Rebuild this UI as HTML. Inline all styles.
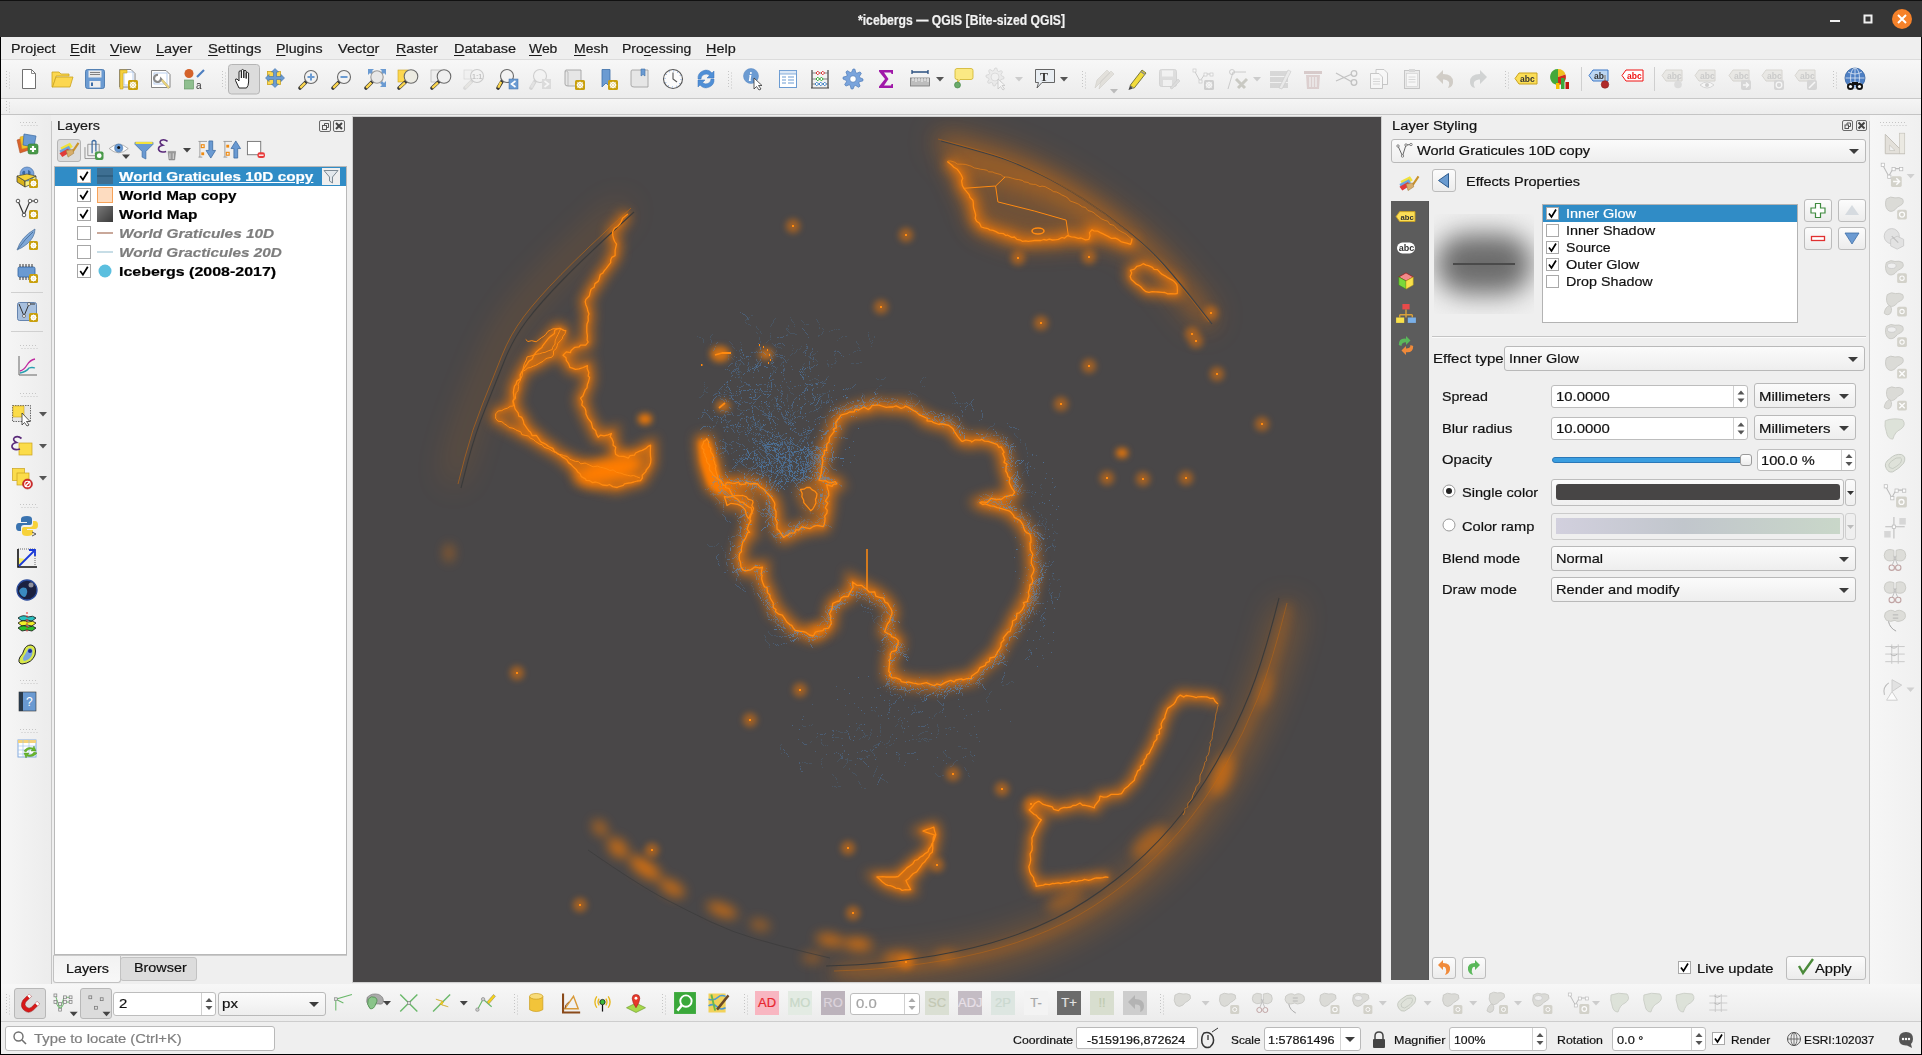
<!DOCTYPE html><html><head><meta charset="utf-8"><style>
html,body{margin:0;padding:0;width:1922px;height:1055px;overflow:hidden;background:#000}
.t{position:absolute;font-family:"Liberation Sans",sans-serif;line-height:16px;white-space:nowrap;transform-origin:0 0;-webkit-text-stroke:0.2px currentColor}
.r{position:absolute}
u{text-decoration:underline;text-underline-offset:2px}
svg{position:absolute;left:0;top:0}
</style></head><body>
<div class="r" style="left:0px;top:0px;width:1922px;height:1055px;background:#000;"></div>
<div class="r" style="left:1px;top:0px;width:1920px;height:1054px;background:#efefef;"></div>
<div class="r" style="left:0px;top:0px;width:1922px;height:37px;background:#363636;"></div>
<div class="r" style="left:0px;top:0px;width:1922px;height:1px;background:#111;"></div>
<div class="t" style="left:857.5px;top:12.0px;font-size:14.50px;color:#f2f2f2;transform:scaleX(0.8396);font-weight:bold;">*icebergs — QGIS [Bite-sized QGIS]</div>
<div class="r" style="left:1px;top:37px;width:1920px;height:23px;background:#efefef;"></div>
<div class="r" style="left:1px;top:59px;width:1920px;height:1px;background:#dcdcdc;"></div>
<div class="t" style="left:11.0px;top:41.3px;font-size:13.50px;color:#1a1a1a;transform:scaleX(1.0586);">Pro<u>j</u>ect</div>
<div class="t" style="left:70.0px;top:41.3px;font-size:13.50px;color:#1a1a1a;transform:scaleX(1.0822);"><u>E</u>dit</div>
<div class="t" style="left:110.0px;top:41.3px;font-size:13.50px;color:#1a1a1a;transform:scaleX(1.0631);"><u>V</u>iew</div>
<div class="t" style="left:156.0px;top:41.3px;font-size:13.50px;color:#1a1a1a;transform:scaleX(1.0735);"><u>L</u>ayer</div>
<div class="t" style="left:208.0px;top:41.3px;font-size:13.50px;color:#1a1a1a;transform:scaleX(1.0931);"><u>S</u>ettings</div>
<div class="t" style="left:276.0px;top:41.3px;font-size:13.50px;color:#1a1a1a;transform:scaleX(1.0517);"><u>P</u>lugins</div>
<div class="t" style="left:338.0px;top:41.3px;font-size:13.50px;color:#1a1a1a;transform:scaleX(1.0824);">Vect<u>o</u>r</div>
<div class="t" style="left:395.6px;top:41.3px;font-size:13.50px;color:#1a1a1a;transform:scaleX(1.0545);"><u>R</u>aster</div>
<div class="t" style="left:453.5px;top:41.3px;font-size:13.50px;color:#1a1a1a;transform:scaleX(1.0734);"><u>D</u>atabase</div>
<div class="t" style="left:529.0px;top:41.3px;font-size:13.50px;color:#1a1a1a;transform:scaleX(1.0302);"><u>W</u>eb</div>
<div class="t" style="left:573.7px;top:41.3px;font-size:13.50px;color:#1a1a1a;transform:scaleX(1.0369);"><u>M</u>esh</div>
<div class="t" style="left:622.4px;top:41.3px;font-size:13.50px;color:#1a1a1a;transform:scaleX(1.0395);">Pro<u>c</u>essing</div>
<div class="t" style="left:706.3px;top:41.3px;font-size:13.50px;color:#1a1a1a;transform:scaleX(1.0676);"><u>H</u>elp</div>
<div class="r" style="left:1px;top:60px;width:1920px;height:38px;background:linear-gradient(#f7f7f7,#ececec);"></div>
<div class="r" style="left:1px;top:98px;width:1920px;height:1px;background:#c8c8c8;"></div>
<div class="r" style="left:1px;top:99px;width:1920px;height:15px;background:linear-gradient(#f5f5f5,#ededed);"></div>
<div class="r" style="left:1px;top:114px;width:1920px;height:1px;background:#c4c4c4;"></div>
<div class="r" style="left:1px;top:115px;width:50px;height:869px;background:linear-gradient(90deg,#f6f6f6,#ececec);"></div>
<div class="r" style="left:51px;top:121px;width:1px;height:863px;background:#c6c6c6;"></div>
<div class="r" style="left:52px;top:115px;width:297px;height:869px;background:#efefef;"></div>
<div class="t" style="left:57.3px;top:118.3px;font-size:13.50px;color:#1a1a1a;transform:scaleX(1.0618);">Layers</div>
<div class="r" style="left:54px;top:166px;width:293px;height:789px;background:#fff;border:1px solid #b9b9b9;box-sizing:border-box;"></div>
<div class="r" style="left:53px;top:955px;width:294px;height:1px;background:#c9c9c9;"></div>
<div class="r" style="left:120px;top:957px;width:77px;height:24px;background:#dcdcdc;border:1px solid #c2c2c2;box-sizing:border-box;border-radius:3px;border-top-left-radius:3px;"></div>
<div class="r" style="left:53px;top:956px;width:68px;height:27px;background:linear-gradient(#f2f2f2,#f8f8f8);border:1px solid #c2c2c2;box-sizing:border-box;border-radius:3px;border-top:none;border-top-left-radius:0;border-top-right-radius:0;"></div>
<div class="t" style="left:65.5px;top:961.3px;font-size:13.50px;color:#111;transform:scaleX(1.0618);">Layers</div>
<div class="t" style="left:133.5px;top:960.3px;font-size:13.50px;color:#111;transform:scaleX(1.0640);">Browser</div>
<div class="r" style="left:349px;top:115px;width:4px;height:869px;background:#efefef;"></div>
<div class="r" style="left:352px;top:116px;width:1030px;height:867px;background:#d0d0d0;"></div>
<div class="r" style="left:353px;top:117px;width:1028px;height:865px;background:#494748;"></div>
<div class="r" style="left:1382px;top:115px;width:488px;height:869px;background:#efefef;"></div>
<div class="r" style="left:1869px;top:121px;width:1px;height:863px;background:#c8c8c8;"></div>
<div class="r" style="left:1870px;top:115px;width:51px;height:869px;background:linear-gradient(90deg,#f6f6f6,#f0f0f0);"></div>
<div class="r" style="left:1px;top:984px;width:1920px;height:37px;background:linear-gradient(#f7f7f7,#ececec);"></div>
<div class="r" style="left:1px;top:1021px;width:1920px;height:1px;background:#cdcdcd;"></div>
<div class="r" style="left:1px;top:1022px;width:1920px;height:32px;background:#efefef;"></div>
<div class="r" style="left:319px;top:120px;width:12px;height:12px;background:none;border:1px solid #6a6a6a;box-sizing:border-box;border-radius:2px;"></div>
<div class="r" style="left:333px;top:120px;width:12px;height:12px;background:none;border:1px solid #6a6a6a;box-sizing:border-box;border-radius:2px;"></div>
<svg width="12" height="12" style="position:absolute;left:319px;top:120px"><rect x="3.5" y="5.5" width="4" height="4" fill="none" stroke="#555"/><path d="M5.5 5.5 V3.5 H9.5 V7.5 H7.5" fill="none" stroke="#555"/></svg><svg width="12" height="12" style="position:absolute;left:333px;top:120px"><path d="M3 3 L9 9 M9 3 L3 9" stroke="#444" stroke-width="2"/></svg><div class="r" style="left:57px;top:139px;width:24px;height:23px;background:#dcdcdc;border:1px solid #b5b5b5;box-sizing:border-box;border-radius:3px;"></div>
<div class="r" style="left:55px;top:167px;width:291px;height:19px;background:#308cc6;"></div>
<svg width="14" height="14" style="position:absolute;left:77px;top:169px"><rect x="0.5" y="0.5" width="13" height="13" fill="#fff" stroke="#d9c9c0"/><path d="M3.23 7.00 L5.92 10.77 L10.77 2.69" fill="none" stroke="#000" stroke-width="1.7"/></svg>
<div class="t" style="left:119.4px;top:169.3px;font-size:13.50px;color:#fff;transform:scaleX(1.1330);font-weight:bold;text-decoration:underline;text-underline-offset:1px;">World Graticules 10D copy</div>
<svg width="14" height="14" style="position:absolute;left:77px;top:188px"><rect x="0.5" y="0.5" width="13" height="13" fill="#fff" stroke="#a6a6a6"/><path d="M3.23 7.00 L5.92 10.77 L10.77 2.69" fill="none" stroke="#000" stroke-width="1.7"/></svg>
<div class="t" style="left:119.4px;top:188.3px;font-size:13.50px;color:#000;transform:scaleX(1.1295);font-weight:bold;">World Map copy</div>
<svg width="14" height="14" style="position:absolute;left:77px;top:207px"><rect x="0.5" y="0.5" width="13" height="13" fill="#fff" stroke="#a6a6a6"/><path d="M3.23 7.00 L5.92 10.77 L10.77 2.69" fill="none" stroke="#000" stroke-width="1.7"/></svg>
<div class="t" style="left:119.4px;top:207.3px;font-size:13.50px;color:#000;transform:scaleX(1.1422);font-weight:bold;">World Map</div>
<svg width="14" height="14" style="position:absolute;left:77px;top:226px"><rect x="0.5" y="0.5" width="13" height="13" fill="#fff" stroke="#a6a6a6"/></svg>
<div class="t" style="left:119.4px;top:226.3px;font-size:13.50px;color:#7d7d7d;transform:scaleX(1.1385);font-weight:bold;font-style:italic;">World Graticules 10D</div>
<svg width="14" height="14" style="position:absolute;left:77px;top:245px"><rect x="0.5" y="0.5" width="13" height="13" fill="#fff" stroke="#a6a6a6"/></svg>
<div class="t" style="left:119.4px;top:245.3px;font-size:13.50px;color:#7d7d7d;transform:scaleX(1.1327);font-weight:bold;font-style:italic;">World Gracticules 20D</div>
<svg width="14" height="14" style="position:absolute;left:77px;top:264px"><rect x="0.5" y="0.5" width="13" height="13" fill="#fff" stroke="#a6a6a6"/><path d="M3.23 7.00 L5.92 10.77 L10.77 2.69" fill="none" stroke="#000" stroke-width="1.7"/></svg>
<div class="t" style="left:119.4px;top:264.3px;font-size:13.50px;color:#000;transform:scaleX(1.1828);font-weight:bold;">Icebergs (2008-2017)</div>
<div class="r" style="left:97px;top:168px;width:16px;height:16px;background:#3e6f92;"></div>
<div class="r" style="left:97px;top:175px;width:16px;height:2px;background:#2f5f80;"></div>
<div class="r" style="left:97px;top:187px;width:16px;height:16px;background:#fddcc0;border:1px solid #f6a35a;box-sizing:border-box;"></div>
<div class="r" style="left:97px;top:206px;width:16px;height:16px;background:linear-gradient(135deg,#7a7a7a,#3a3a3a);"></div>
<div class="r" style="left:97px;top:232px;width:16px;height:2px;background:#c9a89a;"></div>
<div class="r" style="left:97px;top:251px;width:16px;height:2px;background:#c7dde6;"></div>
<svg width="16" height="16" style="position:absolute;left:97px;top:263px"><circle cx="8" cy="8" r="6.5" fill="#5bbfdf"/></svg><div class="r" style="left:322px;top:168px;width:18px;height:17px;background:#efefef;"></div>
<svg width="18" height="17" style="position:absolute;left:322px;top:168px"><path d="M2 2.5 H16 L10.5 9 V15 L7.5 13 V9Z" fill="#e3e8ec" stroke="#7d8a94" stroke-width="1"/></svg><div class="t" style="left:1392.0px;top:118.3px;font-size:13.50px;color:#111;transform:scaleX(1.0910);">Layer Styling</div>
<div class="r" style="left:1842px;top:120px;width:11px;height:11px;background:none;border:1px solid #6a6a6a;box-sizing:border-box;border-radius:2px;"></div>
<div class="r" style="left:1856px;top:120px;width:11px;height:11px;background:none;border:1px solid #6a6a6a;box-sizing:border-box;border-radius:2px;"></div>
<svg width="11" height="11" style="position:absolute;left:1842px;top:120px"><rect x="3" y="5" width="3.5" height="3.5" fill="none" stroke="#555"/><path d="M5 5 V3 H8.5 V6.5 H6.5" fill="none" stroke="#555"/></svg><svg width="11" height="11" style="position:absolute;left:1856px;top:120px"><path d="M2.5 2.5 L8.5 8.5 M8.5 2.5 L2.5 8.5" stroke="#444" stroke-width="2"/></svg><div class="r" style="left:1391px;top:139px;width:475px;height:24px;background:linear-gradient(#fbfbfb,#eeeeee);border:1px solid #b9b9b9;box-sizing:border-box;border-radius:3px;"></div>
<svg width="12" height="8" style="position:absolute;left:1848px;top:148.0px"><path d="M1 1 L11 1 L6 6Z" fill="#3c3c3c"/></svg><div class="t" style="left:1416.8px;top:143.3px;font-size:13.50px;color:#111;transform:scaleX(1.0799);">World Graticules 10D copy</div>
<svg width="18" height="16" style="position:absolute;left:1396px;top:142px"><path d="M2 4 L6.5 14 L10 3 L15 2.5" fill="none" stroke="#555" stroke-width="0.9"/><circle cx="2" cy="4" r="1.2" fill="#fff" stroke="#555" stroke-width="0.7"/><circle cx="6.5" cy="14" r="1.2" fill="#fff" stroke="#555" stroke-width="0.7"/><circle cx="10" cy="3" r="1.2" fill="#fff" stroke="#555" stroke-width="0.7"/><circle cx="15" cy="2.5" r="1.2" fill="#fff" stroke="#555" stroke-width="0.7"/></svg><div class="r" style="left:1432px;top:169px;width:24px;height:23px;background:linear-gradient(#fcfcfc,#ececec);border:1px solid #bcbcbc;box-sizing:border-box;border-radius:3px;"></div>
<svg width="24" height="23" style="position:absolute;left:1432px;top:169px"><path d="M16.5 4.5 V18.5 L6.5 11.5Z" fill="#6a9bd0" stroke="#2d5b8e" stroke-width="1"/></svg><div class="t" style="left:1466.0px;top:173.9px;font-size:13.50px;color:#111;transform:scaleX(1.0727);">Effects Properties</div>
<div class="r" style="left:1391px;top:201px;width:38px;height:779px;background:#5c5c5c;"></div>
<div class="r" style="left:1428px;top:201px;width:1px;height:779px;background:#555;"></div>
<div class="r" style="left:1434px;top:214px;width:100px;height:100px;background:#efefef;overflow:hidden"><div style="position:absolute;left:2px;top:20px;width:96px;height:60px;background:#6c6c6c;filter:blur(13px);border-radius:42px"></div><div style="position:absolute;left:19px;top:49px;width:62px;height:2px;background:#4a4a4a"></div></div><div class="r" style="left:1542px;top:204px;width:256px;height:119px;background:#fff;border:1px solid #b3b3b3;box-sizing:border-box;"></div>
<div class="r" style="left:1543px;top:205px;width:254px;height:17px;background:#308cc6;"></div>
<svg width="13" height="13" style="position:absolute;left:1546px;top:207px"><rect x="0.5" y="0.5" width="12" height="12" fill="#fff" stroke="#a9a9a9"/><path d="M3.00 6.50 L5.50 10.00 L10.00 2.50" fill="none" stroke="#000" stroke-width="1.7"/></svg>
<div class="t" style="left:1566.0px;top:206.3px;font-size:13.50px;color:#fff;transform:scaleX(1.0733);">Inner Glow</div>
<svg width="13" height="13" style="position:absolute;left:1546px;top:224px"><rect x="0.5" y="0.5" width="12" height="12" fill="#fff" stroke="#a9a9a9"/></svg>
<div class="t" style="left:1566.0px;top:223.3px;font-size:13.50px;color:#111;transform:scaleX(1.0694);">Inner Shadow</div>
<svg width="13" height="13" style="position:absolute;left:1546px;top:241px"><rect x="0.5" y="0.5" width="12" height="12" fill="#fff" stroke="#a9a9a9"/><path d="M3.00 6.50 L5.50 10.00 L10.00 2.50" fill="none" stroke="#000" stroke-width="1.7"/></svg>
<div class="t" style="left:1566.0px;top:240.3px;font-size:13.50px;color:#111;transform:scaleX(1.0439);">Source</div>
<svg width="13" height="13" style="position:absolute;left:1546px;top:258px"><rect x="0.5" y="0.5" width="12" height="12" fill="#fff" stroke="#a9a9a9"/><path d="M3.00 6.50 L5.50 10.00 L10.00 2.50" fill="none" stroke="#000" stroke-width="1.7"/></svg>
<div class="t" style="left:1566.0px;top:257.3px;font-size:13.50px;color:#111;transform:scaleX(1.0739);">Outer Glow</div>
<svg width="13" height="13" style="position:absolute;left:1546px;top:275px"><rect x="0.5" y="0.5" width="12" height="12" fill="#fff" stroke="#a9a9a9"/></svg>
<div class="t" style="left:1566.0px;top:274.3px;font-size:13.50px;color:#111;transform:scaleX(1.0600);">Drop Shadow</div>
<div class="r" style="left:1804px;top:199px;width:28px;height:23px;background:linear-gradient(#fcfcfc,#ececec);border:1px solid #bcbcbc;box-sizing:border-box;border-radius:3px;"></div>
<div class="r" style="left:1838px;top:199px;width:28px;height:23px;background:linear-gradient(#fcfcfc,#ececec);border:1px solid #bcbcbc;box-sizing:border-box;border-radius:3px;"></div>
<div class="r" style="left:1804px;top:227px;width:28px;height:23px;background:linear-gradient(#fcfcfc,#ececec);border:1px solid #bcbcbc;box-sizing:border-box;border-radius:3px;"></div>
<div class="r" style="left:1838px;top:227px;width:28px;height:23px;background:linear-gradient(#fcfcfc,#ececec);border:1px solid #bcbcbc;box-sizing:border-box;border-radius:3px;"></div>
<svg width="28" height="23" style="position:absolute;left:1804px;top:199px"><path d="M11.5 4.5 H16.5 V9 H21 V14 H16.5 V18.5 H11.5 V14 H7 V9 H11.5Z" fill="#fff" stroke="#3f8a3f" stroke-width="1.2"/></svg><svg width="28" height="23" style="position:absolute;left:1838px;top:199px"><path d="M7 16 L14 6 L21 16Z" fill="#d6dbe0"/></svg><svg width="28" height="23" style="position:absolute;left:1804px;top:227px"><rect x="7.5" y="9.5" width="13" height="4" fill="#fff" stroke="#e03030" stroke-width="1.3"/></svg><svg width="28" height="23" style="position:absolute;left:1838px;top:227px"><path d="M7 6 L21 6 L14 17Z" fill="#6c9bd2" stroke="#3f6fa6" stroke-width="0.8"/></svg><div class="r" style="left:1432px;top:336px;width:434px;height:1px;background:#c4c4c4;"></div>
<div class="r" style="left:1432px;top:337px;width:434px;height:1px;background:#fafafa;"></div>
<div class="t" style="left:1433.0px;top:351.3px;font-size:13.50px;color:#111;transform:scaleX(1.1110);">Effect type</div>
<div class="r" style="left:1504px;top:346px;width:361px;height:25px;background:linear-gradient(#fbfbfb,#eeeeee);border:1px solid #b9b9b9;box-sizing:border-box;border-radius:3px;"></div>
<svg width="12" height="8" style="position:absolute;left:1847px;top:355.5px"><path d="M1 1 L11 1 L6 6Z" fill="#3c3c3c"/></svg><div class="t" style="left:1509.0px;top:351.3px;font-size:13.50px;color:#111;transform:scaleX(1.0733);">Inner Glow</div>
<div class="t" style="left:1442.0px;top:389.3px;font-size:13.50px;color:#111;transform:scaleX(1.0518);">Spread</div>
<div class="r" style="left:1551px;top:385px;width:197px;height:23px;background:#fff;border:1px solid #bdbdbd;box-sizing:border-box;border-radius:3px;"></div>
<div class="r" style="left:1733px;top:386px;width:1px;height:21px;background:#d0d0d0;"></div>
<svg width="12" height="23" style="position:absolute;left:1734.5px;top:385px"><path d="M2.5 9.5 L6 5.5 L9.5 9.5Z M2.5 13.5 L6 17.5 L9.5 13.5Z" fill="#555"/></svg><div class="t" style="left:1556.3px;top:389.3px;font-size:13.50px;color:#111;transform:scaleX(1.1018);">10.0000</div>
<div class="r" style="left:1754px;top:383px;width:102px;height:25px;background:linear-gradient(#fbfbfb,#eeeeee);border:1px solid #b9b9b9;box-sizing:border-box;border-radius:3px;"></div>
<svg width="12" height="8" style="position:absolute;left:1838px;top:392.5px"><path d="M1 1 L11 1 L6 6Z" fill="#3c3c3c"/></svg><div class="t" style="left:1759.3px;top:389.3px;font-size:13.50px;color:#111;transform:scaleX(1.1091);">Millimeters</div>
<div class="t" style="left:1442.0px;top:421.3px;font-size:13.50px;color:#111;transform:scaleX(1.0916);">Blur radius</div>
<div class="r" style="left:1551px;top:417px;width:197px;height:23px;background:#fff;border:1px solid #bdbdbd;box-sizing:border-box;border-radius:3px;"></div>
<div class="r" style="left:1733px;top:418px;width:1px;height:21px;background:#d0d0d0;"></div>
<svg width="12" height="23" style="position:absolute;left:1734.5px;top:417px"><path d="M2.5 9.5 L6 5.5 L9.5 9.5Z M2.5 13.5 L6 17.5 L9.5 13.5Z" fill="#555"/></svg><div class="t" style="left:1556.3px;top:421.3px;font-size:13.50px;color:#111;transform:scaleX(1.1018);">10.0000</div>
<div class="r" style="left:1754px;top:415px;width:102px;height:25px;background:linear-gradient(#fbfbfb,#eeeeee);border:1px solid #b9b9b9;box-sizing:border-box;border-radius:3px;"></div>
<svg width="12" height="8" style="position:absolute;left:1838px;top:424.5px"><path d="M1 1 L11 1 L6 6Z" fill="#3c3c3c"/></svg><div class="t" style="left:1759.3px;top:421.3px;font-size:13.50px;color:#111;transform:scaleX(1.1091);">Millimeters</div>
<div class="t" style="left:1442.0px;top:452.3px;font-size:13.50px;color:#111;transform:scaleX(1.0926);">Opacity</div>
<div class="r" style="left:1552px;top:457px;width:194px;height:6px;background:#3a9ee0;border:1px solid #2a78b8;box-sizing:border-box;border-radius:3px;"></div>
<div class="r" style="left:1740px;top:454px;width:12px;height:12px;background:linear-gradient(#fff,#ececec);border:1px solid #9a9a9a;box-sizing:border-box;border-radius:3px;"></div>
<div class="r" style="left:1757px;top:449px;width:99px;height:22px;background:#fff;border:1px solid #bdbdbd;box-sizing:border-box;border-radius:3px;"></div>
<div class="r" style="left:1841px;top:450px;width:1px;height:20px;background:#d0d0d0;"></div>
<svg width="12" height="22" style="position:absolute;left:1842.5px;top:449px"><path d="M2.5 9.0 L6 5.0 L9.5 9.0Z M2.5 13.0 L6 17.0 L9.5 13.0Z" fill="#555"/></svg><div class="t" style="left:1761.3px;top:453.3px;font-size:13.50px;color:#111;transform:scaleX(1.0841);">100.0 %</div>
<svg width="15" height="15" style="position:absolute;left:1442px;top:484px"><circle cx="7" cy="7" r="6" fill="#fff" stroke="#9a9a9a"/><circle cx="7" cy="7" r="3" fill="#222"/></svg><div class="t" style="left:1462.3px;top:485.3px;font-size:13.50px;color:#111;transform:scaleX(1.0790);">Single color</div>
<div class="r" style="left:1551px;top:479px;width:293px;height:27px;background:linear-gradient(#fbfbfb,#efefef);border:1px solid #bdbdbd;box-sizing:border-box;border-radius:3px;"></div>
<div class="r" style="left:1556px;top:484px;width:284px;height:16px;background:#474545;border:1px solid none;box-sizing:border-box;border-radius:3px;"></div>
<div class="r" style="left:1845px;top:479px;width:11px;height:27px;background:linear-gradient(#fbfbfb,#efefef);border:1px solid #bdbdbd;box-sizing:border-box;border-radius:3px;"></div>
<svg width="11" height="8" style="position:absolute;left:1845px;top:489px"><path d="M2 2 L9 2 L5.5 6Z" fill="#333"/></svg><svg width="15" height="15" style="position:absolute;left:1442px;top:518px"><circle cx="7" cy="7" r="6" fill="#fff" stroke="#9a9a9a"/></svg><div class="t" style="left:1462.3px;top:519.3px;font-size:13.50px;color:#111;transform:scaleX(1.0829);">Color ramp</div>
<div class="r" style="left:1551px;top:513px;width:293px;height:27px;background:#efefef;border:1px solid #cbcbcb;box-sizing:border-box;border-radius:3px;"></div>
<div class="r" style="left:1556px;top:518px;width:284px;height:16px;background:linear-gradient(90deg,#d2d0de,#c1c6cc 45%,#c9d7c9);"></div>
<div class="r" style="left:1845px;top:513px;width:11px;height:27px;background:#efefef;border:1px solid #d0d0d0;box-sizing:border-box;border-radius:3px;"></div>
<svg width="11" height="8" style="position:absolute;left:1845px;top:523px"><path d="M2 2 L9 2 L5.5 6Z" fill="#bbb"/></svg><div class="t" style="left:1442.0px;top:551.3px;font-size:13.50px;color:#111;transform:scaleX(1.0830);">Blend mode</div>
<div class="r" style="left:1551px;top:546px;width:305px;height:25px;background:linear-gradient(#fbfbfb,#eeeeee);border:1px solid #b9b9b9;box-sizing:border-box;border-radius:3px;"></div>
<svg width="12" height="8" style="position:absolute;left:1838px;top:555.5px"><path d="M1 1 L11 1 L6 6Z" fill="#3c3c3c"/></svg><div class="t" style="left:1556.0px;top:551.3px;font-size:13.50px;color:#111;transform:scaleX(1.0812);">Normal</div>
<div class="t" style="left:1442.0px;top:582.3px;font-size:13.50px;color:#111;transform:scaleX(1.0860);">Draw mode</div>
<div class="r" style="left:1551px;top:577px;width:305px;height:25px;background:linear-gradient(#fbfbfb,#eeeeee);border:1px solid #b9b9b9;box-sizing:border-box;border-radius:3px;"></div>
<svg width="12" height="8" style="position:absolute;left:1838px;top:586.5px"><path d="M1 1 L11 1 L6 6Z" fill="#3c3c3c"/></svg><div class="t" style="left:1556.0px;top:582.3px;font-size:13.50px;color:#111;transform:scaleX(1.0831);">Render and modify</div>
<div class="r" style="left:1432px;top:957px;width:24px;height:22px;background:linear-gradient(#fcfcfc,#ececec);border:1px solid #bcbcbc;box-sizing:border-box;border-radius:3px;"></div>
<div class="r" style="left:1462px;top:957px;width:24px;height:22px;background:linear-gradient(#fcfcfc,#ececec);border:1px solid #bcbcbc;box-sizing:border-box;border-radius:3px;"></div>
<svg width="13" height="13" style="position:absolute;left:1678px;top:961px"><rect x="0.5" y="0.5" width="12" height="12" fill="#fff" stroke="#a9a9a9"/><path d="M3.00 6.50 L5.50 10.00 L10.00 2.50" fill="none" stroke="#000" stroke-width="1.7"/></svg>
<div class="t" style="left:1697.3px;top:961.3px;font-size:13.50px;color:#111;transform:scaleX(1.0958);">Live update</div>
<div class="r" style="left:1786px;top:956px;width:80px;height:24px;background:linear-gradient(#fcfcfc,#ececec);border:1px solid #bcbcbc;box-sizing:border-box;border-radius:3px;"></div>
<div class="t" style="left:1815.2px;top:961.3px;font-size:13.50px;color:#111;transform:scaleX(1.0869);">Apply</div>
<div class="r" style="left:14px;top:988px;width:32px;height:31px;background:#dcdcdc;border:1px solid #b8b8b8;box-sizing:border-box;border-radius:3px;"></div>
<div class="r" style="left:80px;top:988px;width:32px;height:31px;background:#dcdcdc;border:1px solid #b8b8b8;box-sizing:border-box;border-radius:3px;"></div>
<div class="r" style="left:113px;top:992px;width:103px;height:24px;background:#fff;border:1px solid #bdbdbd;box-sizing:border-box;border-radius:3px;"></div>
<div class="r" style="left:201px;top:993px;width:1px;height:22px;background:#d0d0d0;"></div>
<svg width="12" height="24" style="position:absolute;left:202.5px;top:992px"><path d="M2.5 10.0 L6 6.0 L9.5 10.0Z M2.5 14.0 L6 18.0 L9.5 14.0Z" fill="#555"/></svg><div class="t" style="left:118.6px;top:996.3px;font-size:13.50px;color:#111;transform:scaleX(1.1018);">2</div>
<div class="r" style="left:218px;top:992px;width:108px;height:24px;background:linear-gradient(#fbfbfb,#eeeeee);border:1px solid #b9b9b9;box-sizing:border-box;border-radius:3px;"></div>
<svg width="12" height="8" style="position:absolute;left:308px;top:1001.0px"><path d="M1 1 L11 1 L6 6Z" fill="#3c3c3c"/></svg><div class="t" style="left:222.3px;top:996.3px;font-size:13.50px;color:#111;transform:scaleX(1.1185);">px</div>
<div class="r" style="left:755px;top:991px;width:24px;height:24px;background:#f8b6c1;"></div>
<div class="t" style="left:755px;top:995px;width:24px;text-align:center;font-size:13px;color:#e8262f">AD</div><div class="r" style="left:788px;top:991px;width:24px;height:24px;background:#e3ebe3;"></div>
<div class="t" style="left:788px;top:995px;width:24px;text-align:center;font-size:13px;color:#c8d8c8">MO</div><div class="r" style="left:821px;top:991px;width:24px;height:24px;background:#bcb3bc;"></div>
<div class="t" style="left:821px;top:995px;width:24px;text-align:center;font-size:13px;color:#dcd4dc">RO</div><div class="r" style="left:850px;top:993px;width:70px;height:22px;background:#fff;border:1px solid #bdbdbd;box-sizing:border-box;border-radius:3px;"></div>
<div class="r" style="left:904px;top:994px;width:1px;height:20px;background:#d0d0d0;"></div>
<svg width="12" height="22" style="position:absolute;left:906.0px;top:993px"><path d="M2.5 9.0 L6 5.0 L9.5 9.0Z M2.5 13.0 L6 17.0 L9.5 13.0Z" fill="#aaa"/></svg><div class="t" style="left:856.0px;top:996.3px;font-size:13.50px;color:#a3a3a3;transform:scaleX(1.1017);">0.0</div>
<div class="r" style="left:925px;top:991px;width:24px;height:24px;background:#dadfd3;"></div>
<div class="t" style="left:925px;top:995px;width:24px;text-align:center;font-size:13px;color:#c3c8b3">SC</div><div class="r" style="left:958px;top:991px;width:24px;height:24px;background:#c4bcc4;"></div>
<div class="t" style="left:958px;top:995px;width:24px;text-align:center;font-size:13px;color:#e8e0e8">ADJ</div><div class="r" style="left:991px;top:991px;width:24px;height:24px;background:#dde6e1;"></div>
<div class="t" style="left:991px;top:995px;width:24px;text-align:center;font-size:13px;color:#cbd9d0">2P</div><div class="r" style="left:1024px;top:991px;width:24px;height:24px;background:#f3f3f3;"></div>
<div class="t" style="left:1024px;top:995px;width:24px;text-align:center;font-size:13px;color:#a8a8a8">T-</div><div class="r" style="left:1057px;top:991px;width:24px;height:24px;background:#6b6b6b;"></div>
<div class="t" style="left:1057px;top:995px;width:24px;text-align:center;font-size:13px;color:#e2e2e2">T+</div><div class="r" style="left:1090px;top:991px;width:24px;height:24px;background:#d8decf;"></div>
<div class="t" style="left:1090px;top:995px;width:24px;text-align:center;font-size:13px;color:#bfcbb0">!!</div><div class="r" style="left:1123px;top:991px;width:24px;height:24px;background:#cdcdcd;"></div>
<div class="r" style="left:5px;top:1026px;width:270px;height:25px;background:#fff;border:1px solid #b9b9b9;box-sizing:border-box;border-radius:3px;"></div>
<svg width="16" height="16" style="position:absolute;left:12px;top:1030px"><circle cx="6.5" cy="6.5" r="4.5" fill="none" stroke="#6f6f6f" stroke-width="1.4"/><path d="M10 10 L14 14" stroke="#6f6f6f" stroke-width="1.6"/></svg><div class="t" style="left:34.3px;top:1031.3px;font-size:13.50px;color:#7f7f7f;transform:scaleX(1.0973);">Type to locate (Ctrl+K)</div>
<div class="t" style="left:1012.5px;top:1032.0px;font-size:11.42px;color:#111;transform:scaleX(1.0792);">Coordinate</div>
<div class="r" style="left:1076px;top:1027px;width:122px;height:22px;background:#fff;border:1px solid #b9b9b9;box-sizing:border-box;border-radius:2px;"></div>
<div class="t" style="left:1086.9px;top:1032.0px;font-size:11.42px;color:#111;transform:scaleX(1.0993);">-5159196,872624</div>
<div class="t" style="left:1231.4px;top:1032.0px;font-size:11.42px;color:#111;transform:scaleX(1.0358);">Scale</div>
<div class="r" style="left:1264px;top:1027px;width:97px;height:24px;background:#fff;border:1px solid #b9b9b9;box-sizing:border-box;border-radius:3px;"></div>
<svg width="12" height="8" style="position:absolute;left:1344px;top:1036.0px"><path d="M1 1 L11 1 L6 6Z" fill="#3c3c3c"/></svg><div class="t" style="left:1267.8px;top:1032.0px;font-size:11.42px;color:#111;transform:scaleX(1.1052);">1:57861496</div>
<div class="r" style="left:1340px;top:1028px;width:1px;height:22px;background:#d5d5d5;"></div>
<div class="t" style="left:1394.3px;top:1032.0px;font-size:11.42px;color:#111;transform:scaleX(1.0954);">Magnifier</div>
<div class="r" style="left:1449px;top:1027px;width:98px;height:24px;background:#fff;border:1px solid #bdbdbd;box-sizing:border-box;border-radius:3px;"></div>
<div class="r" style="left:1532px;top:1028px;width:1px;height:22px;background:#d0d0d0;"></div>
<svg width="12" height="24" style="position:absolute;left:1533.5px;top:1027px"><path d="M2.5 10.0 L6 6.0 L9.5 10.0Z M2.5 14.0 L6 18.0 L9.5 14.0Z" fill="#555"/></svg><div class="t" style="left:1454.2px;top:1032.0px;font-size:11.42px;color:#111;transform:scaleX(1.0764);">100%</div>
<div class="t" style="left:1556.5px;top:1032.0px;font-size:11.42px;color:#111;transform:scaleX(1.0813);">Rotation</div>
<div class="r" style="left:1612px;top:1027px;width:94px;height:24px;background:#fff;border:1px solid #bdbdbd;box-sizing:border-box;border-radius:3px;"></div>
<div class="r" style="left:1691px;top:1028px;width:1px;height:22px;background:#d0d0d0;"></div>
<svg width="12" height="24" style="position:absolute;left:1692.5px;top:1027px"><path d="M2.5 10.0 L6 6.0 L9.5 10.0Z M2.5 14.0 L6 18.0 L9.5 14.0Z" fill="#555"/></svg><div class="t" style="left:1616.8px;top:1032.0px;font-size:11.42px;color:#111;transform:scaleX(1.1215);">0.0 °</div>
<svg width="13" height="13" style="position:absolute;left:1712px;top:1032px"><rect x="0.5" y="0.5" width="12" height="12" fill="#fff" stroke="#a9a9a9"/><path d="M3.00 6.50 L5.50 10.00 L10.00 2.50" fill="none" stroke="#000" stroke-width="1.7"/></svg>
<div class="t" style="left:1731.4px;top:1032.0px;font-size:11.42px;color:#111;transform:scaleX(1.0454);">Render</div>
<div class="t" style="left:1804.3px;top:1032.0px;font-size:11.42px;color:#111;transform:scaleX(1.0378);">ESRI:102037</div>
<svg width="1922" height="1055" viewBox="0 0 1922 1055" style="position:absolute;left:0;top:0"><defs>
<clipPath id="mc"><rect x="353" y="117" width="1028" height="865"/></clipPath>
<filter id="b2" x="-50%" y="-50%" width="200%" height="200%"><feGaussianBlur stdDeviation="2"/></filter>
<filter id="b3" x="-50%" y="-50%" width="200%" height="200%"><feGaussianBlur stdDeviation="3"/></filter>
<filter id="b6" x="-50%" y="-50%" width="200%" height="200%"><feGaussianBlur stdDeviation="6"/></filter>
<filter id="b10" x="-50%" y="-50%" width="200%" height="200%"><feGaussianBlur stdDeviation="10"/></filter>
<filter id="b16" x="-50%" y="-50%" width="200%" height="200%"><feGaussianBlur stdDeviation="16"/></filter>
</defs><g clip-path="url(#mc)"><g filter="url(#b16)" opacity="0.5"><path d="M1283 600 Q1268 660 1254.0 695.0 Q1240 730 1220.0 765.0 Q1200 800 1175.0 829.0 Q1150 858 1120.0 881.5 Q1090 905 1060.0 920.0 Q1030 935 995.0 945.0 Q960 955 920.0 960.5 Q880 966 855.0 967.0 L830 968" stroke="#ff7d00" stroke-width="18" fill="none" transform="translate(6 6)" opacity="0.75"/><path d="M941 144 Q990 157 1005.5 162.5 Q1021 168 1040.5 177.5 Q1060 187 1082.5 201.5 Q1105 216 1127.5 234.0 Q1150 252 1165.0 269.0 Q1180 286 1196.0 306.5 L1212 327" stroke="#ff7d00" stroke-width="20" fill="none" transform="translate(-3 -4)" opacity="0.6"/><path d="M631 208 Q585 250 561.0 274.5 Q537 299 523.5 317.0 Q510 335 501.5 356.5 Q493 378 482.5 404.0 Q472 430 465.0 457.0 L458 484" stroke="#ff7d00" stroke-width="12" fill="none" transform="translate(-6 -2)" opacity="0.5"/><path d="M947.3 161.4 L950.4 164.0 L951.7 165.0 L953.9 167.3 L957.3 169.3 L959.2 171.8 L961.0 174.5 L962.7 178.2 L961.6 181.0 L962.4 185.6 L964.3 188.9 L966.6 191.6 L969.1 194.6 L970.0 197.5 L972.8 200.2 L973.3 202.6 L973.3 205.6 L973.6 208.0 L975.0 212.4 L975.7 215.2 L975.2 218.4 L976.6 221.3 L979.5 223.3 L981.3 227.0 L984.3 227.9 L988.0 228.7 L989.9 229.9 L993.1 230.4 L995.9 231.6 L998.6 233.1 L1003.3 233.6 L1005.8 235.6 L1007.3 235.0 L1011.8 237.4 L1014.4 237.0 L1016.9 239.4 L1020.7 240.2 L1022.3 241.3 L1025.7 240.9 L1028.2 241.4 L1032.2 240.8 L1034.5 240.5 L1038.2 240.3 L1040.8 240.5 L1043.8 239.5 L1046.5 240.2 L1049.4 239.2 L1052.4 240.0 L1056.4 239.7 L1058.4 239.4 L1062.0 237.5 L1064.4 238.2 L1067.6 235.6 L1071.4 236.8 L1074.4 237.1 L1078.4 238.4 L1081.1 238.0 L1085.5 239.9 L1088.9 239.4 L1090.0 235.7 L1089.5 232.6 L1092.0 229.7 L1093.7 230.8 L1097.9 231.2 L1100.3 232.6 L1102.6 233.7 L1105.5 235.1 L1108.1 236.4 L1111.2 238.3 L1115.2 238.1 L1118.5 239.7 L1120.9 241.6 L1123.6 242.3 L1126.8 243.2 L1130.6 244.4 L1131.6 241.2 L1131.7 238.1 L1128.4 235.7 L1126.4 234.5 L1124.7 233.8 L1120.3 231.1 L1117.7 229.8 L1115.4 228.2 L1113.1 224.8 L1109.3 223.2 L1108.3 221.2 L1104.8 219.8 L1101.7 219.0 L1098.6 217.1 L1096.6 215.9 L1093.5 214.1 L1090.5 211.7 L1088.0 210.6 L1085.7 207.4 L1081.4 206.6 L1079.9 205.1 L1076.0 204.4 L1073.1 201.1 L1069.8 199.5 L1068.3 198.1 L1065.4 198.1 L1063.1 196.5 L1059.1 194.6 L1057.1 193.3 L1053.2 191.9 L1050.0 189.4 L1048.9 188.2 L1044.5 188.1 L1042.0 185.7 L1038.2 185.4 L1035.9 185.9 L1032.8 184.9 L1031.1 183.2 L1028.4 183.1 L1024.5 181.3 L1021.5 181.8 L1018.8 179.5 L1015.5 179.3 L1012.2 178.7 L1009.0 178.4 L1006.4 176.1 L1004.2 175.6 L1001.8 175.1 L998.1 174.9 L994.5 173.9 L992.4 172.4 L990.1 170.7 L986.9 170.0 L983.9 169.2 L979.3 169.0 L978.1 167.6 L974.2 167.5 L970.8 166.4 L967.3 165.4 L965.4 164.4 L960.9 163.1 L958.5 163.1 L955.5 163.0 L950.4 162.6 Z" fill="#ff7d00" opacity="0.45"/></g><g filter="url(#b10)" opacity="0.35"><path d="M947.3 161.4 L950.4 164.0 L951.7 165.0 L953.9 167.3 L957.3 169.3 L959.2 171.8 L961.0 174.5 L962.7 178.2 L961.6 181.0 L962.4 185.6 L964.3 188.9 L966.6 191.6 L969.1 194.6 L970.0 197.5 L972.8 200.2 L973.3 202.6 L973.3 205.6 L973.6 208.0 L975.0 212.4 L975.7 215.2 L975.2 218.4 L976.6 221.3 L979.5 223.3 L981.3 227.0 L984.3 227.9 L988.0 228.7 L989.9 229.9 L993.1 230.4 L995.9 231.6 L998.6 233.1 L1003.3 233.6 L1005.8 235.6 L1007.3 235.0 L1011.8 237.4 L1014.4 237.0 L1016.9 239.4 L1020.7 240.2 L1022.3 241.3 L1025.7 240.9 L1028.2 241.4 L1032.2 240.8 L1034.5 240.5 L1038.2 240.3 L1040.8 240.5 L1043.8 239.5 L1046.5 240.2 L1049.4 239.2 L1052.4 240.0 L1056.4 239.7 L1058.4 239.4 L1062.0 237.5 L1064.4 238.2 L1067.6 235.6 L1071.4 236.8 L1074.4 237.1 L1078.4 238.4 L1081.1 238.0 L1085.5 239.9 L1088.9 239.4 L1090.0 235.7 L1089.5 232.6 L1092.0 229.7 L1093.7 230.8 L1097.9 231.2 L1100.3 232.6 L1102.6 233.7 L1105.5 235.1 L1108.1 236.4 L1111.2 238.3 L1115.2 238.1 L1118.5 239.7 L1120.9 241.6 L1123.6 242.3 L1126.8 243.2 L1130.6 244.4 L1131.6 241.2 L1131.7 238.1 L1128.4 235.7 L1126.4 234.5 L1124.7 233.8 L1120.3 231.1 L1117.7 229.8 L1115.4 228.2 L1113.1 224.8 L1109.3 223.2 L1108.3 221.2 L1104.8 219.8 L1101.7 219.0 L1098.6 217.1 L1096.6 215.9 L1093.5 214.1 L1090.5 211.7 L1088.0 210.6 L1085.7 207.4 L1081.4 206.6 L1079.9 205.1 L1076.0 204.4 L1073.1 201.1 L1069.8 199.5 L1068.3 198.1 L1065.4 198.1 L1063.1 196.5 L1059.1 194.6 L1057.1 193.3 L1053.2 191.9 L1050.0 189.4 L1048.9 188.2 L1044.5 188.1 L1042.0 185.7 L1038.2 185.4 L1035.9 185.9 L1032.8 184.9 L1031.1 183.2 L1028.4 183.1 L1024.5 181.3 L1021.5 181.8 L1018.8 179.5 L1015.5 179.3 L1012.2 178.7 L1009.0 178.4 L1006.4 176.1 L1004.2 175.6 L1001.8 175.1 L998.1 174.9 L994.5 173.9 L992.4 172.4 L990.1 170.7 L986.9 170.0 L983.9 169.2 L979.3 169.0 L978.1 167.6 L974.2 167.5 L970.8 166.4 L967.3 165.4 L965.4 164.4 L960.9 163.1 L958.5 163.1 L955.5 163.0 L950.4 162.6 Z" fill="none" stroke="#ff7d00" stroke-width="14"/><path d="M941 144 Q990 157 1005.5 162.5 Q1021 168 1040.5 177.5 Q1060 187 1082.5 201.5 Q1105 216 1127.5 234.0 Q1150 252 1165.0 269.0 Q1180 286 1196.0 306.5 L1212 327" stroke="#ff7d00" stroke-width="10" fill="none" transform="translate(-2 -3)"/></g><g filter="url(#b6)" opacity="0.75"><path d="M1283 600 Q1268 660 1254.0 695.0 Q1240 730 1220.0 765.0 Q1200 800 1175.0 829.0 Q1150 858 1120.0 881.5 Q1090 905 1060.0 920.0 Q1030 935 995.0 945.0 Q960 955 920.0 960.5 Q880 966 855.0 967.0 L830 968" stroke="#ff7d00" stroke-width="6" fill="none" transform="translate(5 4)" opacity="0.5"/><ellipse cx="600" cy="828" rx="9" ry="6" transform="rotate(50 600 828)" fill="#ff7d00" opacity="0.8"/><ellipse cx="618" cy="848" rx="12" ry="8" transform="rotate(45 618 848)" fill="#ff7d00" opacity="0.9"/><ellipse cx="645" cy="868" rx="18" ry="8" transform="rotate(35 645 868)" fill="#ff7d00" opacity="1"/><ellipse cx="672" cy="888" rx="14" ry="7" transform="rotate(30 672 888)" fill="#ff7d00" opacity="0.9"/><ellipse cx="722" cy="910" rx="16" ry="6" transform="rotate(20 722 910)" fill="#ff7d00" opacity="0.9"/><ellipse cx="760" cy="925" rx="10" ry="5" transform="rotate(15 760 925)" fill="#ff7d00" opacity="0.7"/><ellipse cx="830" cy="940" rx="14" ry="6" transform="rotate(10 830 940)" fill="#ff7d00" opacity="0.9"/><ellipse cx="858" cy="944" rx="14" ry="6" transform="rotate(5 858 944)" fill="#ff7d00" opacity="1"/><ellipse cx="900" cy="958" rx="16" ry="6" transform="rotate(0 900 958)" fill="#ff7d00" opacity="0.9"/><ellipse cx="946" cy="956" rx="10" ry="5" transform="rotate(0 946 956)" fill="#ff7d00" opacity="0.7"/><ellipse cx="812" cy="958" rx="10" ry="5" transform="rotate(0 812 958)" fill="#ff7d00" opacity="0.6"/><ellipse cx="449" cy="553" rx="4" ry="9" transform="rotate(0 449 553)" fill="#ff7d00" opacity="0.7"/><ellipse cx="1222" cy="775" rx="10" ry="22" transform="rotate(20 1222 775)" fill="#ff7d00" opacity="0.7"/><ellipse cx="1150" cy="842" rx="22" ry="10" transform="rotate(-40 1150 842)" fill="#ff7d00" opacity="0.6"/><ellipse cx="1065" cy="900" rx="20" ry="8" transform="rotate(-25 1065 900)" fill="#ff7d00" opacity="0.5"/><ellipse cx="1265" cy="690" rx="6" ry="18" transform="rotate(15 1265 690)" fill="#ff7d00" opacity="0.5"/></g><g filter="url(#b6)" opacity="0.75"><path d="M840.8 415.2 L845.5 413.9 L847.4 413.3 L849.5 412.0 L854.1 411.9 L855.5 409.4 L858.7 410.0 L864.0 407.0 L868.2 409.5 L870.5 407.9 L872.2 405.4 L876.8 405.1 L879.0 405.2 L881.7 406.0 L886.3 407.3 L889.8 406.8 L893.0 407.0 L896.1 405.9 L901.1 408.3 L903.8 407.5 L905.4 406.1 L908.3 407.4 L912.9 410.2 L916.1 411.9 L919.5 415.1 L919.0 414.7 L924.5 417.1 L927.3 418.5 L927.0 420.8 L931.9 421.3 L933.0 422.3 L939.1 424.5 L939.6 423.8 L942.9 424.0 L948.4 425.3 L950.9 427.0 L953.0 428.7 L954.3 431.5 L955.8 433.7 L957.6 436.3 L961.5 441.0 L962.6 441.3 L965.5 439.9 L970.8 440.8 L971.6 442.0 L975.2 439.8 L980.2 440.1 L981.9 439.4 L984.5 441.2 L988.2 441.3 L991.8 442.6 L997.0 444.4 L999.0 447.4 L1001.0 446.9 L1004.1 452.3 L1002.7 453.5 L1005.0 459.2 L1004.0 462.4 L1007.0 464.2 L1006.2 465.6 L1005.8 471.2 L1007.2 473.3 L1008.0 476.6 L1009.8 477.8 L1009.2 482.1 L1009.6 483.5 L1011.9 488.4 L1012.9 489.5 L1014.6 492.1 L1012.5 495.3 L1010.7 495.1 L1006.8 496.7 L1005.0 496.5 L1001.2 499.4 L1000.1 499.2 L996.1 499.5 L991.2 498.3 L987.7 501.7 L986.8 502.4 L981.6 501.9 L979.9 502.7 L982.7 504.5 L985.1 503.9 L990.5 505.9 L993.8 506.2 L997.2 507.7 L999.0 507.8 L1004.0 509.3 L1005.7 509.9 L1009.6 511.2 L1011.2 512.6 L1013.5 515.3 L1014.3 517.4 L1019.6 520.2 L1020.7 521.3 L1022.8 524.6 L1023.8 528.1 L1024.7 530.5 L1026.5 532.7 L1029.9 534.1 L1030.9 538.2 L1030.9 542.7 L1030.0 542.9 L1030.4 548.2 L1030.3 549.8 L1032.8 554.5 L1031.6 558.4 L1031.4 560.9 L1031.3 563.3 L1033.5 568.0 L1034.0 569.5 L1033.3 572.4 L1031.2 576.2 L1032.8 580.6 L1031.8 584.2 L1029.8 584.9 L1029.7 588.5 L1028.3 592.2 L1029.0 595.7 L1027.4 600.1 L1027.9 601.4 L1023.4 602.7 L1024.4 605.3 L1022.3 609.6 L1019.4 612.9 L1016.9 613.4 L1016.7 615.7 L1016.3 619.0 L1012.5 621.0 L1012.4 624.8 L1011.0 628.1 L1010.1 631.7 L1008.2 631.9 L1006.1 634.5 L1003.2 638.1 L1004.0 639.8 L1001.1 643.0 L1001.0 646.2 L999.3 649.5 L997.1 652.3 L997.3 652.7 L995.0 656.8 L990.1 658.0 L989.3 661.6 L986.2 662.6 L985.4 665.4 L983.2 666.4 L979.9 667.7 L977.8 671.7 L975.2 673.5 L971.4 676.2 L971.5 678.5 L966.9 678.7 L963.0 679.9 L961.5 678.9 L955.9 680.0 L954.2 681.9 L950.8 680.3 L948.6 681.2 L945.4 682.4 L940.7 685.1 L936.8 683.9 L934.8 685.5 L932.6 685.1 L929.7 684.2 L926.4 682.7 L920.9 683.8 L917.8 684.2 L915.7 683.3 L913.1 683.2 L908.1 681.8 L906.5 682.6 L901.2 681.6 L900.4 679.6 L895.8 677.8 L892.4 677.9 L889.3 675.5 L890.5 673.7 L888.7 671.3 L889.2 667.0 L889.6 662.3 L889.1 660.1 L890.5 658.4 L890.3 654.3 L891.8 651.6 L896.0 650.5 L896.9 646.0 L898.0 644.4 L898.2 640.6 L895.6 638.1 L891.5 636.6 L890.9 634.8 L887.7 633.5 L884.7 631.7 L886.0 627.9 L887.5 623.7 L889.6 621.3 L890.3 618.1 L891.9 614.1 L892.1 612.4 L891.3 609.4 L889.8 607.0 L887.6 603.1 L885.1 602.3 L883.5 598.1 L879.4 597.4 L875.8 596.1 L874.7 591.8 L869.4 592.2 L866.2 588.7 L864.8 588.0 L861.4 585.3 L856.9 585.3 L852.5 582.0 L853.1 587.6 L852.5 588.3 L849.5 593.6 L848.0 596.6 L844.2 596.3 L841.1 597.9 L839.7 601.0 L836.9 601.5 L832.8 603.4 L832.1 607.6 L832.4 607.9 L829.6 613.8 L830.9 616.3 L830.4 618.6 L831.0 621.6 L831.3 623.4 L828.6 628.1 L824.0 628.9 L822.8 630.7 L817.7 631.3 L815.4 632.1 L813.3 636.0 L809.5 635.0 L806.1 632.4 L802.8 631.5 L800.9 631.3 L795.4 630.5 L793.8 628.9 L791.7 625.4 L789.7 624.6 L786.8 622.0 L784.7 618.6 L782.3 615.2 L778.8 614.2 L775.4 611.5 L776.0 609.5 L773.3 607.6 L773.2 602.8 L771.7 600.7 L769.9 597.2 L769.9 595.1 L767.5 592.6 L767.0 587.4 L764.4 586.8 L762.7 582.5 L761.6 578.7 L762.1 575.2 L761.2 574.6 L761.7 570.2 L762.5 567.2 L759.2 568.0 L755.2 566.8 L751.1 569.6 L745.9 570.8 L742.9 569.9 L740.9 566.7 L740.4 561.9 L739.4 559.7 L739.1 557.4 L739.6 553.5 L741.5 551.5 L741.3 549.1 L742.3 543.9 L743.2 541.1 L743.9 540.5 L745.6 538.1 L747.8 532.5 L749.6 532.4 L747.1 529.2 L748.6 524.6 L750.8 520.8 L749.8 519.8 L750.9 515.2 L752.1 513.2 L751.3 507.8 L748.7 507.0 L744.6 503.9 L742.9 502.2 L740.0 502.1 L737.3 499.0 L735.0 497.6 L732.9 496.1 L731.8 494.2 L729.2 488.7 L725.5 487.5 L725.9 483.4 L727.7 482.3 L731.9 483.2 L734.8 483.4 L738.5 482.0 L740.0 484.5 L745.3 484.2 L745.9 482.2 L750.1 484.0 L754.6 483.5 L757.7 484.0 L759.7 486.6 L763.6 489.0 L765.4 491.1 L767.3 493.3 L771.4 497.5 L771.6 497.8 L774.5 502.6 L774.9 504.6 L774.3 508.0 L776.0 511.6 L776.0 516.8 L775.4 518.7 L777.3 523.1 L776.8 524.6 L777.2 529.5 L778.7 530.2 L781.7 534.7 L783.6 537.4 L786.6 535.2 L787.5 535.7 L789.8 533.1 L794.6 532.9 L795.9 529.7 L798.8 530.2 L801.6 526.8 L806.0 527.8 L809.9 528.6 L813.2 526.5 L816.1 525.7 L817.8 525.5 L823.1 526.7 L824.2 524.6 L824.8 521.6 L825.1 518.6 L824.7 516.2 L826.9 513.1 L827.2 510.2 L825.3 507.8 L827.8 503.3 L825.3 501.1 L827.2 498.2 L828.8 495.5 L828.5 490.6 L827.9 489.9 L826.7 484.7 L832.1 486.3 L833.3 484.4 L836.9 483.8 L835.3 481.7 L830.8 482.8 L828.6 482.3 L825.0 480.5 L823.7 481.1 L819.0 480.1 L820.1 477.4 L821.2 473.1 L821.3 470.7 L821.8 467.8 L822.2 464.8 L823.0 460.7 L822.1 457.7 L824.3 454.0 L824.3 450.4 L826.6 450.4 L826.7 445.1 L827.5 443.2 L829.0 442.2 L829.6 437.4 L831.0 435.6 L834.4 431.2 L833.3 429.2 L836.3 427.8 L835.8 422.4 L837.5 419.8 L838.9 418.6 Z" stroke="#ff7d00" stroke-width="11" fill="none"/><path d="M627.9 213.9 L626.3 215.2 L622.6 218.2 L621.2 221.8 L620.1 223.8 L617.6 226.5 L614.5 228.4 L612.5 232.1 L612.8 235.4 L613.5 238.6 L614.7 241.5 L616.5 244.1 L615.2 249.8 L615.1 250.7 L615.1 255.7 L611.8 257.4 L610.7 260.0 L610.7 262.6 L608.9 264.8 L605.7 269.1 L604.3 270.6 L602.8 273.1 L600.3 274.5 L599.1 279.2 L598.1 281.4 L595.0 283.6 L594.1 287.3 L591.1 289.2 L590.0 292.8 L589.4 295.7 L585.9 299.4 L585.2 301.6 L585.8 304.4 L587.3 308.2 L587.7 310.6 L589.0 313.9 L588.1 316.4 L588.3 320.8 L587.0 323.9 L586.8 327.0 L586.8 332.1 L587.4 336.0 L587.1 339.9 L588.1 342.1 L585.7 345.2 L580.6 345.1 L579.1 346.8 L574.5 347.4 L571.1 350.4 L570.4 352.7 L566.3 351.9 L563.0 355.2 L566.0 357.8 L566.3 360.4 L568.6 363.6 L569.9 367.3 L573.1 368.4 L575.4 369.4 L579.0 368.8 L583.3 367.5 L587.4 365.6 L587.1 368.6 L588.8 372.6 L588.2 376.0 L589.6 377.4 L588.4 382.1 L587.4 384.2 L587.0 387.9 L585.4 389.6 L583.7 393.7 L583.0 395.8 L580.6 398.3 L582.5 401.7 L581.8 405.0 L584.9 408.1 L585.9 411.3 L586.0 414.0 L586.6 415.2 L588.2 418.7 L591.3 422.5 L592.0 425.3 L592.7 428.1 L595.7 430.7 L596.3 433.6 L598.2 437.2 L600.7 435.1 L604.0 435.8 L608.1 434.9 L611.4 433.5 L610.1 436.7 L612.0 438.9 L613.3 442.2 L613.1 445.2 L615.7 447.3 L615.1 450.9 L615.6 454.2 L618.6 456.1 L622.2 456.3 L624.3 456.5 L628.3 458.1 L630.1 455.7 L634.4 455.2 L635.6 453.0 L639.6 451.2 L642.2 450.4 L645.6 448.7 L647.7 446.7 L650.6 445.2 L650.4 448.9 L650.3 452.1 L650.5 456.7 L650.9 459.2 L650.6 462.7 L649.2 466.4 L646.2 470.0 L645.8 471.6 L642.2 475.3 L642.3 478.1 L640.5 480.6 L637.1 481.0 L633.7 482.0 L630.7 482.8 L628.8 483.0 L624.4 483.9 L623.3 485.3 L618.2 486.8 L617.2 487.5 L612.7 486.6 L609.3 484.5 L607.4 485.5 L602.5 485.0 L598.8 483.0 L595.5 482.0 L592.6 482.6 L589.7 480.7 L586.1 480.3 L585.5 478.8 L581.4 476.7 L580.1 473.8 L577.8 472.1 L576.2 469.4 L573.5 467.1 L571.2 464.6 L568.4 462.6 L566.8 459.8 L564.9 458.4 L562.4 457.1 L560.2 455.2 L556.6 452.7 L554.6 451.7 L552.8 448.4 L548.5 446.5 L546.2 444.5 L543.6 443.2 L541.5 442.4 L540.3 441.2 L538.8 438.8 L536.3 435.3 L532.2 435.6 L530.4 432.0 L528.7 430.7 L526.7 427.8 L524.5 424.6 L523.9 424.1 L523.4 421.0 L521.8 417.4 L518.8 416.1 L518.1 412.8 L515.2 409.1 L514.8 407.7 L514.2 405.1 L513.0 400.5 L514.3 398.3 L513.4 392.7 L513.7 389.9 L514.5 386.2 L516.1 384.2 L516.9 381.1 L520.4 378.6 L520.2 374.9 L521.3 372.7 L524.0 368.5 L525.3 366.5 L527.3 363.7 L528.7 361.4 L532.3 359.0 L533.0 357.0 L534.2 354.6 L536.2 352.1 L538.6 349.9 L541.9 347.5 L542.4 346.1 L544.7 343.2 L547.4 339.6 L549.5 337.2 L550.6 336.4 L554.5 333.5 L554.6 330.5 L557.0 328.9 L559.8 328.3 L563.7 330.4 L566.3 331.0" stroke="#ff7d00" stroke-width="10" fill="none"/><path d="M947.3 161.4 L950.4 164.0 L951.7 165.0 L953.9 167.3 L957.3 169.3 L959.2 171.8 L961.0 174.5 L962.7 178.2 L961.6 181.0 L962.4 185.6 L964.3 188.9 L966.6 191.6 L969.1 194.6 L970.0 197.5 L972.8 200.2 L973.3 202.6 L973.3 205.6 L973.6 208.0 L975.0 212.4 L975.7 215.2 L975.2 218.4 L976.6 221.3 L979.5 223.3 L981.3 227.0 L984.3 227.9 L988.0 228.7 L989.9 229.9 L993.1 230.4 L995.9 231.6 L998.6 233.1 L1003.3 233.6 L1005.8 235.6 L1007.3 235.0 L1011.8 237.4 L1014.4 237.0 L1016.9 239.4 L1020.7 240.2 L1022.3 241.3 L1025.7 240.9 L1028.2 241.4 L1032.2 240.8 L1034.5 240.5 L1038.2 240.3 L1040.8 240.5 L1043.8 239.5 L1046.5 240.2 L1049.4 239.2 L1052.4 240.0 L1056.4 239.7 L1058.4 239.4 L1062.0 237.5 L1064.4 238.2 L1067.6 235.6 L1071.4 236.8 L1074.4 237.1 L1078.4 238.4 L1081.1 238.0 L1085.5 239.9 L1088.9 239.4 L1090.0 235.7 L1089.5 232.6 L1092.0 229.7 L1093.7 230.8 L1097.9 231.2 L1100.3 232.6 L1102.6 233.7 L1105.5 235.1 L1108.1 236.4 L1111.2 238.3 L1115.2 238.1 L1118.5 239.7 L1120.9 241.6 L1123.6 242.3 L1126.8 243.2 L1130.6 244.4 L1131.6 241.2 L1132.1 238.3" stroke="#ff7d00" stroke-width="9" fill="none"/><path d="M1130.4 270.3 L1134.4 269.1 L1136.9 266.3 L1140.7 265.3 L1143.2 263.7 L1146.1 265.2 L1148.4 265.7 L1152.4 267.3 L1154.1 269.3 L1157.4 269.6 L1160.0 272.4 L1162.2 274.4 L1164.9 275.8 L1167.6 277.6 L1171.8 279.8 L1174.5 281.8 L1176.7 284.5 L1177.2 286.7 L1177.4 290.9 L1177.2 293.5 L1175.1 293.9 L1170.8 293.6 L1167.7 293.9 L1164.9 292.5 L1162.3 292.3 L1158.2 292.0 L1155.8 291.9 L1152.2 291.6 L1149.0 292.3 L1145.9 291.7 L1143.3 289.6 L1141.0 287.0 L1138.4 285.1 L1136.5 284.2 L1132.8 280.8 L1131.3 279.4 L1130.2 276.5 L1131.7 273.0 Z" stroke="#ff7d00" stroke-width="8" fill="none"/><path d="M1108.4 877.3 L1105.7 876.8 L1103.0 877.7 L1100.0 878.0 L1096.5 877.9 L1094.4 878.4 L1091.3 879.7 L1088.7 880.4 L1084.5 879.3 L1082.5 880.4 L1078.4 880.9 L1076.7 881.6 L1072.4 880.9 L1069.0 882.6 L1066.4 882.5 L1064.1 882.6 L1061.1 883.5 L1058.2 882.8 L1054.2 883.6 L1052.8 883.3 L1049.4 884.7 L1045.3 884.2 L1043.4 885.1 L1039.8 885.6 L1036.2 886.4 L1035.8 883.2 L1034.0 881.0 L1033.6 877.6 L1030.8 874.0 L1029.6 871.0 L1029.3 869.1 L1028.8 866.7 L1030.0 863.4 L1030.7 860.1 L1030.5 857.6 L1030.1 853.9 L1032.0 850.4 L1032.2 846.7 L1031.7 843.8 L1032.1 841.6 L1031.9 837.8 L1033.7 834.6 L1033.9 833.0 L1036.3 828.0 L1037.9 825.3 L1038.7 823.5 L1041.3 819.9 L1038.6 818.1 L1036.1 815.2 L1034.3 814.5 L1031.2 811.8 L1029.2 809.9 L1030.8 808.5 L1033.8 804.8 L1034.3 803.8 L1037.9 801.5 L1039.3 801.4 L1043.2 804.4 L1045.8 805.2 L1048.9 806.0 L1052.2 806.9 L1053.8 809.3 L1058.4 810.6 L1060.3 808.7 L1064.2 807.4 L1066.7 807.6 L1070.9 807.0 L1072.8 805.5 L1076.0 805.3 L1080.0 803.0 L1082.9 805.4 L1084.1 805.1 L1087.5 805.8 L1090.3 806.5 L1094.4 807.9 L1094.7 805.9 L1097.7 802.0 L1099.2 800.3 L1100.1 796.2 L1103.4 797.2 L1106.8 796.8 L1108.3 796.2 L1111.2 794.4 L1115.1 794.4 L1118.1 794.4 L1121.5 793.7 L1123.5 790.7 L1124.4 789.0 L1128.4 785.9 L1130.7 783.4 L1131.6 782.7 L1134.4 780.2 L1135.1 776.8 L1136.3 774.9 L1137.5 771.1 L1140.4 769.0 L1140.5 766.3 L1143.8 763.7 L1144.0 760.3 L1146.0 757.8 L1147.0 754.7 L1149.2 753.4 L1150.5 750.4 L1151.6 748.4 L1153.1 745.5 L1154.0 742.3 L1156.9 739.1 L1156.8 735.3 L1159.5 734.0 L1159.2 729.8 L1161.6 727.7 L1161.1 724.1 L1162.8 720.2 L1164.8 718.0 L1165.1 715.5 L1166.5 711.5 L1167.6 708.4 L1171.1 706.1 L1173.7 704.2 L1175.3 702.0 L1177.3 697.7 L1180.3 695.1 L1183.9 697.1 L1186.0 695.5 L1190.2 696.1 L1193.3 696.7 L1196.2 697.7 L1197.8 696.8 L1201.5 696.7 L1205.6 696.9 L1207.3 697.0 L1210.2 698.4 L1213.4 698.2 L1215.3 701.6 L1218.0 704.0" stroke="#ff7d00" stroke-width="9" fill="none"/><path d="M922.9 831.0 L926.6 829.6 L930.2 828.5 L933.8 827.1 L934.5 830.8 L935.8 834.6 L934.9 837.6 L933.6 841.1 L931.8 843.9 L931.0 846.5 L928.9 849.1 L928.1 851.8 L925.1 853.6 L922.6 855.9 L920.0 857.3 L917.7 859.6 L914.8 860.5 L912.9 863.7 L910.1 865.8 L906.9 867.9 L904.4 870.6 L901.6 873.2 L898.2 876.5 L895.3 877.0 L892.4 877.0 L889.3 877.0 L886.1 877.0 L882.5 876.6 L879.7 876.9 L876.9 877.0 L879.8 879.2 L882.2 881.7 L885.5 884.3 L888.0 885.3 L890.4 885.6 L893.1 886.6 L895.8 888.1 L899.6 888.6 L902.2 890.4 L905.3 889.7 L908.1 889.8 L910.7 889.5 L909.4 887.4 L907.3 883.6 L905.9 880.5 L908.6 878.8 L911.2 875.7 L913.3 873.5 L916.6 871.8 L919.0 868.6 L920.6 866.5 L922.3 863.8 L924.5 862.1 L926.2 859.7 L928.7 856.8 L929.9 854.1 L932.2 852.3 L932.8 848.3 L932.7 844.7 L933.0 841.6 L933.2 838.0 L934.5 834.8 L930.3 833.7 L926.6 832.4 Z" stroke="#ff7d00" stroke-width="9" fill="none"/><path d="M565.6 331.4 L565.0 333.6 L562.7 336.8 L562.3 338.8 L560.2 340.9 L557.7 343.7 L557.3 345.7 L556.2 348.7 L553.5 350.9 L553.5 354.9 L551.8 357.2 L547.2 358.2 L545.2 359.2 L543.2 361.2 L538.7 363.6 L535.7 365.4 L533.5 366.1 L530.4 367.5 L527.2 368.1 L525.6 370.0 L522.6 371.4 L522.1 375.8 L520.9 378.5 L519.7 381.5 L518.0 384.0 L518.6 386.4 L517.9 390.8 L516.1 392.7 L515.4 395.8 L515.6 398.8 L512.9 401.2 L513.4 406.0 L510.2 406.3 L507.4 408.2 L503.9 409.2 L501.8 410.6 L498.2 411.0 L495.7 413.9 L495.7 416.2 L495.6 418.2 L497.8 421.1 L501.9 421.7 L504.4 423.9 L507.5 425.9 L509.1 427.5 L512.9 428.2 L515.4 429.5 L517.1 430.5 L520.8 431.8 L521.8 434.6 L525.9 435.5 L528.7 436.1 L530.2 438.1 L533.3 439.4 L535.3 441.3 L539.7 444.1 L542.1 444.7 L543.9 447.2 L547.1 448.3 L548.9 448.8 L553.2 451.5 L556.0 452.7 L557.9 454.2 L561.6 454.7 L563.8 455.8 L567.2 456.4 L569.9 459.4 L571.4 459.8 L575.5 461.5 L578.3 461.4 L580.8 463.9 L585.0 463.0 L586.6 463.7 L589.7 465.2 L593.2 466.8 L597.4 466.1 L600.4 467.3 L603.5 467.9 L606.1 468.6 L609.8 470.4 L613.1 469.9 L616.4 472.3 L619.5 473.0 L621.0 473.1 L624.1 474.5 L627.4 475.2 L630.5 476.0 L633.6 475.5 L636.8 476.8 L640.0 478.0" stroke="#ff7d00" stroke-width="8" fill="none"/><path d="M800.4 489.5 L803.9 489.2 L806.6 487.5 L809.7 487.3 L811.9 489.6 L814.9 491.2 L817.0 493.9 L816.4 497.6 L815.5 499.4 L816.0 502.9 L814.6 505.8 L812.8 509.0 L810.7 510.7 L808.8 508.4 L806.9 506.1 L803.8 502.6 L803.7 500.3 L801.9 496.8 L802.2 493.4 Z" stroke="#ff7d00" stroke-width="6" fill="none"/><path d="M724.3 496.5 L727.7 497.2 L731.0 496.6 L733.4 495.8 L737.5 495.4 L740.7 495.6 L742.8 495.5 L746.4 496.9 L748.2 499.1 L752.5 500.5 L753.0 502.5 L751.8 505.4 L753.5 508.4 L752.5 511.2 L750.3 514.8 L748.8 518.5 L747.4 516.9 L746.0 514.0 L745.6 510.9 L744.1 508.4 L741.1 505.9 L737.7 504.3 L734.8 503.8 L730.9 503.3 L727.0 505.5 L725.9 501.3 Z" stroke="#ff7d00" stroke-width="7" fill="none"/></g><g filter="url(#b2)" opacity="0.6"><path d="M840.8 415.2 L845.5 413.9 L847.4 413.3 L849.5 412.0 L854.1 411.9 L855.5 409.4 L858.7 410.0 L864.0 407.0 L868.2 409.5 L870.5 407.9 L872.2 405.4 L876.8 405.1 L879.0 405.2 L881.7 406.0 L886.3 407.3 L889.8 406.8 L893.0 407.0 L896.1 405.9 L901.1 408.3 L903.8 407.5 L905.4 406.1 L908.3 407.4 L912.9 410.2 L916.1 411.9 L919.5 415.1 L919.0 414.7 L924.5 417.1 L927.3 418.5 L927.0 420.8 L931.9 421.3 L933.0 422.3 L939.1 424.5 L939.6 423.8 L942.9 424.0 L948.4 425.3 L950.9 427.0 L953.0 428.7 L954.3 431.5 L955.8 433.7 L957.6 436.3 L961.5 441.0 L962.6 441.3 L965.5 439.9 L970.8 440.8 L971.6 442.0 L975.2 439.8 L980.2 440.1 L981.9 439.4 L984.5 441.2 L988.2 441.3 L991.8 442.6 L997.0 444.4 L999.0 447.4 L1001.0 446.9 L1004.1 452.3 L1002.7 453.5 L1005.0 459.2 L1004.0 462.4 L1007.0 464.2 L1006.2 465.6 L1005.8 471.2 L1007.2 473.3 L1008.0 476.6 L1009.8 477.8 L1009.2 482.1 L1009.6 483.5 L1011.9 488.4 L1012.9 489.5 L1014.6 492.1 L1012.5 495.3 L1010.7 495.1 L1006.8 496.7 L1005.0 496.5 L1001.2 499.4 L1000.1 499.2 L996.1 499.5 L991.2 498.3 L987.7 501.7 L986.8 502.4 L981.6 501.9 L979.9 502.7 L982.7 504.5 L985.1 503.9 L990.5 505.9 L993.8 506.2 L997.2 507.7 L999.0 507.8 L1004.0 509.3 L1005.7 509.9 L1009.6 511.2 L1011.2 512.6 L1013.5 515.3 L1014.3 517.4 L1019.6 520.2 L1020.7 521.3 L1022.8 524.6 L1023.8 528.1 L1024.7 530.5 L1026.5 532.7 L1029.9 534.1 L1030.9 538.2 L1030.9 542.7 L1030.0 542.9 L1030.4 548.2 L1030.3 549.8 L1032.8 554.5 L1031.6 558.4 L1031.4 560.9 L1031.3 563.3 L1033.5 568.0 L1034.0 569.5 L1033.3 572.4 L1031.2 576.2 L1032.8 580.6 L1031.8 584.2 L1029.8 584.9 L1029.7 588.5 L1028.3 592.2 L1029.0 595.7 L1027.4 600.1 L1027.9 601.4 L1023.4 602.7 L1024.4 605.3 L1022.3 609.6 L1019.4 612.9 L1016.9 613.4 L1016.7 615.7 L1016.3 619.0 L1012.5 621.0 L1012.4 624.8 L1011.0 628.1 L1010.1 631.7 L1008.2 631.9 L1006.1 634.5 L1003.2 638.1 L1004.0 639.8 L1001.1 643.0 L1001.0 646.2 L999.3 649.5 L997.1 652.3 L997.3 652.7 L995.0 656.8 L990.1 658.0 L989.3 661.6 L986.2 662.6 L985.4 665.4 L983.2 666.4 L979.9 667.7 L977.8 671.7 L975.2 673.5 L971.4 676.2 L971.5 678.5 L966.9 678.7 L963.0 679.9 L961.5 678.9 L955.9 680.0 L954.2 681.9 L950.8 680.3 L948.6 681.2 L945.4 682.4 L940.7 685.1 L936.8 683.9 L934.8 685.5 L932.6 685.1 L929.7 684.2 L926.4 682.7 L920.9 683.8 L917.8 684.2 L915.7 683.3 L913.1 683.2 L908.1 681.8 L906.5 682.6 L901.2 681.6 L900.4 679.6 L895.8 677.8 L892.4 677.9 L889.3 675.5 L890.5 673.7 L888.7 671.3 L889.2 667.0 L889.6 662.3 L889.1 660.1 L890.5 658.4 L890.3 654.3 L891.8 651.6 L896.0 650.5 L896.9 646.0 L898.0 644.4 L898.2 640.6 L895.6 638.1 L891.5 636.6 L890.9 634.8 L887.7 633.5 L884.7 631.7 L886.0 627.9 L887.5 623.7 L889.6 621.3 L890.3 618.1 L891.9 614.1 L892.1 612.4 L891.3 609.4 L889.8 607.0 L887.6 603.1 L885.1 602.3 L883.5 598.1 L879.4 597.4 L875.8 596.1 L874.7 591.8 L869.4 592.2 L866.2 588.7 L864.8 588.0 L861.4 585.3 L856.9 585.3 L852.5 582.0 L853.1 587.6 L852.5 588.3 L849.5 593.6 L848.0 596.6 L844.2 596.3 L841.1 597.9 L839.7 601.0 L836.9 601.5 L832.8 603.4 L832.1 607.6 L832.4 607.9 L829.6 613.8 L830.9 616.3 L830.4 618.6 L831.0 621.6 L831.3 623.4 L828.6 628.1 L824.0 628.9 L822.8 630.7 L817.7 631.3 L815.4 632.1 L813.3 636.0 L809.5 635.0 L806.1 632.4 L802.8 631.5 L800.9 631.3 L795.4 630.5 L793.8 628.9 L791.7 625.4 L789.7 624.6 L786.8 622.0 L784.7 618.6 L782.3 615.2 L778.8 614.2 L775.4 611.5 L776.0 609.5 L773.3 607.6 L773.2 602.8 L771.7 600.7 L769.9 597.2 L769.9 595.1 L767.5 592.6 L767.0 587.4 L764.4 586.8 L762.7 582.5 L761.6 578.7 L762.1 575.2 L761.2 574.6 L761.7 570.2 L762.5 567.2 L759.2 568.0 L755.2 566.8 L751.1 569.6 L745.9 570.8 L742.9 569.9 L740.9 566.7 L740.4 561.9 L739.4 559.7 L739.1 557.4 L739.6 553.5 L741.5 551.5 L741.3 549.1 L742.3 543.9 L743.2 541.1 L743.9 540.5 L745.6 538.1 L747.8 532.5 L749.6 532.4 L747.1 529.2 L748.6 524.6 L750.8 520.8 L749.8 519.8 L750.9 515.2 L752.1 513.2 L751.3 507.8 L748.7 507.0 L744.6 503.9 L742.9 502.2 L740.0 502.1 L737.3 499.0 L735.0 497.6 L732.9 496.1 L731.8 494.2 L729.2 488.7 L725.5 487.5 L725.9 483.4 L727.7 482.3 L731.9 483.2 L734.8 483.4 L738.5 482.0 L740.0 484.5 L745.3 484.2 L745.9 482.2 L750.1 484.0 L754.6 483.5 L757.7 484.0 L759.7 486.6 L763.6 489.0 L765.4 491.1 L767.3 493.3 L771.4 497.5 L771.6 497.8 L774.5 502.6 L774.9 504.6 L774.3 508.0 L776.0 511.6 L776.0 516.8 L775.4 518.7 L777.3 523.1 L776.8 524.6 L777.2 529.5 L778.7 530.2 L781.7 534.7 L783.6 537.4 L786.6 535.2 L787.5 535.7 L789.8 533.1 L794.6 532.9 L795.9 529.7 L798.8 530.2 L801.6 526.8 L806.0 527.8 L809.9 528.6 L813.2 526.5 L816.1 525.7 L817.8 525.5 L823.1 526.7 L824.2 524.6 L824.8 521.6 L825.1 518.6 L824.7 516.2 L826.9 513.1 L827.2 510.2 L825.3 507.8 L827.8 503.3 L825.3 501.1 L827.2 498.2 L828.8 495.5 L828.5 490.6 L827.9 489.9 L826.7 484.7 L832.1 486.3 L833.3 484.4 L836.9 483.8 L835.3 481.7 L830.8 482.8 L828.6 482.3 L825.0 480.5 L823.7 481.1 L819.0 480.1 L820.1 477.4 L821.2 473.1 L821.3 470.7 L821.8 467.8 L822.2 464.8 L823.0 460.7 L822.1 457.7 L824.3 454.0 L824.3 450.4 L826.6 450.4 L826.7 445.1 L827.5 443.2 L829.0 442.2 L829.6 437.4 L831.0 435.6 L834.4 431.2 L833.3 429.2 L836.3 427.8 L835.8 422.4 L837.5 419.8 L838.9 418.6 Z" stroke="#ff7d00" stroke-width="3" fill="none"/><path d="M627.9 213.9 L626.3 215.2 L622.6 218.2 L621.2 221.8 L620.1 223.8 L617.6 226.5 L614.5 228.4 L612.5 232.1 L612.8 235.4 L613.5 238.6 L614.7 241.5 L616.5 244.1 L615.2 249.8 L615.1 250.7 L615.1 255.7 L611.8 257.4 L610.7 260.0 L610.7 262.6 L608.9 264.8 L605.7 269.1 L604.3 270.6 L602.8 273.1 L600.3 274.5 L599.1 279.2 L598.1 281.4 L595.0 283.6 L594.1 287.3 L591.1 289.2 L590.0 292.8 L589.4 295.7 L585.9 299.4 L585.2 301.6 L585.8 304.4 L587.3 308.2 L587.7 310.6 L589.0 313.9 L588.1 316.4 L588.3 320.8 L587.0 323.9 L586.8 327.0 L586.8 332.1 L587.4 336.0 L587.1 339.9 L588.1 342.1 L585.7 345.2 L580.6 345.1 L579.1 346.8 L574.5 347.4 L571.1 350.4 L570.4 352.7 L566.3 351.9 L563.0 355.2 L566.0 357.8 L566.3 360.4 L568.6 363.6 L569.9 367.3 L573.1 368.4 L575.4 369.4 L579.0 368.8 L583.3 367.5 L587.4 365.6 L587.1 368.6 L588.8 372.6 L588.2 376.0 L589.6 377.4 L588.4 382.1 L587.4 384.2 L587.0 387.9 L585.4 389.6 L583.7 393.7 L583.0 395.8 L580.6 398.3 L582.5 401.7 L581.8 405.0 L584.9 408.1 L585.9 411.3 L586.0 414.0 L586.6 415.2 L588.2 418.7 L591.3 422.5 L592.0 425.3 L592.7 428.1 L595.7 430.7 L596.3 433.6 L598.2 437.2 L600.7 435.1 L604.0 435.8 L608.1 434.9 L611.4 433.5 L610.1 436.7 L612.0 438.9 L613.3 442.2 L613.1 445.2 L615.7 447.3 L615.1 450.9 L615.6 454.2 L618.6 456.1 L622.2 456.3 L624.3 456.5 L628.3 458.1 L630.1 455.7 L634.4 455.2 L635.6 453.0 L639.6 451.2 L642.2 450.4 L645.6 448.7 L647.7 446.7 L650.6 445.2 L650.4 448.9 L650.3 452.1 L650.5 456.7 L650.9 459.2 L650.6 462.7 L649.2 466.4 L646.2 470.0 L645.8 471.6 L642.2 475.3 L642.3 478.1 L640.5 480.6 L637.1 481.0 L633.7 482.0 L630.7 482.8 L628.8 483.0 L624.4 483.9 L623.3 485.3 L618.2 486.8 L617.2 487.5 L612.7 486.6 L609.3 484.5 L607.4 485.5 L602.5 485.0 L598.8 483.0 L595.5 482.0 L592.6 482.6 L589.7 480.7 L586.1 480.3 L585.5 478.8 L581.4 476.7 L580.1 473.8 L577.8 472.1 L576.2 469.4 L573.5 467.1 L571.2 464.6 L568.4 462.6 L566.8 459.8 L564.9 458.4 L562.4 457.1 L560.2 455.2 L556.6 452.7 L554.6 451.7 L552.8 448.4 L548.5 446.5 L546.2 444.5 L543.6 443.2 L541.5 442.4 L540.3 441.2 L538.8 438.8 L536.3 435.3 L532.2 435.6 L530.4 432.0 L528.7 430.7 L526.7 427.8 L524.5 424.6 L523.9 424.1 L523.4 421.0 L521.8 417.4 L518.8 416.1 L518.1 412.8 L515.2 409.1 L514.8 407.7 L514.2 405.1 L513.0 400.5 L514.3 398.3 L513.4 392.7 L513.7 389.9 L514.5 386.2 L516.1 384.2 L516.9 381.1 L520.4 378.6 L520.2 374.9 L521.3 372.7 L524.0 368.5 L525.3 366.5 L527.3 363.7 L528.7 361.4 L532.3 359.0 L533.0 357.0 L534.2 354.6 L536.2 352.1 L538.6 349.9 L541.9 347.5 L542.4 346.1 L544.7 343.2 L547.4 339.6 L549.5 337.2 L550.6 336.4 L554.5 333.5 L554.6 330.5 L557.0 328.9 L559.8 328.3 L563.7 330.4 L566.3 331.0" stroke="#ff7d00" stroke-width="3" fill="none"/><path d="M947.3 161.4 L950.4 164.0 L951.7 165.0 L953.9 167.3 L957.3 169.3 L959.2 171.8 L961.0 174.5 L962.7 178.2 L961.6 181.0 L962.4 185.6 L964.3 188.9 L966.6 191.6 L969.1 194.6 L970.0 197.5 L972.8 200.2 L973.3 202.6 L973.3 205.6 L973.6 208.0 L975.0 212.4 L975.7 215.2 L975.2 218.4 L976.6 221.3 L979.5 223.3 L981.3 227.0 L984.3 227.9 L988.0 228.7 L989.9 229.9 L993.1 230.4 L995.9 231.6 L998.6 233.1 L1003.3 233.6 L1005.8 235.6 L1007.3 235.0 L1011.8 237.4 L1014.4 237.0 L1016.9 239.4 L1020.7 240.2 L1022.3 241.3 L1025.7 240.9 L1028.2 241.4 L1032.2 240.8 L1034.5 240.5 L1038.2 240.3 L1040.8 240.5 L1043.8 239.5 L1046.5 240.2 L1049.4 239.2 L1052.4 240.0 L1056.4 239.7 L1058.4 239.4 L1062.0 237.5 L1064.4 238.2 L1067.6 235.6 L1071.4 236.8 L1074.4 237.1 L1078.4 238.4 L1081.1 238.0 L1085.5 239.9 L1088.9 239.4 L1090.0 235.7 L1089.5 232.6 L1092.0 229.7 L1093.7 230.8 L1097.9 231.2 L1100.3 232.6 L1102.6 233.7 L1105.5 235.1 L1108.1 236.4 L1111.2 238.3 L1115.2 238.1 L1118.5 239.7 L1120.9 241.6 L1123.6 242.3 L1126.8 243.2 L1130.6 244.4 L1131.6 241.2 L1132.1 238.3" stroke="#ff7d00" stroke-width="3" fill="none"/><path d="M1130.4 270.3 L1134.4 269.1 L1136.9 266.3 L1140.7 265.3 L1143.2 263.7 L1146.1 265.2 L1148.4 265.7 L1152.4 267.3 L1154.1 269.3 L1157.4 269.6 L1160.0 272.4 L1162.2 274.4 L1164.9 275.8 L1167.6 277.6 L1171.8 279.8 L1174.5 281.8 L1176.7 284.5 L1177.2 286.7 L1177.4 290.9 L1177.2 293.5 L1175.1 293.9 L1170.8 293.6 L1167.7 293.9 L1164.9 292.5 L1162.3 292.3 L1158.2 292.0 L1155.8 291.9 L1152.2 291.6 L1149.0 292.3 L1145.9 291.7 L1143.3 289.6 L1141.0 287.0 L1138.4 285.1 L1136.5 284.2 L1132.8 280.8 L1131.3 279.4 L1130.2 276.5 L1131.7 273.0 Z" stroke="#ff7d00" stroke-width="3" fill="none"/><path d="M1108.4 877.3 L1105.7 876.8 L1103.0 877.7 L1100.0 878.0 L1096.5 877.9 L1094.4 878.4 L1091.3 879.7 L1088.7 880.4 L1084.5 879.3 L1082.5 880.4 L1078.4 880.9 L1076.7 881.6 L1072.4 880.9 L1069.0 882.6 L1066.4 882.5 L1064.1 882.6 L1061.1 883.5 L1058.2 882.8 L1054.2 883.6 L1052.8 883.3 L1049.4 884.7 L1045.3 884.2 L1043.4 885.1 L1039.8 885.6 L1036.2 886.4 L1035.8 883.2 L1034.0 881.0 L1033.6 877.6 L1030.8 874.0 L1029.6 871.0 L1029.3 869.1 L1028.8 866.7 L1030.0 863.4 L1030.7 860.1 L1030.5 857.6 L1030.1 853.9 L1032.0 850.4 L1032.2 846.7 L1031.7 843.8 L1032.1 841.6 L1031.9 837.8 L1033.7 834.6 L1033.9 833.0 L1036.3 828.0 L1037.9 825.3 L1038.7 823.5 L1041.3 819.9 L1038.6 818.1 L1036.1 815.2 L1034.3 814.5 L1031.2 811.8 L1029.2 809.9 L1030.8 808.5 L1033.8 804.8 L1034.3 803.8 L1037.9 801.5 L1039.3 801.4 L1043.2 804.4 L1045.8 805.2 L1048.9 806.0 L1052.2 806.9 L1053.8 809.3 L1058.4 810.6 L1060.3 808.7 L1064.2 807.4 L1066.7 807.6 L1070.9 807.0 L1072.8 805.5 L1076.0 805.3 L1080.0 803.0 L1082.9 805.4 L1084.1 805.1 L1087.5 805.8 L1090.3 806.5 L1094.4 807.9 L1094.7 805.9 L1097.7 802.0 L1099.2 800.3 L1100.1 796.2 L1103.4 797.2 L1106.8 796.8 L1108.3 796.2 L1111.2 794.4 L1115.1 794.4 L1118.1 794.4 L1121.5 793.7 L1123.5 790.7 L1124.4 789.0 L1128.4 785.9 L1130.7 783.4 L1131.6 782.7 L1134.4 780.2 L1135.1 776.8 L1136.3 774.9 L1137.5 771.1 L1140.4 769.0 L1140.5 766.3 L1143.8 763.7 L1144.0 760.3 L1146.0 757.8 L1147.0 754.7 L1149.2 753.4 L1150.5 750.4 L1151.6 748.4 L1153.1 745.5 L1154.0 742.3 L1156.9 739.1 L1156.8 735.3 L1159.5 734.0 L1159.2 729.8 L1161.6 727.7 L1161.1 724.1 L1162.8 720.2 L1164.8 718.0 L1165.1 715.5 L1166.5 711.5 L1167.6 708.4 L1171.1 706.1 L1173.7 704.2 L1175.3 702.0 L1177.3 697.7 L1180.3 695.1 L1183.9 697.1 L1186.0 695.5 L1190.2 696.1 L1193.3 696.7 L1196.2 697.7 L1197.8 696.8 L1201.5 696.7 L1205.6 696.9 L1207.3 697.0 L1210.2 698.4 L1213.4 698.2 L1215.3 701.6 L1218.0 704.0" stroke="#ff7d00" stroke-width="3" fill="none"/><path d="M922.9 831.0 L926.6 829.6 L930.2 828.5 L933.8 827.1 L934.5 830.8 L935.8 834.6 L934.9 837.6 L933.6 841.1 L931.8 843.9 L931.0 846.5 L928.9 849.1 L928.1 851.8 L925.1 853.6 L922.6 855.9 L920.0 857.3 L917.7 859.6 L914.8 860.5 L912.9 863.7 L910.1 865.8 L906.9 867.9 L904.4 870.6 L901.6 873.2 L898.2 876.5 L895.3 877.0 L892.4 877.0 L889.3 877.0 L886.1 877.0 L882.5 876.6 L879.7 876.9 L876.9 877.0 L879.8 879.2 L882.2 881.7 L885.5 884.3 L888.0 885.3 L890.4 885.6 L893.1 886.6 L895.8 888.1 L899.6 888.6 L902.2 890.4 L905.3 889.7 L908.1 889.8 L910.7 889.5 L909.4 887.4 L907.3 883.6 L905.9 880.5 L908.6 878.8 L911.2 875.7 L913.3 873.5 L916.6 871.8 L919.0 868.6 L920.6 866.5 L922.3 863.8 L924.5 862.1 L926.2 859.7 L928.7 856.8 L929.9 854.1 L932.2 852.3 L932.8 848.3 L932.7 844.7 L933.0 841.6 L933.2 838.0 L934.5 834.8 L930.3 833.7 L926.6 832.4 Z" stroke="#ff7d00" stroke-width="3" fill="none"/><path d="M565.6 331.4 L565.0 333.6 L562.7 336.8 L562.3 338.8 L560.2 340.9 L557.7 343.7 L557.3 345.7 L556.2 348.7 L553.5 350.9 L553.5 354.9 L551.8 357.2 L547.2 358.2 L545.2 359.2 L543.2 361.2 L538.7 363.6 L535.7 365.4 L533.5 366.1 L530.4 367.5 L527.2 368.1 L525.6 370.0 L522.6 371.4 L522.1 375.8 L520.9 378.5 L519.7 381.5 L518.0 384.0 L518.6 386.4 L517.9 390.8 L516.1 392.7 L515.4 395.8 L515.6 398.8 L512.9 401.2 L513.4 406.0 L510.2 406.3 L507.4 408.2 L503.9 409.2 L501.8 410.6 L498.2 411.0 L495.7 413.9 L495.7 416.2 L495.6 418.2 L497.8 421.1 L501.9 421.7 L504.4 423.9 L507.5 425.9 L509.1 427.5 L512.9 428.2 L515.4 429.5 L517.1 430.5 L520.8 431.8 L521.8 434.6 L525.9 435.5 L528.7 436.1 L530.2 438.1 L533.3 439.4 L535.3 441.3 L539.7 444.1 L542.1 444.7 L543.9 447.2 L547.1 448.3 L548.9 448.8 L553.2 451.5 L556.0 452.7 L557.9 454.2 L561.6 454.7 L563.8 455.8 L567.2 456.4 L569.9 459.4 L571.4 459.8 L575.5 461.5 L578.3 461.4 L580.8 463.9 L585.0 463.0 L586.6 463.7 L589.7 465.2 L593.2 466.8 L597.4 466.1 L600.4 467.3 L603.5 467.9 L606.1 468.6 L609.8 470.4 L613.1 469.9 L616.4 472.3 L619.5 473.0 L621.0 473.1 L624.1 474.5 L627.4 475.2 L630.5 476.0 L633.6 475.5 L636.8 476.8 L640.0 478.0" stroke="#ff7d00" stroke-width="2.5" fill="none"/></g><g filter="url(#b6)"><ellipse cx="610" cy="470" rx="36" ry="13" transform="rotate(-14 610 470)" fill="#ff7d00"/><ellipse cx="708" cy="462" rx="9" ry="24" transform="rotate(-10 708 462)" fill="#ff7d00"/><ellipse cx="817" cy="631" rx="8" ry="6" fill="#ff7d00"/><path d="M696 437 L710 435 L718 460 L723 482 L733 487 L721 498 L707 489 L699 462Z" fill="#ff7d00"/></g><g filter="url(#b2)"><path d="M699 441 L709 440 L716 462 L721 484 L729 488 L720 494 L709 486 L701 462Z" fill="#ff7d00" opacity="0.9"/></g><g filter="url(#b3)"><ellipse cx="645" cy="419" rx="7" ry="5.6000000000000005" fill="#ff7d00" opacity="0.9"/><ellipse cx="1122" cy="453" rx="6" ry="4.800000000000001" fill="#ff7d00" opacity="0.9"/><ellipse cx="720" cy="354" rx="10" ry="8.0" fill="#ff7d00" opacity="0.75"/><ellipse cx="766" cy="354" rx="7" ry="5.6000000000000005" fill="#ff7d00" opacity="0.7"/><ellipse cx="723" cy="406" rx="7" ry="5.6000000000000005" fill="#ff7d00" opacity="0.7"/></g><g filter="url(#b3)" opacity="0.5"><circle cx="1041" cy="323" r="7" fill="#ff7d00"/><circle cx="1089" cy="366" r="7" fill="#ff7d00"/><circle cx="1192" cy="334" r="7" fill="#ff7d00"/><circle cx="1211" cy="313" r="7" fill="#ff7d00"/><circle cx="1217" cy="374" r="7" fill="#ff7d00"/><circle cx="1107" cy="478" r="7" fill="#ff7d00"/><circle cx="1186" cy="478" r="7" fill="#ff7d00"/><circle cx="1262" cy="424" r="7" fill="#ff7d00"/><circle cx="881" cy="307" r="7" fill="#ff7d00"/><circle cx="517" cy="673" r="7" fill="#ff7d00"/><circle cx="652" cy="850" r="7" fill="#ff7d00"/><circle cx="848" cy="848" r="7" fill="#ff7d00"/><circle cx="853" cy="913" r="7" fill="#ff7d00"/><circle cx="953" cy="774" r="7" fill="#ff7d00"/><circle cx="800" cy="690" r="7" fill="#ff7d00"/><circle cx="793" cy="226" r="7" fill="#ff7d00"/><circle cx="1089" cy="257" r="7" fill="#ff7d00"/><circle cx="906" cy="235" r="7" fill="#ff7d00"/><circle cx="1061" cy="404" r="7" fill="#ff7d00"/><circle cx="1143" cy="479" r="7" fill="#ff7d00"/><circle cx="937" cy="865" r="7" fill="#ff7d00"/><circle cx="1002" cy="789" r="7" fill="#ff7d00"/><circle cx="1031" cy="804" r="7" fill="#ff7d00"/><circle cx="580" cy="905" r="7" fill="#ff7d00"/><circle cx="906" cy="962" r="7" fill="#ff7d00"/><circle cx="750" cy="720" r="7" fill="#ff7d00"/><circle cx="1196" cy="341" r="7" fill="#ff7d00"/><circle cx="1018" cy="258" r="7" fill="#ff7d00"/></g><g fill="#ff8a10"><rect x="1040" y="322" width="2" height="2"/><rect x="1088" y="365" width="2" height="2"/><rect x="1191" y="333" width="2" height="2"/><rect x="1210" y="312" width="2" height="2"/><rect x="1216" y="373" width="2" height="2"/><rect x="1106" y="477" width="2" height="2"/><rect x="1185" y="477" width="2" height="2"/><rect x="1261" y="423" width="2" height="2"/><rect x="880" y="306" width="2" height="2"/><rect x="516" y="672" width="2" height="2"/><rect x="651" y="849" width="2" height="2"/><rect x="847" y="847" width="2" height="2"/><rect x="852" y="912" width="2" height="2"/><rect x="952" y="773" width="2" height="2"/><rect x="799" y="689" width="2" height="2"/><rect x="792" y="225" width="2" height="2"/><rect x="1088" y="256" width="2" height="2"/><rect x="905" y="234" width="2" height="2"/><rect x="1060" y="403" width="2" height="2"/><rect x="1142" y="478" width="2" height="2"/><rect x="936" y="864" width="2" height="2"/><rect x="1001" y="788" width="2" height="2"/><rect x="1030" y="803" width="2" height="2"/><rect x="579" y="904" width="2" height="2"/><rect x="905" y="961" width="2" height="2"/><rect x="749" y="719" width="2" height="2"/><rect x="1195" y="340" width="2" height="2"/><rect x="1017" y="257" width="2" height="2"/></g><path d="M631 208 Q585 250 561.0 274.5 Q537 299 523.5 317.0 Q510 335 501.5 356.5 Q493 378 482.5 404.0 Q472 430 465.0 457.0 L458 484" stroke="#3a3a3a" stroke-width="1.1" fill="none" transform="translate(3,4)"/><path d="M941 144 Q990 157 1005.5 162.5 Q1021 168 1040.5 177.5 Q1060 187 1082.5 201.5 Q1105 216 1127.5 234.0 Q1150 252 1165.0 269.0 Q1180 286 1196.0 306.5 L1212 327" stroke="#3d4146" stroke-width="1.2" fill="none" transform="translate(0,-3)"/><path d="M1283 600 Q1268 660 1254.0 695.0 Q1240 730 1220.0 765.0 Q1200 800 1175.0 829.0 Q1150 858 1120.0 881.5 Q1090 905 1060.0 920.0 Q1030 935 995.0 945.0 Q960 955 920.0 960.5 Q880 966 855.0 967.0 L830 968" stroke="#3a3a3a" stroke-width="1.1" fill="none" transform="translate(-4,-2)"/><path d="M588 850 Q640 886 665.0 899.0 Q690 912 711.0 922.0 Q732 932 756.0 939.0 Q780 946 805.0 952.0 L830 958" stroke="#3a3a3a" stroke-width="0.9" fill="none" opacity="0.7"/><path d="M631 208 Q585 250 561.0 274.5 Q537 299 523.5 317.0 Q510 335 501.5 356.5 Q493 378 482.5 404.0 Q472 430 465.0 457.0 L458 484" stroke="#c86a10" stroke-width="1" fill="none" opacity="0.6"/><path d="M941 144 Q990 157 1005.5 162.5 Q1021 168 1040.5 177.5 Q1060 187 1082.5 201.5 Q1105 216 1127.5 234.0 Q1150 252 1165.0 269.0 Q1180 286 1196.0 306.5 L1212 327" stroke="#c86a10" stroke-width="1" fill="none" opacity="0.5" transform="translate(-3 -5)"/><path d="M1283 600 Q1268 660 1254.0 695.0 Q1240 730 1220.0 765.0 Q1200 800 1175.0 829.0 Q1150 858 1120.0 881.5 Q1090 905 1060.0 920.0 Q1030 935 995.0 945.0 Q960 955 920.0 960.5 Q880 966 855.0 967.0 L830 968" stroke="#c86a10" stroke-width="1" fill="none" opacity="0.45" transform="translate(4 3)"/><g fill="none" stroke="#4f93d8" stroke-width="0.6"></g><path d="M751 315.5h1m0 0h1m-4 2h1m40 0h1m-43 1h1m26 0h1m-30 1h1m0 0h1m26 0h1m16 0h1m24 0h1m-72 1h1m27 0h1m17 0h1m9 0h1m15 0h1m-45 1h1m18 0h1m9 0h1m14 0h1m-73 1h1m27 0h1m19 0h1m9 0h1m14 0h1m-73 1h1m25 0h1m-25 1h1m0 0h1m21 0h1m22 0h1m9 0h1m1 0h1m0 0h1m0 0h1m10 0h1m-70 1h1m20 0h1m16 0h1m-33 1h1m13 0h1m17 0h1m5 0h1m-39 1h1m62 0h1m-63 1h1m28 0h1m0 0h1m31 0h1m2 0h1m-65 1h1m27 0h1m1 0h1m34 0h1m10 0h1m1 0h1m1 0h1m0 0h1m-53 1h1m43 0h1m0 0h1m-73 1h1m27 0h1m34 0h1m5 0h1m-74 1h1m3 0h1m28 0h1m32 0h1m45 0h1m-112 1h1m3 0h1m8 0h1m19 0h1m0 0h1m0 0h1m0 0h1m0 0h1m27 0h1m-111 1h1m74 0h1m7 0h1m0 0h1m24 0h1m46 0h1m-158 1h1m58 0h1m16 0h1m30 0h1m0 0h1m48 0h1m-172 1h1m12 0h1m59 0h1m47 0h1m23 0h1m2 0h1m0 0h1m21 0h1m5 0h1m-176 1h1m0 0h1m9 0h1m48 0h1m10 0h1m70 0h1m32 0h1m-173 1h1m56 0h1m79 0h1m29 0h1m-167 1h1m6 0h1m48 0h1m10 0h1m98 0h1m-167 1h1m7 0h1m56 0h1m68 0h1m34 0h1m-170 1h1m7 0h1m17 0h1m30 0h1m6 0h1m88 0h1m13 0h1m-168 1h1m7 0h1m18 0h1m9 0h1m19 0h1m5 0h1m89 0h1m15 0h1m-142 1h1m40 0h1m84 0h1m13 0h1m-162 1h1m21 0h1m8 0h1m31 0h1m84 0h1m-84 1h1m16 0h1m-61 1h1m42 0h1m1 0h1m23 0h1m69 0h1m-139 1h1m7 0h1m34 0h1m1 0h1m0 0h1m0 0h1m77 0h1m-125 1h1m46 0h1m11 0h1m6 0h1m58 0h1m-120 1h1m56 0h1m1 0h1m-64 1h1m2 0h1m31 0h1m4 0h1m15 0h1m3 0h1m38 0h1m21 0h1m1 0h1m0 0h1m-131 1h1m8 0h1m32 0h1m3 0h1m19 0h1m20 0h1m36 0h1m0 0h1m-83 1h1m1 0h1m19 0h1m57 0h1m-124 1h1m43 0h1m17 0h1m1 0h1m20 0h1m19 0h1m-105 1h1m59 0h1m21 0h1m0 0h1m19 0h1m14 0h1m-122 1h1m46 0h1m14 0h1m21 0h1m21 0h1m-107 1h1m47 0h1m1 0h1m0 0h1m28 0h1m0 0h1m-79 1h1m77 0h1m-82 1h1m3 0h1m48 0h1m28 0h1m0 0h1m23 0h1m-108 1h1m4 0h1m54 0h1m23 0h1m2 0h1m-29 1h1m28 0h1m10 0h1m7 0h1m-53 1h1m33 0h1m18 0h1m-102 1h1m46 0h1m52 0h1m24 0h1m0 0h1m-126 1h1m3 0h1m40 0h1m22 0h1m22 0h1m6 0h1m0 0h1m15 0h1m0 0h1m0 0h1m2 0h1m0 0h1m0 0h1m-122 1h1m1 0h1m0 0h1m2 0h1m0 0h1m25 0h1m10 0h1m21 0h1m23 0h1m0 0h1m2 0h1m0 0h1m-94 1h1m40 0h1m47 0h1m-91 1h1m10 0h1m2 0h1m18 0h1m30 0h1m25 0h1m-91 1h1m11 0h1m4 0h1m21 0h1m53 0h1m-60 1h1m3 0h1m-41 1h1m10 0h1m28 0h1m-4 1h1m1 0h1m27 0h1m-65 1h1m0 0h1m32 0h1m0 0h1m28 0h1m-65 1h1m1 0h1m31 0h1m30 0h1m-69 1h1m35 0h1m-36 1h1m1 0h1m32 0h1m32 0h1m-35 1h1m33 0h1m-67 1h1m88 0h1m-90 1h1m1 0h1m85 0h1m57 0h1m37 0h1m1 0h1m-185 1h1m72 0h1m0 0h1m10 0h1m49 0h1m7 0h1m37 0h1m-111 1h1m3 0h1m0 0h1m59 0h1m0 0h1m2 0h1m0 0h1m0 0h1m-144 1h1m68 0h1m0 0h1m7 0h1m6 0h1m95 0h1m-98 1h1m95 0h1m-217 1h1m36 0h1m81 0h1m96 0h1m-110 1h1m11 0h1m-120 1h1m103 0h1m-5 1h1m75 0h1m0 0h1m-178 1h1m82 0h1m34 0h1m56 0h1m42 0h1m1 0h1m-218 1h1m80 0h1m32 0h1m-116 1h1m170 0h1m-174 1h1m16 0h1m2 0h1m151 0h1m-173 1h1m20 0h1m0 0h1m62 0h1m39 0h1m-126 1h1m0 0h1m21 0h1m23 0h1m123 0h1m33 0h1m-207 1h1m2 0h1m0 0h1m21 0h1m22 0h1m1 0h1m1 0h1m0 0h1m1 0h1m1 0h1m28 0h1m36 0h1m82 0h1m-196 1h1m1 0h1m2 0h1m12 0h1m57 0h1m0 0h1m29 0h1m0 0h1m0 0h1m0 0h1m36 0h1m47 0h1m1 0h1m0 0h1m-211 1h1m17 0h1m1 0h1m0 0h1m0 0h1m0 0h1m60 0h1m5 0h1m25 0h1m0 0h1m2 0h1m39 0h1m12 0h1m31 0h1m0 0h1m1 0h1m2 0h1m0 0h1m-214 1h1m84 0h1m31 0h1m2 0h1m41 0h1m51 0h1m-216 1h1m85 0h1m26 0h1m0 0h1m1 0h1m3 0h1m42 0h1m16 0h1m35 0h1m-219 1h1m0 0h1m73 0h1m0 0h1m11 0h1m24 0h1m51 0h1m15 0h1m30 0h1m-136 1h1m43 0h1m43 0h1m13 0h1m32 0h1m-140 1h1m4 0h1m9 0h1m41 0h1m27 0h1m17 0h1m35 0h1m-141 1h1m7 0h1m7 0h1m41 0h1m48 0h1m0 0h1m29 0h1m-123 1h1m73 0h1m19 0h1m0 0h1m27 0h1m1 0h1m-144 1h1m11 0h1m28 0h1m49 0h1m0 0h1m0 0h1m4 0h1m0 0h1m5 0h1m82 0h1m-189 1h1m13 0h1m87 0h1m40 0h1m0 0h1m0 0h1m37 0h1m1 0h1m0 0h1m3 0h1m0 0h1m1 0h1m1 0h1m0 0h1m-198 1h1m4 0h1m10 0h1m113 0h1m16 0h1m1 0h1m-144 1h1m13 0h1m25 0h1m-54 1h1m4 0h1m7 0h1m13 0h1m-27 1h1m52 0h1m5 0h1m15 0h1m1 0h1m0 0h1m2 0h1m1 0h1m6 0h1m-91 1h1m11 0h1m41 0h1m13 0h1m2 0h1m0 0h1m6 0h1m1 0h1m4 0h1m6 0h1m0 0h1m0 0h1m65 0h1m-186 1h1m0 0h1m7 0h1m0 0h1m0 0h1m14 0h1m35 0h1m0 0h1m28 0h1m1 0h1m18 0h1m40 0h1m-153 1h1m0 0h1m1 0h1m0 0h1m18 0h1m9 0h1m15 0h1m8 0h1m16 0h1m26 0h1m7 0h1m41 0h1m30 0h1m-152 1h1m17 0h1m4 0h1m1 0h1m12 0h1m0 0h1m1 0h1m3 0h1m15 0h1m1 0h1m5 0h1m7 0h1m-79 1h1m21 0h1m15 0h1m29 0h1m0 0h1m6 0h1m0 0h1m-79 1h1m151 0h1m0 0h1m2 0h1m2 0h1m24 0h1m-190 1h1m186 0h1m0 0h1m-188 1h1m2 0h1m20 0h1m134 0h1m-136 1h1m135 0h1m18 0h1m0 0h1m1 0h1m-183 1h1m22 0h1m157 0h1m-193 1h1m11 0h1m162 0h1m16 0h1m-231 1h1m6 0h1m34 0h1m30 0h1m157 0h1m-223 1h1m63 0h1m-74 1h1m9 0h1m0 0h1m22 0h1m0 0h1m4 0h1m32 0h1m44 0h1m109 0h1m2 0h1m4 0h1m-238 1h1m36 0h1m3 0h1m1 0h1m191 0h1m-236 1h1m37 0h1m2 0h1m2 0h1m75 0h1m106 0h1m50 0h1m-263 1h1m19 0h1m0 0h1m2 0h1m0 0h1m0 0h1m1 0h1m29 0h1m153 0h1m8 0h1m40 0h1m-280 1h1m16 0h1m18 0h1m6 0h1m1 0h1m29 0h1m46 0h1m124 0h1m30 0h1m-280 1h1m18 0h1m14 0h1m11 0h1m0 0h1m75 0h1m105 0h1m19 0h1m26 0h1m0 0h1m0 0h1m-280 1h1m19 0h1m25 0h1m0 0h1m1 0h1m74 0h1m105 0h1m19 0h1m25 0h1m-278 1h1m32 0h1m1 0h1m0 0h1m10 0h1m1 0h1m29 0h1m44 0h1m127 0h1m1 0h1m21 0h1m-241 1h1m10 0h1m207 0h1m1 0h1m1 0h1m0 0h1m14 0h1m-278 1h1m33 0h1m14 0h1m-19 1h1m0 0h1m4 0h1m0 0h1m12 0h1m72 0h1m-96 1h1m0 0h1m92 0h1m157 1h1m22 0h1m-25 1h1m23 0h1m-268 1h1m242 0h1m24 0h1m-269 1h1m61 0h1m169 0h1m6 0h1m0 0h1m0 0h1m0 0h1m0 0h1m25 0h1m-209 1h1m16 0h1m155 0h1m0 0h1m2 0h1m31 0h1m-210 1h1m16 0h1m158 0h1m3 0h1m2 0h1m-244 1h1m58 0h1m17 0h1m158 0h1m0 0h1m0 0h1m0 0h1m32 0h1m-273 1h1m53 0h1m21 0h1m164 0h1m30 0h1m-272 1h1m49 0h1m0 0h1m191 0h1m-195 1h1m25 0h1m195 0h1m4 1h1m-202 1h1m182 0h1m17 0h1m-203 1h1m201 0h1m-16 1h1m0 1h1m0 0h1m13 0h1m-207 1h1m192 0h1m12 0h1m-204 1h1m0 0h1m189 0h1m11 0h1m-13 1h1m-281 1h1m47 0h1m36 0h1m2 0h1m192 0h1m-283 1h1m49 0h1m36 0h1m1 0h1m204 0h1m-297 1h1m86 0h1m1 0h1m206 0h1m-300 1h1m55 0h1m23 0h1m1 0h1m4 1h1m-92 1h1m59 0h1m242 0h1m-212 1h1m190 1h1m-222 1h1m-12 1h1m-4 1h1m0 0h1m27 0h1m-31 1h1m29 0h1m205 0h1m0 1h1m16 0h1m-225 1h1m223 0h1m-259 1h1m257 0h1m-21 1h1m4 0h1m-191 1h1m205 0h1m-216 1h1m2 0h1m6 0h1m187 0h1m15 0h1m-212 1h1m194 0h1m-244 1h1m46 0h1m194 0h1m-243 1h1m34 0h1m206 0h1m15 0h1m-2 1h1m-268 1h1m1 0h1m0 0h1m1 0h1m0 0h1m38 0h1m8 0h1m211 0h1m-223 1h1m22 0h1m183 0h1m-200 1h1m198 0h1m14 0h1m-302 1h1m0 0h1m-11 1h1m36 0h1m57 0h1m21 0h1m-115 1h1m0 0h1m30 0h1m0 0h1m58 0h1m23 0h1m-119 1h1m32 0h1m70 0h1m-99 1h1m21 0h1m2 0h1m71 0h1m6 0h1m4 0h1m-102 1h1m9 0h1m91 0h1m-102 1h1m4 0h1m88 0h1m-95 1h1m-17 1h1m107 0h1m220 0h1m-330 1h1m37 0h1m289 0h1m-328 1h1m17 0h1m0 0h1m17 0h1m66 1h1m3 0h1m218 0h1m-328 1h1m35 0h1m11 0h1m59 0h1m219 0h1m-329 1h1m36 0h1m10 0h1m55 0h1m-104 1h1m36 0h1m3 0h1m6 0h1m54 0h1m201 0h1m0 0h1m2 0h1m0 0h1m0 0h1m1 0h1m1 0h1m-317 1h1m37 0h1m10 0h1m55 0h1m213 0h1m-281 1h1m1 0h1m8 0h1m55 0h1m202 0h1m0 0h1m2 0h1m0 0h1m0 0h1m0 0h1m1 0h1m-300 1h1m20 0h1m66 0h1m211 0h1m-323 1h1m0 0h1m0 0h1m40 0h1m9 0h1m270 0h1m7 0h1m-281 1h1m216 0h1m-246 1h1m18 0h1m70 0h1m167 0h1m7 0h1m0 0h1m0 0h1m1 0h1m0 0h1m35 0h1m-290 1h1m229 0h1m-248 1h1m9 0h1m6 0h1m231 0h1m12 0h1m0 0h1m8 0h1m0 0h1m-276 1h1m3 0h1m7 0h1m7 0h1m13 0h1m0 0h1m212 0h1m12 0h1m0 0h1m13 0h1m-273 1h1m8 0h1m6 0h1m2 0h1m223 0h1m5 0h1m1 0h1m0 0h1m-265 1h1m1 0h1m6 0h1m22 0h1m220 0h1m0 0h1m7 0h1m3 0h1m-272 1h1m0 0h1m24 0h1m18 0h1m211 0h1m6 0h1m1 0h1m-271 1h1m18 0h1m0 0h1m21 0h1m6 0h1m224 0h1m11 0h1m-288 1h1m21 0h1m0 0h1m7 0h1m18 0h1m238 0h1m-247 1h1m43 0h1m-45 1h1m6 0h1m230 0h1m36 0h1m-289 1h1m13 0h1m14 0h1m27 0h1m189 0h1m0 0h1m0 0h1m38 0h1m-289 1h1m13 0h1m14 0h1m2 0h1m25 0h1m186 0h1m-218 1h1m3 0h1m255 0h1m0 0h1m-274 1h1m43 0h1m183 0h1m-219 1h1m4 0h1m32 0h1m226 0h1m-275 1h1m7 0h1m4 0h1m34 0h1m226 0h1m0 0h1m-291 1h1m2 0h1m0 0h1m0 0h1m56 0h1m1 0h1m0 0h1m6 0h1m201 0h1m-276 1h1m23 0h1m2 0h1m45 0h1m201 0h1m18 0h1m-296 1h1m69 0h1m224 0h1m-297 1h1m25 0h1m28 0h1m16 0h1m4 0h1m201 0h1m-280 1h1m55 0h1m16 0h1m203 0h1m19 0h1m2 1h1m-245 1h1m5 0h1m0 0h1m0 0h1m9 0h1m3 0h1m199 0h1m1 0h1m20 0h1m-242 1h1m13 0h1m3 0h1m200 0h1m3 0h1m10 0h1m3 0h1m-246 1h1m2 0h1m1 0h1m0 0h1m1 0h1m0 0h1m0 0h1m1 0h1m0 0h1m10 0h1m206 0h1m0 0h1m8 0h1m2 0h1m3 0h1m-244 1h1m7 0h1m0 0h1m8 0h1m201 0h1m7 0h1m6 0h1m7 0h1m-244 1h1m219 0h1m1 0h1m11 0h1m3 0h1m0 0h1m2 0h1m-234 1h1m0 0h1m1 0h1m206 0h1m12 0h1m6 0h1m2 0h1m6 0h1m-242 1h1m1 0h1m211 0h1m14 0h1m0 0h1m1 0h1m8 0h1m-281 1h1m1 0h1m18 0h1m13 0h1m2 0h1m215 0h1m7 0h1m9 0h1m1 0h1m-273 1h1m17 0h1m15 0h1m224 0h1m11 0h1m6 0h1m-277 1h1m14 0h1m14 0h1m1 0h1m236 0h1m-270 1h1m0 0h1m25 0h1m221 0h1m19 0h1m-269 1h1m9 0h1m2 0h1m11 0h1m-34 1h1m16 0h1m14 0h1m222 0h1m20 0h1m8 0h1m-287 1h1m1 0h1m6 0h1m23 0h1m253 0h1m-285 1h1m0 0h1m3 0h1m0 0h1m246 0h1m31 0h1m0 0h1m-287 1h1m2 0h1m1 0h1m24 0h1m222 0h1m-253 1h1m3 0h1m247 0h1m-297 1h1m44 1h1m0 0h1m2 0h1m0 0h1m0 0h1m2 0h1m-8 1h1m-48 1h1m46 0h1m278 0h1m-279 1h1m276 0h1m0 0h1m-326 1h1m0 1h1m1 0h1m43 0h1m-59 1h1m13 0h1m319 0h1m-346 1h1m9 0h1m334 0h1m-345 1h1m7 0h1m336 0h1m-345 1h1m0 0h1m0 0h1m0 0h1m1 0h1m6 0h1m13 0h1m318 1h1m-333 1h1m331 1h1m-332 1h1m330 0h1m-330 2h1m309 1h1m-311 1h1m-1 1h1m-1 1h1m-1 1h1m312 0h1m-1 1h1m0 1h1m0 1h1m0 0h1m-3 1h1m0 0h1m-7 1h1m4 0h1m1 0h1m1 0h1m1 0h1m-12 1h1m11 0h1m1 0h1m-294 1h1m278 0h1m6 0h1m-288 1h1m286 0h1m-289 1h1m288 0h1m-8 1h1m6 0h1m-298 1h1m289 0h1m-287 1h1m286 0h1m-295 1h1m0 0h1m0 0h1m2 0h1m289 0h1m2 0h1m-302 1h1m0 0h1m294 0h1m4 0h1m-7 1h1m2 0h1m-4 1h1m6 0h1m10 0h1m-20 1h1m7 0h1m10 1h1m-12 1h1m10 0h1m-19 1h1m2 0h1m15 1h1m-314 1h1m301 0h1m10 0h1m0 0h1m3 0h1m0 0h1m-213 1h1m209 0h1m-23 1h1m-296 1h1m11 0h1m95 0h1m190 0h1m-300 1h1m10 0h1m97 0h1m200 0h1m-310 1h1m18 0h1m89 0h1m188 0h1m-298 1h1m8 0h1m9 0h1m277 0h1m9 0h1m-298 1h1m98 0h1m2 0h1m-112 1h1m17 0h1m94 0h1m6 0h1m-120 1h1m8 0h1m104 0h1m0 0h1m1 0h1m187 0h1m-297 1h1m6 0h1m1 0h1m286 0h1m-289 1h1m0 0h1m86 0h1m198 0h1m-305 1h1m8 0h1m94 0h1m211 0h1m-299 1h1m85 0h1m200 0h1m-296 1h1m8 0h1m6 0h1m77 0h1m200 0h1m9 0h1m-306 1h1m8 0h1m6 0h1m76 0h1m202 0h1m8 0h1m-298 1h1m83 0h1m18 0h1m184 0h1m8 0h1m-298 1h1m4 0h1m77 0h1m213 0h1m-298 1h1m2 0h1m78 0h1m20 0h1m0 0h1m187 0h1m0 0h1m0 0h1m1 0h1m-295 1h1m92 0h1m1 0h1m7 0h1m-106 1h1m0 0h1m98 0h1m0 0h1m5 0h1m-107 1h1m1 1h1m-1 1h1m256 0h1m9 0h1m-159 1h1m0 0h1m0 0h1m146 0h1m0 0h1m6 0h1m-160 1h1m0 0h1m3 0h1m152 0h1m-265 1h1m59 0h1m43 0h1m0 0h1m5 0h1m0 0h1m1 0h1m147 0h1m-204 1h1m53 0h1m0 0h1m-113 1h1m0 0h1m55 0h1m42 0h1m12 0h1m144 0h1m-202 1h1m56 0h1m0 0h1m0 1h1m142 0h1m-203 1h1m59 0h1m140 0h1m9 0h1m-174 1h1m1 0h1m157 0h1m2 0h1m9 0h1m-212 1h1m41 0h1m0 0h1m1 0h1m155 0h1m-156 1h1m155 1h1m9 0h1m-212 1h1m45 0h1m151 0h1m-258 1h1m56 0h1m47 0h1m4 0h1m0 0h1m0 0h1m143 0h1m2 0h1m-259 1h1m107 0h1m5 0h1m143 0h1m13 0h1m-261 1h1m91 0h1m2 0h1m145 0h1m1 0h1m17 0h1m-263 1h1m1 0h1m42 0h1m49 0h1m145 0h1m5 0h1m15 0h1m-273 1h1m0 0h1m9 0h1m42 0h1m48 0h1m168 0h1m-270 1h1m0 0h1m98 0h1m145 0h1m1 0h1m-242 1h1m0 0h1m47 0h1m44 0h1m-95 1h1m0 0h1m95 0h1m139 0h1m-140 1h1m137 0h1m4 0h1m-242 1h1m2 0h1m95 0h1m0 0h1m0 0h1m134 0h1m4 0h1m-8 1h1m0 0h1m6 0h1m-241 1h1m100 0h1m129 0h1m-231 1h1m100 0h1m123 0h1m8 0h1m1 0h1m0 0h1m1 0h1m-241 1h1m101 0h1m121 0h1m0 0h1m2 0h1m0 0h1m4 0h1m2 0h1m0 0h1m2 0h1m-204 1h1m194 0h1m-248 1h1m109 0h1m6 0h1m0 0h1m-119 1h1m19 0h1m1 0h1m26 0h1m1 0h1m60 0h1m136 0h1m1 0h1m1 0h1m-253 1h1m14 0h1m0 0h1m0 0h1m4 0h1m9 0h1m12 0h1m3 0h1m0 0h1m61 0h1m136 0h1m-249 1h1m28 0h1m0 0h1m18 0h1m62 0h1m0 0h1m129 0h1m-250 1h1m6 0h1m0 0h1m1 0h1m0 0h1m16 0h1m3 0h1m0 0h1m15 0h1m72 0h1m126 0h1m-249 1h1m10 0h1m0 0h1m16 0h1m0 0h1m6 0h1m0 0h1m0 0h1m5 0h1m1 0h1m5 0h1m68 0h1m-123 1h1m33 0h1m0 0h1m10 0h1m8 0h1m1 0h1m0 0h1m63 0h1m-88 1h1m2 0h1m2 0h1m1 0h1m6 0h1m70 0h1m-122 1h1m32 0h1m6 0h1m80 0h1m-122 1h1m32 0h1m87 0h1m-121 1h1m122 0h1m-123 1h1m117 0h1m1 0h1m-120 1h1m121 0h1m-122 1h1m113 0h1m0 0h1m5 0h1m8 0h1m-131 1h1m112 0h1m4 0h1m2 0h1m2 0h1m-14 1h1m5 0h1m4 0h1m2 0h1m-126 1h1m118 0h1m2 0h1m-8 1h1m7 0h1m12 0h1m2 0h1m-24 1h1m4 0h1m8 0h1m1 0h1m1 0h1m4 0h1m93 0h1m-126 1h1m0 0h1m4 0h1m0 0h1m9 0h1m7 0h1m4 0h1m93 0h1m-123 1h1m0 0h1m1 0h1m0 0h1m6 0h1m5 0h1m5 0h1m0 0h1m0 0h1m0 0h1m94 0h1m-111 1h1m4 0h1m5 0h1m-19 1h1m5 0h1m3 0h1m0 0h1m-11 1h1m4 0h1m0 0h1m109 0h1m1 0h1m-103 1h1m100 0h1m-114 1h1m0 0h1m106 0h1m2 0h1m-112 1h1m0 0h1m9 0h1m93 0h1m0 0h1m2 0h1m1 0h1m-113 1h1m1 0h1m9 0h1m97 0h1m0 0h1m-110 1h1m8 0h1m87 0h1m0 1h1m2 2h1m0 0h1m0 0h1m-105 1h1m100 0h1m-2 1h1m8 0h1m-110 1h1m98 0h1m-99 1h1m96 0h1m-98 1h1m0 0h1m94 0h1m-94 1h1m0 0h1m91 0h1m-92 1h1m88 0h1m-90 2h1m86 0h1m0 0h1m-3 1h1m0 0h1m-2 1h1m-2 1h1m-3 1h1m-51 5h1m-1 1h1m29 0h1m53 0h1m0 0h1m-85 1h1m80 0h1m3 0h1m-99 1h1m0 0h1m12 0h1m28 0h1m49 0h1m-118 1h1m22 0h1m15 0h1m75 0h1m0 0h1m-120 1h1m11 0h1m25 0h1m1 0h1m31 0h1m3 0h1m0 0h1m36 0h1m0 0h1m-117 1h1m12 0h1m12 0h1m15 0h1m33 0h1m-62 1h1m9 0h1m17 0h1m2 0h1m0 0h1m-31 1h1m5 0h1m0 0h1m23 0h1m0 0h1m0 0h1m18 0h1m-70 1h1m16 0h1m4 0h1m44 1h1m-69 1h1m63 0h1m40 0h1m-2 1h1m-2 1h1m-1 1h1m-2 2h1m-2 1h1m-2 1h1m-1 2h1m-1 1h1m0 1h1m-74 3h1m0 0h1m-2 2h1m-1 1h1m0 1h1m-45 1h1m0 0h1m1 0h1m40 0h1m-41 1h1m42 0h1m0 0h1m20 0h1m-20 1h1m17 0h1m-4 1h1m-2 1h1m-58 1h1m55 0h1m-57 1h1m55 0h1m-35 1h1m-2 1h1m32 0h1m-35 3h1m3 1h1m-1 1h1m-91 1h1m47 0h1m19 0h1m16 0h1m39 0h1m-136 1h1m6 0h1m1 0h1m47 0h1m36 0h1m4 0h1m35 0h1m-135 1h1m0 0h1m0 0h1m74 0h1m14 0h1m5 0h1m35 0h1m-80 1h1m0 0h1m20 0h1m21 0h1m35 0h1m10 0h1m0 0h1m2 0h1m0 0h1m-98 1h1m1 0h1m20 0h1m21 0h1m42 0h1m0 0h1m1 0h1m-92 1h1m13 0h1m66 0h1m-103 1h1m19 0h1m4 0h1m9 0h1m8 0h1m57 0h1m-101 1h1m0 0h1m40 0h1m22 0h1m21 0h1m0 0h1m0 0h1m10 0h1m-99 1h1m0 0h1m0 0h1m1 0h1m0 0h1m0 0h1m16 0h1m6 0h1m9 0h1m22 0h1m18 0h1m0 0h1m-60 1h1m6 0h1m48 0h1m0 0h1m16 0h1m30 0h1m-106 1h1m5 0h1m48 0h1m17 0h1m-73 1h1m0 0h1m0 0h1m2 0h1m9 0h1m37 0h1m51 0h1m0 0h1m-155 1h1m47 0h1m24 0h1m-75 1h1m16 0h1m1 0h1m0 0h1m0 0h1m0 0h1m23 0h1m1 0h1m4 0h1m20 0h1m85 0h1m0 0h1m-137 1h1m0 0h1m17 0h1m8 0h1m49 0h1m2 0h1m1 0h1m0 0h1m0 0h1m-106 1h1m37 0h1m8 0h1m43 0h1m0 0h1m2 0h1m4 0h1m1 0h1m3 0h1m1 0h1m0 0h1m0 0h1m-111 1h1m67 0h1m4 0h1m29 0h1m0 0h1m-115 1h1m77 0h1m28 0h1m0 0h1m0 0h1m5 0h1m1 0h1m-119 1h1m10 0h1m60 0h1m5 0h1m-68 1h1m56 0h1m7 0h1m0 0h1m5 0h1m-113 1h1m40 0h1m53 0h1m0 0h1m6 0h1m6 0h1m-112 1h1m42 0h1m1 0h1m1 0h1m46 0h1m0 0h1m13 0h1m0 0h1m-18 1h1m84 0h1m0 0h1m0 0h1m-181 1h1m105 0h1m-107 1h1m181 0h1m1 0h1m0 0h1m0 0h1m-187 1h1m89 0h1m-1 1h1m0 1h1m71 0h1m26 0h1m-99 1h1m24 0h1m45 0h1m26 0h1m-190 1h1m91 0h1m24 0h1m45 0h1m-71 1h1m70 0h1m24 0h1m-129 1h1m25 0h1m0 0h1m28 0h1m47 0h1m24 0h1m-130 1h1m23 0h1m0 0h1m78 0h1m25 0h1m-132 1h1m34 0h1m22 0h1m48 0h1m0 0h1m-128 1h1m17 0h1m6 0h1m12 0h1m0 0h1m0 0h1m1 0h1m34 0h1m50 0h1m-130 1h1m17 0h1m5 0h1m0 0h1m0 0h1m51 0h1m-62 1h1m8 0h1m1 0h1m0 0h1m0 0h1m104 0h1m0 0h1m14 0h1m-152 1h1m15 0h1m9 0h1m50 0h1m56 0h1m17 0h1m-172 1h1m1 0h1m0 0h1m41 0h1m106 0h1m-149 1h1m0 0h1m1 0h1m0 0h1m0 0h1m9 0h1m24 0h1m106 0h1m-133 1h1m131 0h1m-109 1h1m106 0h1m-109 1h1m32 0h1m72 0h1m0 0h1m-130 1h1m20 0h1m120 0h1m-116 1h1m26 0h1m88 0h1m-117 1h1m26 0h1m88 0h1m-91 1h1m90 0h1m-92 1h1m-24 1h1m21 0h1m-22 1h1m0 0h1m80 0h1m32 0h1m-137 1h1m22 0h1m18 0h1m61 0h1m-104 1h1m22 0h1m16 0h1m63 0h1m4 0h1m0 0h1m24 0h1m-96 1h1m64 0h1m0 0h1m0 0h1m28 0h1m-135 1h1m42 0h1m-43 1h1m44 0h1m-46 1h1m45 0h1m0 0h1m0 1h1m-27 1h1m27 0h1m-50 1h1m21 0h1m27 0h1m-29 1h1m0 1h1m-29 2h1m1 0h1m0 0h1m2 0h1m0 0h1m0 0h1m-5 1h1m24 0h1m2 1h1m0 0h1" stroke="#4f92d8" stroke-width="1" opacity="0.17"/><path d="M740 312.5h1m1 1h1m0 1h1m0 0h1m0 1h1m0 1h1m0 1h1m-1 1h1m0 1h1m53 9h1m0 1h1m0 1h1m0 2h1m0 1h1m0 1h1m-22 1h1m-4 1h1m-7 1h1m0 0h1m1 0h1m0 0h1m0 0h1m25 0h1m-92 5h1m-2 1h1m61 0h1m0 0h1m0 0h1m1 0h1m-8 1h1m1 0h1m5 0h1m22 0h1m-33 1h1m9 0h1m-70 1h1m90 0h1m0 0h1m-1 1h1m-94 1h1m91 0h1m0 0h1m4 0h1m-99 1h1m97 0h1m-100 1h1m91 0h1m0 0h1m-51 1h1m47 0h1m7 0h1m21 0h1m0 0h1m1 0h1m0 0h1m-88 1h1m0 0h1m1 0h1m0 0h1m1 0h1m1 0h1m0 0h1m42 0h1m1 0h1m5 0h1m27 0h1m-100 1h1m28 0h1m35 0h1m4 0h1m29 0h1m-71 1h1m4 0h1m0 0h1m0 0h1m1 0h1m30 0h1m-41 1h1m2 0h1m6 0h1m0 0h1m0 0h1m22 0h1m4 0h1m30 0h1m-108 1h1m5 0h1m20 0h1m9 0h1m5 0h1m6 0h1m58 0h1m-108 1h1m4 0h1m4 0h1m14 0h1m9 0h1m8 0h1m0 0h1m0 0h1m27 0h1m2 0h1m-72 1h1m1 0h1m26 0h1m0 0h1m10 0h1m29 0h1m-74 1h1m7 0h1m7 0h1m3 0h1m23 0h1m28 0h1m-76 1h1m0 0h1m0 0h1m15 0h1m3 0h1m11 0h1m12 0h1m-50 1h1m4 0h1m15 0h1m1 0h1m12 0h1m12 0h1m23 0h1m3 0h1m-72 1h1m5 0h1m9 0h1m12 0h1m11 0h1m2 0h1m22 0h1m-79 1h1m0 0h1m2 0h1m7 0h1m4 0h1m8 0h1m0 0h1m12 0h1m37 0h1m-80 1h1m4 0h1m12 0h1m8 0h1m51 0h1m7 0h1m-89 1h1m5 0h1m11 0h1m24 0h1m10 0h1m30 0h1m1 0h1m-89 1h1m7 0h1m18 0h1m17 0h1m0 0h1m8 0h1m7 0h1m17 0h1m3 0h1m-66 1h1m26 0h1m31 0h1m1 0h1m1 0h1m0 0h1m-77 1h1m0 0h1m0 0h1m9 0h1m35 0h1m24 0h1m0 0h1m-86 1h1m1 0h1m6 0h1m0 0h1m2 0h1m9 0h1m8 0h1m25 0h1m0 0h1m7 0h1m17 0h1m-82 1h1m3 0h1m1 0h1m1 0h1m11 0h1m8 0h1m24 0h1m0 0h1m-53 1h1m0 0h1m0 0h1m3 0h1m10 0h1m8 0h1m24 0h1m26 0h1m-80 1h1m4 0h1m1 0h1m-8 1h1m51 0h1m-46 1h1m44 1h1m34 0h1m-88 1h1m3 1h1m2 0h1m14 0h1m30 1h1m-13 1h1m0 0h1m10 0h1m-15 1h1m0 0h1m-31 1h1m40 0h1m39 0h1m-97 1h1m17 0h1m0 0h1m22 0h1m17 0h1m31 0h1m1 0h1m0 0h1m-76 1h1m68 0h1m1 0h1m4 0h1m1 0h1m0 0h1m-80 1h1m0 0h1m0 0h1m0 0h1m9 0h1m0 0h1m0 0h1m2 0h1m0 0h1m2 0h1m5 0h1m37 0h1m42 0h1m-113 1h1m4 0h1m0 0h1m7 0h1m0 0h1m8 0h1m7 0h1m22 0h1m1 0h1m53 0h1m-133 1h1m14 0h1m3 0h1m0 0h1m7 0h1m16 0h1m7 0h1m18 0h1m0 0h1m11 0h1m45 0h1m-133 1h1m17 0h1m0 0h1m26 0h1m13 0h1m24 0h1m10 0h1m34 0h1m-133 1h1m68 0h1m2 0h1m13 0h1m39 0h1m1 0h1m1 0h1m-132 1h1m37 0h1m9 0h1m9 0h1m27 0h1m39 0h1m1 0h1m-89 1h1m18 0h1m2 0h1m22 0h1m-87 1h1m45 0h1m0 0h1m0 0h1m0 0h1m1 0h1m11 0h1m0 0h1m46 0h1m-90 1h1m39 0h1m171 0h1m-237 1h1m19 0h1m3 0h1m40 0h1m0 0h1m21 0h1m72 0h1m75 0h1m-240 1h1m0 0h1m23 0h1m42 0h1m45 0h1m-116 1h1m4 0h1m0 0h1m9 0h1m0 0h1m0 0h1m0 0h1m0 0h1m1 0h1m1 0h1m43 0h1m46 0h1m125 0h1m-235 1h1m60 0h1m22 0h1m23 0h1m47 0h1m-136 1h1m54 0h1m31 0h1m2 0h1m42 0h1m80 0h1m-236 1h1m8 0h1m0 0h1m10 0h1m33 0h1m5 0h1m4 0h1m8 0h1m8 0h1m41 0h1m14 0h1m17 0h1m1 0h1m3 0h1m1 0h1m3 0h1m0 0h1m0 0h1m-173 1h1m0 0h1m9 0h1m47 0h1m13 0h1m10 0h1m10 0h1m54 0h1m2 0h1m2 0h1m0 0h1m3 0h1m9 0h1m1 0h1m0 0h1m1 0h1m75 0h1m-251 1h1m2 0h1m13 0h1m80 0h1m5 0h1m3 0h1m27 0h1m9 0h1m1 0h1m0 0h1m0 0h1m10 0h1m6 0h1m0 0h1m4 0h1m8 0h1m12 0h1m35 0h1m16 0h1m-249 1h1m1 0h1m1 0h1m5 0h1m4 0h1m4 0h1m10 0h1m37 0h1m14 0h1m12 0h1m4 0h1m1 0h1m3 0h1m24 0h1m0 0h1m3 0h1m6 0h1m2 0h1m1 0h1m0 0h1m0 0h1m2 0h1m0 0h1m2 0h1m0 0h1m0 0h1m0 0h1m1 0h1m0 0h1m6 0h1m9 0h1m12 0h1m51 0h1m-237 1h1m6 0h1m2 0h1m0 0h1m0 0h1m3 0h1m2 0h1m10 0h1m55 0h1m1 0h1m0 0h1m1 0h1m0 0h1m0 0h1m3 0h1m14 0h1m5 0h1m16 0h1m0 0h1m5 0h1m9 0h1m0 0h1m5 0h1m0 0h1m2 0h1m6 0h1m1 0h1m0 0h1m9 0h1m37 0h1m9 0h1m4 0h1m-236 1h1m2 0h1m9 0h1m0 0h1m10 0h1m4 0h1m9 0h1m15 0h1m28 0h1m4 0h1m24 0h1m0 0h1m6 0h1m0 0h1m2 0h1m0 0h1m8 0h1m16 0h1m0 0h1m1 0h1m5 0h1m0 0h1m0 0h1m4 0h1m3 0h1m6 0h1m39 0h1m9 0h1m2 0h1m-232 1h1m26 0h1m66 0h1m24 0h1m28 0h1m14 0h1m1 0h1m1 0h1m0 0h1m8 0h1m52 0h1m1 0h1m-234 1h1m13 0h1m14 0h1m8 0h1m0 0h1m6 0h1m7 0h1m27 0h1m19 0h1m26 0h1m1 0h1m38 0h1m0 0h1m0 0h1m0 0h1m0 0h1m2 0h1m5 0h1m45 0h1m3 0h1m-234 1h1m16 0h1m12 0h1m7 0h1m0 0h1m14 0h1m49 0h1m0 0h1m16 0h1m5 0h1m43 0h1m1 0h1m1 0h1m7 0h1m37 0h1m5 0h1m5 0h1m-217 1h1m35 0h1m26 0h1m16 0h1m4 0h1m13 0h1m0 0h1m0 0h1m0 0h1m0 0h1m51 0h1m10 0h1m42 0h1m-229 1h1m19 0h1m9 0h1m9 0h1m0 0h1m0 0h1m11 0h1m26 0h1m17 0h1m9 0h1m65 0h1m59 0h1m-269 1h1m53 0h1m9 0h1m8 0h1m2 0h1m36 0h1m21 0h1m14 0h1m0 0h1m0 0h1m56 0h1m9 0h1m41 0h1m7 0h1m-270 1h1m16 0h1m0 0h1m0 0h1m36 0h1m0 0h1m23 0h1m6 0h1m21 0h1m24 0h1m12 0h1m108 0h1m11 0h1m7 0h1m-262 1h1m4 0h1m0 0h1m0 0h1m34 0h1m0 0h1m5 0h1m8 0h1m6 0h1m53 0h1m83 0h1m0 0h1m37 0h1m18 0h1m-280 1h1m0 0h1m0 0h1m0 0h1m8 0h1m10 0h1m2 0h1m2 0h1m10 0h1m20 0h1m17 0h1m12 0h1m130 0h1m3 0h1m32 0h1m-257 1h1m25 0h1m7 0h1m0 0h1m22 0h1m0 0h1m5 0h1m9 0h1m4 0h1m6 0h1m43 0h1m93 0h1m0 0h1m49 0h1m-280 1h1m3 0h1m16 0h1m2 0h1m0 0h1m0 0h1m0 0h1m1 0h1m7 0h1m2 0h1m18 0h1m0 0h1m2 0h1m14 0h1m0 0h1m4 0h1m2 0h1m2 0h1m139 0h1m3 0h1m0 0h1m43 0h1m-281 1h1m5 0h1m15 0h1m0 0h1m7 0h1m3 0h1m0 0h1m0 0h1m18 0h1m5 0h1m0 0h1m1 0h1m0 0h1m2 0h1m10 0h1m4 0h1m4 0h1m34 0h1m116 0h1m3 0h1m13 0h1m19 0h1m-281 1h1m6 0h1m13 0h1m1 0h1m21 0h1m4 0h1m15 0h1m1 0h1m2 0h1m0 0h1m7 0h1m0 0h1m14 0h1m0 0h1m0 0h1m1 0h1m2 0h1m19 0h1m123 0h1m12 0h1m19 0h1m-282 1h1m7 0h1m12 0h1m2 0h1m22 0h1m1 0h1m0 0h1m16 0h1m6 0h1m7 0h1m0 0h1m0 0h1m11 0h1m5 0h1m14 0h1m0 0h1m1 0h1m0 0h1m0 0h1m0 0h1m31 0h1m91 0h1m0 0h1m32 0h1m-285 1h1m11 0h1m31 0h1m1 0h1m23 0h1m8 0h1m5 0h1m1 0h1m0 0h1m0 0h1m4 0h1m1 0h1m22 0h1m126 0h1m1 0h1m1 0h1m0 0h1m2 0h1m-242 1h1m13 0h1m14 0h1m37 0h1m5 0h1m0 0h1m2 0h1m3 0h1m22 0h1m3 0h1m5 0h1m11 0h1m96 0h1m9 0h1m5 0h1m0 0h1m29 0h1m-270 1h1m12 0h1m4 0h1m9 0h1m18 0h1m9 0h1m18 0h1m2 0h1m33 0h1m7 0h1m3 0h1m96 0h1m4 0h1m2 0h1m3 0h1m0 0h1m0 0h1m0 0h1m0 0h1m0 0h1m27 0h1m-259 1h1m7 0h1m54 0h1m0 0h1m3 0h1m4 0h1m19 0h1m10 0h1m109 0h1m6 0h1m6 0h1m0 0h1m1 0h1m-227 1h1m1 0h1m9 0h1m46 0h1m0 0h1m3 0h1m0 0h1m33 0h1m7 0h1m3 0h1m112 0h1m2 0h1m0 0h1m6 0h1m-224 1h1m47 0h1m3 0h1m150 0h1m0 0h1m2 0h1m5 0h1m3 0h1m4 0h1m46 0h1m-281 1h1m9 0h1m39 0h1m48 0h1m8 0h1m105 0h1m5 0h1m0 0h1m2 0h1m0 0h1m7 0h1m-224 1h1m16 0h1m71 0h1m9 0h1m2 0h1m0 0h1m-115 1h1m0 0h1m28 0h1m0 0h1m50 0h1m18 0h1m10 0h1m0 0h1m0 0h1m101 0h1m13 0h1m3 0h1m48 0h1m-287 1h1m0 0h1m1 0h1m0 0h1m0 0h1m7 0h1m21 0h1m12 0h1m37 0h1m22 0h1m124 0h1m3 0h1m48 0h1m0 0h1m1 0h1m0 0h1m-284 1h1m6 0h1m21 0h1m33 0h1m8 0h1m5 0h1m3 0h1m17 0h1m9 0h1m115 0h1m3 0h1m53 0h1m0 0h1m-292 1h1m6 0h1m28 0h1m0 0h1m0 0h1m29 0h1m19 0h1m8 0h1m7 0h1m125 0h1m3 0h1m57 0h1m-295 1h1m8 0h1m13 0h1m1 0h1m14 0h1m0 0h1m37 0h1m151 0h1m-232 1h1m8 0h1m3 0h1m27 0h1m0 0h1m0 0h1m6 0h1m33 0h1m2 0h1m16 0h1m132 0h1m-228 1h1m3 0h1m14 0h1m15 0h1m0 0h1m24 0h1m0 0h1m10 0h1m2 0h1m142 0h1m7 0h1m-211 1h1m3 0h1m1 0h1m13 0h1m13 0h1m15 0h1m4 0h1m1 0h1m0 0h1m14 0h1m128 0h1m33 0h1m-249 1h1m13 0h1m2 0h1m1 0h1m0 0h1m0 0h1m6 0h1m4 0h1m0 0h1m2 0h1m1 0h1m4 0h1m14 0h1m2 0h1m2 0h1m1 0h1m0 0h1m178 0h1m15 0h1m-248 1h1m2 0h1m2 0h1m1 0h1m0 0h1m2 0h1m6 0h1m4 0h1m0 0h1m1 0h1m16 0h1m0 0h1m0 0h1m0 0h1m183 0h1m9 0h1m0 0h1m0 0h1m-231 1h1m9 0h1m2 0h1m24 0h1m9 0h1m168 0h1m17 0h1m-266 1h1m31 0h1m6 0h1m26 0h1m0 0h1m0 0h1m27 0h1m0 0h1m0 0h1m2 0h1m1 0h1m1 0h1m0 0h1m139 0h1m15 0h1m2 0h1m-251 1h1m22 0h1m3 0h1m0 0h1m19 0h1m4 0h1m38 0h1m0 0h1m0 0h1m133 0h1m18 0h1m2 0h1m-266 1h1m15 0h1m10 0h1m7 0h1m0 0h1m7 0h1m0 0h1m16 0h1m179 0h1m16 0h1m-278 1h1m34 0h1m0 0h1m8 0h1m6 0h1m2 0h1m0 0h1m4 0h1m4 0h1m5 0h1m6 0h1m201 0h1m1 0h1m-285 1h1m2 0h1m0 0h1m8 0h1m0 0h1m21 0h1m0 0h1m0 0h1m1 0h1m0 0h1m0 0h1m0 0h1m1 0h1m22 0h1m24 0h1m178 0h1m4 0h1m0 0h1m1 0h1m0 0h1m0 0h1m0 0h1m-279 1h1m0 0h1m5 0h1m4 0h1m24 0h1m8 0h1m9 0h1m0 0h1m3 0h1m1 0h1m0 0h1m0 0h1m22 0h1m179 0h1m0 0h1m1 0h1m-271 1h1m0 0h1m10 0h1m0 0h1m15 0h1m9 0h1m15 0h1m0 0h1m2 0h1m0 0h1m1 0h1m0 0h1m22 0h1m0 0h1m19 0h1m167 0h1m-276 1h1m1 0h1m1 0h1m0 0h1m8 0h1m0 0h1m1 0h1m12 0h1m8 0h1m1 0h1m19 0h1m3 0h1m2 0h1m-69 1h1m5 0h1m11 0h1m35 0h1m2 0h1m30 0h1m-94 1h1m1 0h1m2 0h1m0 0h1m17 0h1m12 0h1m20 0h1m2 0h1m9 0h1m20 0h1m-96 1h1m5 0h1m1 0h1m34 0h1m7 0h1m8 0h1m3 0h1m9 0h1m18 0h1m0 0h1m15 0h1m180 0h1m-286 1h1m1 0h1m5 0h1m0 0h1m14 0h1m11 0h1m8 0h1m7 0h1m0 0h1m5 0h1m3 0h1m3 0h1m216 0h1m-284 1h1m17 0h1m12 0h1m0 0h1m2 0h1m0 0h1m6 0h1m2 0h1m11 0h1m0 0h1m26 0h1m-87 1h1m0 0h1m27 0h1m0 0h1m6 0h1m0 0h1m5 0h1m12 0h1m7 0h1m8 0h1m10 0h1m2 0h1m-90 1h1m0 0h1m1 0h1m20 0h1m3 0h1m0 0h1m4 0h1m5 0h1m1 0h1m2 0h1m4 0h1m3 0h1m1 0h1m9 0h1m15 0h1m18 0h1m-104 1h1m0 0h1m3 0h1m19 0h1m3 0h1m7 0h1m6 0h1m8 0h1m13 0h1m3 0h1m1 0h1m13 0h1m15 0h1m184 0h1m0 0h1m-292 1h1m0 0h1m1 0h1m4 0h1m17 0h1m13 0h1m6 0h1m25 0h1m2 0h1m1 0h1m7 0h1m1 0h1m15 0h1m184 0h1m-291 1h1m23 0h1m1 0h1m0 0h1m7 0h1m5 0h1m7 0h1m21 0h1m1 0h1m5 0h1m22 0h1m186 0h1m2 0h1m-266 1h1m0 0h1m7 0h1m5 0h1m5 0h1m1 0h1m8 0h1m11 0h1m0 0h1m0 0h1m18 0h1m4 0h1m2 0h1m34 0h1m177 0h1m3 0h1m-321 1h1m40 0h1m4 0h1m3 0h1m3 0h1m20 0h1m16 0h1m199 0h1m-295 1h1m6 0h1m19 0h1m1 0h1m1 0h1m3 0h1m5 0h1m2 0h1m4 0h1m0 0h1m5 0h1m25 0h1m9 0h1m3 0h1m198 0h1m1 0h1m1 0h1m-275 1h1m0 0h1m0 0h1m0 0h1m8 0h1m3 0h1m8 0h1m0 0h1m5 0h1m0 0h1m14 0h1m2 0h1m0 0h1m14 0h1m1 0h1m2 0h1m197 0h1m1 0h1m1 0h1m-278 1h1m3 0h1m0 0h1m13 0h1m3 0h1m1 0h1m0 0h1m4 0h1m0 0h1m4 0h1m21 0h1m12 0h1m4 0h1m1 0h1m1 0h1m6 0h1m4 0h1m4 0h1m175 0h1m-274 1h1m1 0h1m15 0h1m5 0h1m12 0h1m15 0h1m15 0h1m1 0h1m1 0h1m2 0h1m2 0h1m2 0h1m2 0h1m0 0h1m5 0h1m1 0h1m181 0h1m-276 1h1m0 0h1m2 0h1m18 0h1m0 0h1m0 0h1m44 0h1m1 0h1m1 0h1m1 0h1m2 0h1m4 0h1m1 0h1m0 0h1m2 0h1m177 0h1m0 0h1m3 0h1m-272 1h1m1 0h1m14 0h1m4 0h1m2 0h1m2 0h1m6 0h1m10 0h1m19 0h1m5 0h1m0 0h1m2 0h1m0 0h1m0 0h1m1 0h1m0 0h1m188 0h1m0 0h1m16 0h1m-288 1h1m14 0h1m8 0h1m5 0h1m1 0h1m0 0h1m23 0h1m1 0h1m1 0h1m2 0h1m3 0h1m0 0h1m1 0h1m0 0h1m1 0h1m2 0h1m9 0h1m177 0h1m20 0h1m-291 1h1m4 0h1m0 0h1m11 0h1m1 0h1m29 0h1m1 0h1m24 0h1m6 0h1m0 0h1m0 0h1m5 0h1m197 0h1m-292 1h1m6 0h1m0 0h1m9 0h1m2 0h1m34 0h1m12 0h1m0 0h1m0 0h1m0 0h1m10 0h1m10 0h1m175 0h1m-262 1h1m7 0h1m18 0h1m13 0h1m1 0h1m16 0h1m3 0h1m3 0h1m6 0h1m9 0h1m175 0h1m20 0h1m-293 1h1m10 0h1m4 0h1m0 0h1m30 0h1m0 0h1m0 0h1m6 0h1m14 0h1m7 0h1m3 0h1m11 0h1m174 0h1m20 0h1m-294 1h1m13 0h1m0 0h1m0 0h1m1 0h1m14 0h1m15 0h1m5 0h1m2 0h1m10 0h1m11 0h1m3 0h1m12 0h1m174 0h1m19 0h1m6 0h1m-285 1h1m33 0h1m21 0h1m10 0h1m15 0h1m0 0h1m0 0h1m172 0h1m-275 1h1m2 0h1m0 0h1m10 0h1m19 0h1m0 0h1m10 0h1m1 0h1m1 0h1m0 0h1m0 0h1m2 0h1m26 0h1m10 0h1m7 0h1m172 0h1m16 0h1m1 0h1m-299 1h1m0 0h1m7 0h1m8 0h1m13 0h1m4 0h1m5 0h1m9 0h1m0 0h1m9 0h1m22 0h1m10 0h1m181 0h1m16 0h1m-287 1h1m22 0h1m0 0h1m0 0h1m5 0h1m2 0h1m2 0h1m0 0h1m1 0h1m3 0h1m9 0h1m0 0h1m9 0h1m7 0h1m12 0h1m199 0h1m-280 1h1m26 0h1m0 0h1m1 0h1m3 0h1m2 0h1m40 0h1m200 0h1m18 0h1m-300 1h1m14 0h1m20 0h1m1 0h1m28 0h1m1 0h1m0 0h1m-72 1h1m22 0h1m8 0h1m10 0h1m14 0h1m11 0h1m0 0h1m7 0h1m202 0h1m-261 1h1m17 0h1m1 0h1m11 0h1m16 0h1m0 0h1m6 0h1m-81 1h1m23 0h1m11 0h1m5 0h1m11 0h1m3 0h1m14 0h1m-81 1h1m1 0h1m5 0h1m22 0h1m10 0h1m4 0h1m12 0h1m14 0h1m9 0h1m-109 1h1m3 0h1m15 0h1m0 0h1m10 0h1m21 0h1m9 0h1m5 0h1m9 0h1m16 0h1m3 0h1m1 0h1m1 0h1m0 0h1m0 0h1m-109 1h1m6 0h1m10 0h1m1 0h1m12 0h1m21 0h1m6 0h1m1 0h1m7 0h1m5 0h1m18 0h1m3 0h1m6 0h1m-110 1h1m0 0h1m16 0h1m59 0h1m18 0h1m22 0h1m0 0h1m-98 1h1m12 0h1m0 0h1m20 0h1m0 0h1m0 0h1m15 0h1m9 0h1m34 0h1m1 0h1m214 0h1m-340 1h1m23 0h1m5 0h1m0 0h1m1 0h1m0 0h1m0 0h1m1 0h1m0 0h1m18 0h1m0 0h1m245 0h1m-305 1h1m22 0h1m5 0h1m9 0h1m16 0h1m0 0h1m44 0h1m23 0h1m174 0h1m-304 1h1m24 0h1m4 0h1m28 0h1m69 0h1m0 0h1m172 0h1m3 0h1m-279 1h1m30 0h1m15 0h1m53 0h1m172 0h1m3 0h1m36 0h1m-345 1h1m6 0h1m17 0h1m35 0h1m26 0h1m214 0h1m3 0h1m-311 1h1m10 0h1m17 0h1m33 0h1m243 0h1m-311 1h1m1 0h1m11 0h1m0 0h1m50 0h1m48 0h1m195 0h1m3 0h1m-299 1h1m0 0h1m46 0h1m244 0h1m0 0h1m-307 1h1m11 0h1m103 0h1m187 0h1m2 0h1m-293 1h1m100 0h1m165 0h1m26 0h1m-308 1h1m0 0h1m5 0h1m0 0h1m2 0h1m1 0h1m44 0h1m56 0h1m0 0h1m192 0h1m-309 1h1m0 0h1m0 0h1m1 0h1m0 0h1m5 0h1m1 0h1m42 0h1m57 0h1m155 0h1m1 0h1m0 0h1m5 0h1m24 0h1m0 0h1m-306 1h1m55 0h1m54 0h1m0 0h1m0 0h1m160 0h1m0 0h1m2 0h1m-225 1h1m28 0h1m25 0h1m3 0h1m153 0h1m0 0h1m7 0h1m1 0h1m19 0h1m19 0h1m-317 1h1m26 0h1m25 0h1m55 0h1m1 0h1m163 0h1m-275 1h1m9 0h1m0 0h1m14 0h1m25 0h1m55 0h1m158 0h1m7 0h1m1 0h1m0 0h1m-278 1h1m10 0h1m3 0h1m9 0h1m26 0h1m48 0h1m7 0h1m158 0h1m2 0h1m0 0h1m0 0h1m5 0h1m0 0h1m0 0h1m0 0h1m0 0h1m-283 1h1m4 0h1m5 0h1m0 0h1m3 0h1m33 0h1m49 0h1m4 0h1m-105 1h1m48 0h1m49 0h1m7 0h1m0 0h1m1 0h1m165 0h1m2 0h1m0 0h1m-281 1h1m3 0h1m102 0h1m165 0h1m0 0h1m0 0h1m1 0h1m2 0h1m0 0h1m-282 1h1m17 0h1m29 0h1m2 0h1m46 0h1m2 0h1m2 0h1m1 0h1m165 0h1m5 0h1m0 0h1m0 0h1m39 0h1m-317 1h1m15 0h1m0 0h1m1 0h1m24 0h1m51 0h1m3 0h1m0 0h1m167 0h1m0 0h1m0 0h1m6 0h1m1 0h1m-281 1h1m18 0h1m75 0h1m0 0h1m179 0h1m52 0h1m-330 1h1m18 0h1m25 0h1m1 0h1m47 0h1m0 0h1m3 0h1m-101 1h1m18 0h1m3 0h1m24 0h1m47 0h1m3 0h1m-80 1h1m25 0h1m0 0h1m46 0h1m-96 1h1m19 0h1m27 0h1m0 0h1m44 0h1m181 0h1m-257 1h1m13 0h1m14 0h1m0 0h1m0 0h1m224 0h1m-277 1h1m20 0h1m6 0h1m6 0h1m0 0h1m12 0h1m-32 1h1m2 0h1m6 0h1m8 0h1m62 0h1m202 0h1m-265 1h1m59 0h1m205 0h1m-307 1h1m18 0h1m8 0h1m0 0h1m8 0h1m2 0h1m8 0h1m49 0h1m196 0h1m9 0h1m20 0h1m-328 1h1m16 0h1m3 0h1m16 0h1m2 0h1m56 0h1m198 0h1m9 0h1m-307 1h1m15 0h1m3 0h1m17 0h1m0 0h1m1 0h1m251 0h1m0 0h1m0 0h1m0 0h1m9 0h1m8 0h1m-315 1h1m15 0h1m81 0h1m192 0h1m3 0h1m0 0h1m-297 1h1m21 0h1m71 0h1m0 0h1m0 0h1m0 0h1m192 0h1m4 0h1m-296 1h1m21 0h1m56 0h1m13 0h1m200 0h1m10 0h1m26 0h1m-332 1h1m20 0h1m55 0h1m0 0h1m12 0h1m196 0h1m3 0h1m10 0h1m-303 1h1m1 0h1m72 0h1m15 0h1m195 0h1m2 0h1m-288 1h1m9 0h1m49 0h1m10 0h1m5 0h1m7 0h1m0 0h1m0 0h1m5 0h1m193 0h1m-229 1h1m10 0h1m22 0h1m-36 1h1m25 0h1m4 0h1m5 0h1m-28 1h1m11 0h1m3 0h1m0 0h1m1 0h1m2 0h1m0 0h1m0 0h1m2 0h1m0 0h1m1 0h1m192 0h1m0 0h1m1 0h1m1 0h1m0 0h1m-289 1h1m57 0h1m13 0h1m0 0h1m11 0h1m4 0h1m0 0h1m192 0h1m5 0h1m-291 1h1m62 0h1m2 0h1m25 0h1m189 0h1m0 0h1m2 0h1m0 1h1m-234 1h1m2 0h1m3 0h1m228 0h1m7 0h1m-300 1h1m52 0h1m7 0h1m230 0h1m-242 1h1m8 0h1m236 0h1m-297 1h1m47 0h1m3 0h1m4 0h1m238 0h1m0 0h1m1 0h1m-300 1h1m45 0h1m0 0h1m3 0h1m3 0h1m0 0h1m242 0h1m0 0h1m0 0h1m12 0h1m-317 1h1m48 0h1m8 0h1m244 0h1m0 0h1m2 0h1m-309 1h1m1 0h1m55 0h1m245 0h1m1 0h1m-311 1h1m0 0h1m0 0h1m-4 1h1m310 0h1m-315 1h1m310 0h1m4 0h1m2 0h1m-9 1h1m0 1h1m-311 1h1m298 0h1m-300 2h1m310 0h1m-312 1h1m289 0h1m20 0h1m-7 1h1m4 0h1m11 0h1m-30 1h1m12 0h1m2 0h1m10 0h1m2 0h1m1 0h1m-326 1h1m305 0h1m2 0h1m0 0h1m7 0h1m0 0h1m-14 1h1m2 0h1m7 0h1m-11 1h1m1 0h1m1 0h1m4 0h1m-7 1h1m5 0h1m-10 1h1m1 0h1m5 0h1m-10 1h1m0 0h1m0 0h1m-2 1h1m0 0h1m-321 1h1m18 0h1m299 0h1m-321 1h1m316 0h1m1 0h1m-321 1h1m20 0h1m299 0h1m-322 1h1m19 0h1m298 0h1m-320 1h1m20 0h1m-21 1h1m19 0h1m-20 2h1m330 0h1m3 0h1m-328 1h1m11 0h1m3 0h1m295 0h1m13 0h1m-335 1h1m7 0h1m11 0h1m1 0h1m-23 1h1m7 0h1m11 0h1m1 0h1m290 0h1m11 0h1m7 0h1m-333 1h1m7 0h1m11 0h1m303 0h1m6 0h1m-313 1h1m294 0h1m11 0h1m0 0h1m0 0h1m0 0h1m-309 1h1m1 0h1m0 0h1m1 0h1m15 1h1m0 0h1m3 0h1m-27 1h1m15 0h1m0 0h1m0 0h1m1 0h1m-34 1h1m10 0h1m17 0h1m0 0h1m7 0h1m-30 1h1m0 0h1m17 0h1m280 0h1m-313 1h1m0 0h1m9 0h1m1 0h1m17 0h1m1 0h1m6 0h1m-8 1h1m4 0h1m-26 1h1m17 0h1m5 0h1m-7 1h1m2 0h1m267 0h1m-290 1h1m18 0h1m-21 2h1m21 0h1m260 0h1m14 0h1m-299 1h1m21 0h1m290 0h1m-314 1h1m286 2h1m18 0h1m-8 1h1m-301 1h1m295 0h1m2 0h1m0 0h1m0 0h1m-301 1h1m127 0h1m165 0h1m3 0h1m-298 1h1m0 0h1m28 0h1m0 0h1m0 0h1m263 0h1m1 0h1m24 0h1m-322 1h1m19 0h1m6 0h1m97 0h1m168 0h1m1 0h1m-296 1h1m24 0h1m98 0h1m0 0h1m164 0h1m6 0h1m-296 1h1m21 0h1m72 0h1m21 0h1m1 0h1m1 0h1m0 0h1m0 0h1m170 0h1m1 0h1m-296 1h1m15 0h1m4 0h1m3 0h1m92 0h1m3 0h1m164 0h1m8 0h1m-295 1h1m14 0h1m7 0h1m69 0h1m11 0h1m5 0h1m0 0h1m2 0h1m1 0h1m167 0h1m1 0h1m6 0h1m-279 1h1m2 0h1m2 0h1m78 0h1m0 0h1m9 0h1m3 0h1m164 0h1m9 0h1m3 0h1m11 0h1m-292 1h1m3 0h1m1 0h1m71 0h1m3 0h1m0 0h1m11 0h1m163 0h1m11 0h1m1 0h1m16 0h1m-210 1h1m20 0h1m0 0h1m2 0h1m170 0h1m0 0h1m-273 1h1m71 0h1m1 0h1m24 0h1m162 0h1m1 0h1m1 0h1m17 0h1m-286 1h1m72 0h1m16 0h1m172 0h1m1 0h1m6 0h1m12 0h1m-286 1h1m89 0h1m2 0h1m0 0h1m2 0h1m165 0h1m4 0h1m3 0h1m12 0h1m-194 1h1m5 0h1m168 0h1m0 0h1m1 0h1m0 0h1m13 0h1m-286 1h1m72 0h1m25 0h1m163 0h1m1 0h1m1 0h1m0 0h1m0 0h1m0 0h1m-271 1h1m72 0h1m17 0h1m8 0h1m163 0h1m2 0h1m2 0h1m14 0h1m-196 1h1m177 0h1m2 0h1m0 0h1m8 0h1m4 0h1m-284 1h1m7 0h1m252 0h1m21 0h1m-278 1h1m104 0h1m147 0h1m10 0h1m2 0h1m0 0h1m8 0h1m-283 1h1m1 0h1m0 0h1m0 0h1m86 0h1m171 0h1m-199 1h1m0 0h1m24 0h1m20 0h1m146 0h1m-201 1h1m2 0h1m29 0h1m18 0h1m0 0h1m144 0h1m-196 1h1m31 0h1m0 0h1m16 0h1m3 0h1m-121 1h1m100 0h1m0 0h1m16 0h1m147 0h1m-267 1h1m4 0h1m54 0h1m6 0h1m35 0h1m1 0h1m13 0h1m146 0h1m-261 1h1m58 0h1m56 0h1m5 0h1m0 0h1m-123 1h1m109 0h1m148 0h1m5 0h1m-274 1h1m0 0h1m6 0h1m53 0h1m0 0h1m53 0h1m0 0h1m1 0h1m7 0h1m138 0h1m10 0h1m-278 1h1m7 0h1m111 0h1m0 0h1m145 0h1m8 0h1m-277 1h1m0 0h1m1 0h1m4 0h1m106 0h1m11 0h1m139 0h1m7 0h1m-276 1h1m3 0h1m2 0h1m55 0h1m50 0h1m10 0h1m1 0h1m146 0h1m-274 1h1m4 0h1m47 0h1m0 0h1m4 0h1m0 0h1m1 0h1m50 0h1m11 0h1m147 0h1m-273 1h1m5 0h1m47 0h1m3 0h1m3 0h1m60 0h1m0 0h1m-120 1h1m49 0h1m1 0h1m54 0h1m11 0h1m149 0h1m0 0h1m-220 1h1m55 0h1m163 0h1m-271 1h1m49 0h1m55 0h1m-107 1h1m46 0h1m0 0h1m1 0h1m1 0h1m54 0h1m9 0h1m-118 1h1m45 0h1m5 0h1m200 0h1m0 0h1m13 0h1m-268 1h1m43 0h1m-44 1h1m42 0h1m3 0h1m200 0h1m-237 1h1m27 0h1m1 0h1m202 0h1m0 0h1m0 0h1m-236 1h1m102 0h1m125 0h1m2 0h1m21 0h1m-266 1h1m11 0h1m231 0h1m-233 1h1m102 0h1m135 1h1m-238 1h1m100 0h1m0 1h1m-101 1h1m100 2h1m-107 1h1m32 0h1m2 0h1m69 0h1m-117 1h1m0 0h1m1 0h1m1 0h1m0 0h1m0 0h1m32 0h1m0 0h1m0 0h1m2 0h1m-44 1h1m35 0h1m1 0h1m-3 1h1m225 0h1m-235 1h1m1 0h1m0 0h1m0 0h1m1 0h1m223 0h1m13 1h1m-160 1h1m3 1h1m0 0h1m-127 1h1m9 0h1m0 0h1m1 0h1m113 0h1m1 0h1m145 0h1m-274 1h1m1 0h1m3 0h1m121 0h1m-128 1h1m1 0h1m114 2h1m-1 1h1m142 0h1m-144 1h1m135 0h1m-2 1h1m1 0h1m-138 1h1m5 0h1m99 0h1m-98 1h1m96 0h1m30 0h1m-139 1h1m107 0h1m1 0h1m28 0h1m-141 1h1m14 0h1m96 0h1m27 0h1m-142 1h1m112 0h1m38 0h1m-14 1h1m-26 1h1m22 0h1m-24 1h1m21 0h1m16 0h1m-19 1h1m-35 1h1m9 0h1m-10 1h1m1 0h1m0 0h1m0 0h1m1 0h1m0 0h1m4 0h1m0 0h1m1 0h1m-8 1h1m2 0h1m-8 1h1m-107 1h1m1 0h1m101 0h1m0 0h1m-113 2h1m0 0h1m1 0h1m103 0h1m-87 4h1m99 2h1m-126 1h1m124 0h1m-1 2h1m-2 1h1m-85 1h1m48 0h1m11 0h1m22 0h1m-37 1h1m34 0h1m-112 1h1m3 0h1m67 0h1m3 0h1m12 0h1m21 0h1m-112 1h1m2 0h1m47 0h1m10 0h1m7 0h1m5 0h1m10 0h1m0 0h1m-88 1h1m0 0h1m21 0h1m26 0h1m17 0h1m41 0h1m-110 1h1m0 0h1m46 0h1m25 0h1m33 0h1m-113 1h1m2 0h1m4 0h1m1 0h1m40 0h1m19 0h1m7 0h1m0 0h1m3 0h1m3 0h1m-86 1h1m28 0h1m18 0h1m18 0h1m10 0h1m0 0h1m4 0h1m2 0h1m-94 1h1m35 0h1m6 0h1m10 0h1m37 0h1m-143 1h1m46 0h1m1 0h1m7 0h1m0 0h1m0 0h1m0 0h1m4 0h1m21 0h1m7 0h1m0 0h1m0 0h1m0 0h1m24 0h1m-80 1h1m11 0h1m10 0h1m20 0h1m10 0h1m3 0h1m13 0h1m0 0h1m0 0h1m0 0h1m0 0h1m0 0h1m19 0h1m-102 1h1m0 0h1m12 0h1m11 0h1m34 0h1m0 0h1m11 0h1m-108 1h1m45 0h1m34 0h1m11 0h1m1 0h1m18 0h1m-55 1h1m31 0h1m-47 1h1m13 0h1m30 0h1m12 0h1m-59 1h1m25 0h1m29 0h1m14 0h1m-57 1h1m11 0h1m18 0h1m25 0h1m-73 1h1m3 0h1m0 0h1m1 0h1m7 0h1m13 0h1m5 0h1m11 0h1m24 0h1m-72 1h1m0 0h1m7 0h1m4 0h1m18 0h1m37 0h1m-62 1h1m35 0h1m4 0h1m-81 1h1m11 0h1m24 0h1m1 0h1m18 0h1m3 0h1m12 0h1m-40 1h1m25 0h1m-22 1h1m17 0h1m2 0h1m-36 1h1m6 0h1m6 0h1m20 0h1m12 0h1m-43 1h1m26 0h1m0 0h1m14 0h1m-44 1h1m43 0h1m-86 1h1m34 0h1m3 0h1m0 0h1m45 0h1m2 0h1m-132 1h1m78 0h1m49 0h1m1 0h1m-99 1h1m43 0h1m52 0h1m0 0h1m15 1h1m-102 1h1m31 0h1m17 0h1m-20 1h1m53 0h1m-55 1h1m53 0h1m19 0h1m36 0h1m-112 1h1m8 0h1m13 0h1m29 0h1m45 0h1m-69 1h1m57 0h1m-91 1h1m0 0h1m23 0h1m0 0h1m1 0h1m1 0h1m0 0h1m22 0h1m-79 1h1m47 0h1m-65 1h1m38 0h1m23 0h1m59 0h1m-6 1h1m-164 1h1m90 0h1m50 0h1m-17 1h1m-26 1h1m59 0h1m-67 1h1m2 1h1m5 1h1m102 0h1m-155 2h1m4 1h1m65 0h1m-3 1h1m-18 1h1m9 0h1m0 0h1m1 0h1m0 0h1m0 0h1m0 0h1m49 0h1m-47 1h1m21 2h1m-119 1h1m0 0h1m12 0h1m-14 1h1m13 0h1m109 0h1m-141 2h1m7 0h1m22 0h1m-29 1h1m0 0h1m0 0h1m1 0h1m8 0h1m14 0h1m43 0h1m53 0h1m-115 1h1m79 0h1m-64 1h1m13 0h1m13 0h1m-46 1h1m16 0h1m86 0h1m-88 1h1m-52 1h1m51 0h1m-18 1h1m75 0h1m-30 1h1m24 0h1m73 0h1m-178 1h1m0 1h1m75 0h1m-76 1h1m0 0h1m0 0h1m71 0h1m-1 1h1m-4 2h1m0 0h1m-94 2h1m89 0h1m-90 1h1m59 0h1m17 0h1m1 0h1m0 0h1m6 0h1m-58 1h1m28 0h1m16 0h1m4 0h1m0 0h1m-84 1h1m51 0h1m20 0h1m56 0h1m0 0h1m-130 1h1m47 0h1m3 0h1m3 0h1m64 0h1m0 0h1m0 0h1m1 0h1m0 0h1m0 0h1m-127 1h1m38 0h1m13 0h1m55 0h1m2 0h1m-60 1h1m33 0h1m-87 1h1m52 0h1m123 0h1m-124 1h1m24 0h1m69 0h1m25 0h1m-123 1h1m0 0h1m14 0h1m1 0h1m0 1h1m0 0h1m55 0h1m25 1h1m-81 1h1m-65 1h1m64 0h1m40 0h1m-107 1h1m65 0h1m80 0h1m-92 1h1m10 0h1m37 1h1m-105 1h1m132 0h1m-134 2h1m-1 1h1m0 2h1m0 0h1m79 3h1m-2 1h1m-2 2h1m-1 1h1m-2 1h1m-1 1h1m-2 1h1m-1 1h1m-2 2h1" stroke="#4f92d8" stroke-width="1" opacity="0.30"/><path d="M758 343.5h1m0 1h1m-1 2h1m0 1h1m-1 1h1m-20 1h1m18 0h1m-20 1h1m19 1h1m-20 1h1m18 0h1m1 0h1m0 1h1m-22 1h1m21 0h1m-23 1h1m2 1h1m0 0h1m0 0h1m1 0h1m10 6h1m-2 1h1m11 0h1m-18 1h1m4 0h1m-5 1h1m0 0h1m1 0h1m0 0h1m-3 1h1m5 0h1m0 0h1m-12 1h1m1 0h1m0 0h1m8 0h1m0 0h1m35 0h1m-51 1h1m1 0h1m46 0h1m-53 1h1m3 0h1m45 0h1m1 0h1m1 0h1m-57 1h1m5 0h1m-8 1h1m51 0h1m1 0h1m-49 1h1m21 0h1m24 0h1m1 0h1m-59 1h1m25 0h1m-28 1h1m59 0h1m-72 1h1m37 0h1m30 0h1m-32 1h1m31 0h1m5 0h1m-40 1h1m32 0h1m0 0h1m-35 1h1m33 0h1m-1 1h1m22 0h1m-100 2h1m62 0h1m-64 1h1m43 0h1m-1 1h1m33 0h1m10 0h1m-90 1h1m43 0h1m34 0h1m0 0h1m1 0h1m0 0h1m5 0h1m0 0h1m-47 1h1m8 0h1m30 0h1m0 0h1m10 0h1m10 0h1m-108 1h1m41 0h1m1 0h1m-46 1h1m1 0h1m42 0h1m-43 1h1m30 0h1m44 0h1m7 0h1m-85 1h1m9 0h1m9 0h1m0 0h1m1 0h1m2 0h1m4 0h1m10 0h1m40 0h1m-83 1h1m10 0h1m1 0h1m0 0h1m0 0h1m1 0h1m0 0h1m5 0h1m6 0h1m43 0h1m1 0h1m4 0h1m20 0h1m-98 1h1m2 0h1m0 0h1m13 0h1m7 0h1m7 0h1m33 0h1m-86 1h1m4 0h1m5 0h1m24 0h1m46 0h1m0 0h1m-85 1h1m11 0h1m31 0h1m48 0h1m-58 1h1m8 0h1m0 0h1m1 0h1m0 0h1m1 0h1m30 0h1m10 0h1m4 0h1m-63 1h1m4 0h1m8 0h1m29 0h1m13 0h1m48 0h1m-147 1h1m14 0h1m23 0h1m3 0h1m8 0h1m8 0h1m42 0h1m41 0h1m-148 1h1m15 0h1m17 0h1m0 0h1m0 0h1m1 0h1m0 0h1m3 0h1m8 0h1m45 0h1m1 0h1m3 0h1m41 0h1m-148 1h1m17 0h1m18 0h1m5 0h1m19 0h1m21 0h1m14 0h1m3 0h1m-106 1h1m11 0h1m7 0h1m19 0h1m0 0h1m0 0h1m0 0h1m19 0h1m22 0h1m14 0h1m4 0h1m16 0h1m25 0h1m-150 1h1m62 0h1m37 0h1m3 0h1m-107 1h1m22 0h1m0 0h1m39 0h1m41 0h1m33 0h1m0 0h1m-142 1h1m24 0h1m45 0h1m29 0h1m3 0h1m32 0h1m13 0h1m0 0h1m-128 1h1m14 0h1m23 0h1m27 0h1m5 0h1m0 0h1m4 0h1m30 0h1m-109 1h1m36 0h1m0 0h1m13 0h1m11 0h1m5 0h1m5 0h1m29 0h1m-56 1h1m5 0h1m17 0h1m29 0h1m8 0h1m0 0h1m0 0h1m-106 1h1m2 0h1m4 0h1m19 0h1m0 0h1m21 0h1m41 0h1m7 0h1m4 0h1m3 0h1m-133 1h1m22 0h1m28 0h1m18 0h1m0 0h1m33 0h1m14 0h1m0 0h1m-122 1h1m21 0h1m35 0h1m12 0h1m47 0h1m0 0h1m0 0h1m1 0h1m-75 1h1m36 0h1m23 0h1m1 0h1m1 0h1m0 0h1m0 0h1m0 0h1m0 0h1m-142 1h1m5 0h1m38 0h1m92 0h1m66 0h1m0 0h1m1 0h1m-164 1h1m34 0h1m12 0h1m36 0h1m6 0h1m63 0h1m1 0h1m5 0h1m0 0h1m12 0h1m0 0h1m1 0h1m-182 1h1m16 0h1m16 0h1m13 0h1m36 0h1m90 0h1m5 0h1m-167 1h1m31 0h1m35 0h1m81 0h1m0 0h1m5 0h1m1 0h1m7 0h1m-183 1h1m15 0h1m16 0h1m52 0h1m80 0h1m1 0h1m0 0h1m0 0h1m1 0h1m0 0h1m-143 1h1m47 0h1m0 0h1m93 0h1m23 0h1m-239 1h1m0 0h1m1 0h1m28 0h1m6 0h1m15 0h1m24 0h1m37 0h1m20 0h1m80 0h1m20 0h1m1 0h1m-240 1h1m1 0h1m25 0h1m6 0h1m77 0h1m102 0h1m3 0h1m19 0h1m-247 1h1m8 0h1m19 0h1m8 0h1m2 0h1m15 0h1m0 0h1m31 0h1m34 0h1m96 0h1m24 0h1m-239 1h1m24 0h1m6 0h1m0 0h1m14 0h1m2 0h1m65 0h1m96 0h1m3 0h1m19 0h1m-237 1h1m22 0h1m7 0h1m8 0h1m9 0h1m32 0h1m129 0h1m22 0h1m-214 1h1m26 0h1m34 0h1m28 0h1m99 0h1m3 0h1m-195 1h1m7 0h1m14 0h1m3 0h1m20 0h1m39 0h1m0 0h1m103 0h1m0 0h1m0 0h1m0 0h1m-189 1h1m14 0h1m4 0h1m16 0h1m0 0h1m25 0h1m14 0h1m109 0h1m-205 1h1m7 0h1m6 0h1m9 0h1m26 0h1m-63 1h1m0 0h1m1 0h1m14 0h1m6 0h1m7 0h1m0 0h1m10 0h1m15 0h1m1 0h1m39 0h1m-131 1h1m0 0h1m0 0h1m1 0h1m1 0h1m3 0h1m22 0h1m1 0h1m0 0h1m0 0h1m2 0h1m8 0h1m9 0h1m-61 1h1m7 0h1m36 0h1m2 0h1m4 0h1m5 0h1m78 0h1m-140 1h1m48 0h1m24 0h1m14 0h1m-91 1h1m50 0h1m4 0h1m3 0h1m29 0h1m14 0h1m6 0h1m28 0h1m151 0h1m-257 1h1m12 0h1m9 0h1m31 0h1m14 0h1m1 0h1m0 0h1m0 0h1m7 0h1m0 0h1m6 0h1m-60 1h1m25 0h1m10 0h1m15 0h1m0 0h1m0 0h1m2 0h1m168 0h1m-251 1h1m3 0h1m22 0h1m5 0h1m24 0h1m0 0h1m20 0h1m170 0h1m-249 1h1m10 0h1m18 0h1m19 0h1m197 0h1m-252 1h1m0 0h1m-34 1h1m279 0h1m0 0h1m-220 1h1m0 0h1m0 0h1m1 0h1m-17 1h1m10 0h1m5 0h1m5 0h1m34 0h1m183 0h1m1 0h1m-307 1h1m50 0h1m2 0h1m14 0h1m14 0h1m4 0h1m50 0h1m164 0h1m-284 1h1m28 0h1m7 0h1m7 0h1m15 0h1m4 0h1m1 0h1m12 0h1m201 0h1m-254 1h1m7 0h1m28 0h1m12 0h1m-22 1h1m1 0h1m5 0h1m0 0h1m10 0h1m0 0h1m49 0h1m151 0h1m0 0h1m-298 1h1m5 0h1m37 0h1m0 0h1m7 0h1m14 0h1m4 0h1m1 0h1m5 0h1m1 0h1m14 0h1m3 0h1m194 0h1m-292 1h1m44 0h1m2 0h1m4 0h1m4 0h1m8 0h1m7 0h1m0 0h1m1 0h1m7 0h1m5 0h1m18 0h1m2 0h1m0 0h1m171 0h1m1 0h1m0 0h1m1 0h1m5 0h1m-299 1h1m41 0h1m4 0h1m2 0h1m5 0h1m4 0h1m4 0h1m3 0h1m3 0h1m2 0h1m1 0h1m2 0h1m10 0h1m16 0h1m177 0h1m1 0h1m0 0h1m4 0h1m0 0h1m-297 1h1m45 0h1m0 0h1m2 0h1m11 0h1m1 0h1m5 0h1m8 0h1m0 0h1m3 0h1m23 0h1m181 0h1m0 0h1m0 0h1m1 0h1m-272 1h1m23 0h1m1 0h1m0 0h1m3 0h1m8 0h1m9 0h1m2 0h1m4 0h1m0 0h1m14 0h1m1 0h1m0 0h1m0 0h1m6 0h1m180 0h1m2 0h1m-293 1h1m36 0h1m5 0h1m4 0h1m0 0h1m0 0h1m0 0h1m1 0h1m4 0h1m5 0h1m8 0h1m3 0h1m5 0h1m7 0h1m9 0h1m0 0h1m0 0h1m0 0h1m0 0h1m1 0h1m0 0h1m0 0h1m6 0h1m-116 1h1m2 0h1m43 0h1m0 0h1m13 0h1m4 0h1m3 0h1m0 0h1m3 0h1m3 0h1m2 0h1m7 0h1m6 0h1m0 0h1m5 0h1m9 0h1m177 0h1m-294 1h1m47 0h1m0 0h1m8 0h1m12 0h1m8 0h1m3 0h1m5 0h1m1 0h1m8 0h1m12 0h1m13 0h1m166 0h1m-297 1h1m19 0h1m28 0h1m0 0h1m41 0h1m8 0h1m7 0h1m5 0h1m179 0h1m-258 1h1m10 0h1m1 0h1m20 0h1m0 0h1m13 0h1m1 0h1m2 0h1m0 0h1m0 0h1m0 0h1m199 0h1m-296 1h1m37 0h1m10 0h1m10 0h1m15 0h1m6 0h1m3 0h1m0 0h1m3 0h1m2 0h1m0 0h1m2 0h1m15 0h1m-116 1h1m38 0h1m10 0h1m1 0h1m0 0h1m19 0h1m14 0h1m4 0h1m1 0h1m0 0h1m0 0h1m18 0h1m178 0h1m-256 1h1m0 0h1m9 0h1m2 0h1m0 0h1m10 0h1m2 0h1m2 0h1m0 0h1m10 0h1m4 0h1m5 0h1m0 0h1m1 0h1m0 0h1m8 0h1m207 0h1m-291 1h1m13 0h1m9 0h1m5 0h1m4 0h1m7 0h1m24 0h1m2 0h1m3 0h1m2 0h1m3 0h1m185 0h1m-238 1h1m5 0h1m5 0h1m14 0h1m10 0h1m0 0h1m1 0h1m4 0h1m1 0h1m-110 1h1m44 0h1m16 0h1m4 0h1m0 0h1m0 0h1m1 0h1m6 0h1m9 0h1m10 0h1m0 0h1m2 0h1m3 0h1m3 0h1m0 0h1m0 0h1m-69 1h1m16 0h1m0 0h1m0 0h1m1 0h1m2 0h1m0 0h1m2 0h1m3 0h1m9 0h1m12 0h1m2 0h1m4 0h1m4 0h1m1 0h1m1 0h1m0 0h1m3 0h1m-124 1h1m21 0h1m22 0h1m19 0h1m5 0h1m2 0h1m3 0h1m11 0h1m10 0h1m3 0h1m8 0h1m5 0h1m-76 1h1m7 0h1m12 0h1m0 0h1m0 0h1m5 0h1m31 0h1m190 0h1m-245 1h1m6 0h1m4 0h1m3 0h1m1 0h1m1 0h1m3 0h1m0 0h1m10 0h1m1 0h1m0 0h1m0 0h1m6 0h1m6 0h1m0 0h1m23 0h1m-107 1h1m18 0h1m4 0h1m1 0h1m0 0h1m4 0h1m0 0h1m3 0h1m4 0h1m0 0h1m2 0h1m5 0h1m0 0h1m0 0h1m8 0h1m18 0h1m12 0h1m17 0h1m157 0h1m-273 1h1m20 0h1m2 0h1m1 0h1m7 0h1m9 0h1m0 0h1m1 0h1m12 0h1m6 0h1m205 0h1m-264 1h1m12 0h1m6 0h1m0 0h1m2 0h1m10 0h1m21 0h1m3 0h1m0 0h1m1 0h1m199 0h1m-276 1h1m22 0h1m2 0h1m9 0h1m0 0h1m10 0h1m6 0h1m6 0h1m2 0h1m0 0h1m1 0h1m5 0h1m1 0h1m1 0h1m28 0h1m167 0h1m-277 1h1m22 0h1m24 0h1m2 0h1m1 0h1m1 0h1m6 0h1m0 0h1m9 0h1m0 0h1m3 0h1m8 0h1m1 0h1m0 0h1m182 0h1m0 0h1m21 0h1m-298 1h1m22 0h1m3 0h1m6 0h1m3 0h1m1 0h1m7 0h1m0 0h1m4 0h1m2 0h1m5 0h1m1 0h1m6 0h1m0 0h1m3 0h1m0 0h1m6 0h1m6 0h1m176 0h1m0 0h1m-272 1h1m20 0h1m0 0h1m0 0h1m5 0h1m9 0h1m9 0h1m13 0h1m8 0h1m0 0h1m2 0h1m0 0h1m0 0h1m14 0h1m0 0h1m-75 1h1m8 0h1m5 0h1m3 0h1m3 0h1m5 0h1m0 0h1m16 0h1m5 0h1m1 0h1m0 0h1m0 0h1m6 0h1m10 0h1m183 0h1m-261 1h1m5 0h1m1 0h1m1 0h1m2 0h1m3 0h1m9 0h1m22 0h1m2 0h1m-76 1h1m31 0h1m1 0h1m5 0h1m0 0h1m8 0h1m1 0h1m0 0h1m9 0h1m11 0h1m0 0h1m-44 1h1m10 0h1m6 0h1m23 0h1m210 0h1m-242 1h1m5 0h1m12 0h1m11 0h1m211 0h1m-253 1h1m39 0h1m208 0h1m2 0h1m-299 1h1m46 0h1m1 0h1m12 0h1m0 0h1m36 0h1m193 0h1m2 0h1m-305 1h1m6 0h1m43 0h1m59 0h1m188 0h1m3 0h1m-303 1h1m0 0h1m0 0h1m0 0h1m1 0h1m41 0h1m22 0h1m20 0h1m20 0h1m-110 1h1m2 0h1m31 0h1m1 0h1m6 0h1m35 0h1m4 0h1m0 0h1m22 0h1m2 0h1m181 0h1m3 0h1m0 0h1m3 0h1m24 0h1m6 0h1m-336 1h1m0 0h1m1 0h1m0 0h1m29 0h1m4 0h1m24 0h1m16 0h1m0 0h1m2 0h1m5 0h1m18 0h1m0 0h1m1 0h1m0 0h1m0 0h1m1 0h1m174 0h1m0 0h1m-293 1h1m1 0h1m1 0h1m22 0h1m9 0h1m1 0h1m0 0h1m22 0h1m11 0h1m0 0h1m1 0h1m0 0h1m3 0h1m0 0h1m0 0h1m2 0h1m13 0h1m4 0h1m0 0h1m179 0h1m0 0h1m7 0h1m2 0h1m-304 1h1m0 0h1m1 0h1m4 0h1m9 0h1m0 0h1m0 0h1m0 0h1m1 0h1m0 0h1m0 0h1m0 0h1m16 0h1m1 0h1m5 0h1m13 0h1m12 0h1m6 0h1m3 0h1m209 0h1m0 0h1m1 0h1m-306 1h1m0 0h1m0 0h1m3 0h1m29 0h1m6 0h1m3 0h1m6 0h1m13 0h1m4 0h1m8 0h1m3 0h1m0 0h1m33 0h1m182 0h1m-299 1h1m2 0h1m1 0h1m25 0h1m6 0h1m0 0h1m1 0h1m1 0h1m12 0h1m4 0h1m15 0h1m1 0h1m4 0h1m31 0h1m-116 1h1m2 0h1m0 0h1m1 0h1m0 0h1m0 0h1m1 0h1m25 0h1m0 0h1m1 0h1m2 0h1m4 0h1m6 0h1m4 0h1m5 0h1m11 0h1m38 0h1m180 0h1m5 0h1m9 0h1m-302 1h1m24 0h1m1 0h1m7 0h1m6 0h1m2 0h1m19 0h1m216 0h1m3 0h1m3 0h1m-303 1h1m27 0h1m6 0h1m1 0h1m2 0h1m6 0h1m5 0h1m2 0h1m2 0h1m3 0h1m12 0h1m1 0h1m215 0h1m7 0h1m-270 1h1m3 0h1m8 0h1m5 0h1m9 0h1m238 0h1m33 0h1m-304 1h1m7 0h1m2 0h1m11 0h1m2 0h1m2 0h1m16 0h1m216 0h1m4 0h1m-289 1h1m32 0h1m0 0h1m2 0h1m1 0h1m6 0h1m20 0h1m19 0h1m195 0h1m4 0h1m-286 1h1m11 0h1m18 0h1m0 0h1m0 0h1m8 0h1m1 0h1m20 0h1m0 0h1m0 0h1m211 0h1m4 0h1m-299 1h1m3 0h1m0 0h1m5 0h1m3 0h1m30 0h1m11 0h1m234 0h1m4 0h1m1 0h1m-303 1h1m0 0h1m3 0h1m2 0h1m64 0h1m243 0h1m-312 1h1m2 0h1m3 0h1m2 0h1m33 0h1m53 0h1m190 0h1m3 0h1m-293 1h1m2 0h1m3 0h1m1 0h1m33 0h1m53 0h1m190 0h1m36 0h1m-325 1h1m0 0h1m1 0h1m0 0h1m0 0h1m0 0h1m0 0h1m33 0h1m54 0h1m-96 1h1m0 0h1m3 0h1m-2 1h1m0 0h1m0 0h1m1 0h1m270 0h1m-271 1h1m252 0h1m9 0h1m6 0h1m-269 1h1m240 0h1m6 0h1m0 0h1m-253 1h1m0 0h1m2 0h1m244 0h1m6 0h1m8 0h1m48 0h1m-313 1h1m0 0h1m9 0h1m244 0h1m0 0h1m6 0h1m4 0h1m-268 1h1m2 0h1m1 0h1m78 0h1m171 0h1m5 0h1m40 0h1m-303 1h1m2 0h1m0 0h1m1 0h1m75 0h1m173 0h1m4 0h1m5 0h1m36 0h1m-304 1h1m1 0h1m253 0h1m0 0h1m1 0h1m1 0h1m2 0h1m-238 1h1m238 0h1m2 0h1m12 0h1m-281 1h1m259 0h1m4 0h1m1 0h1m2 0h1m0 0h1m43 0h1m-316 1h1m23 0h1m244 0h1m-270 1h1m24 0h1m238 0h1m1 0h1m-268 1h1m19 0h1m0 0h1m2 0h1m1 0h1m0 0h1m240 0h1m9 0h1m35 0h1m-316 1h1m25 0h1m1 0h1m242 0h1m1 0h1m0 0h1m0 0h1m4 0h1m-281 1h1m27 0h1m0 0h1m-3 1h1m0 0h1m2 0h1m248 0h1m-287 1h1m25 0h1m1 0h1m1 0h1m0 0h1m0 0h1m1 0h1m0 0h1m0 0h1m1 0h1m247 0h1m-287 1h1m7 0h1m23 0h1m0 0h1m252 0h1m-256 1h1m2 0h1m0 0h1m256 0h1m-291 1h1m4 0h1m23 0h1m3 0h1m251 0h1m-254 1h1m0 0h1m1 0h1m250 0h1m-286 1h1m29 0h1m3 0h1m250 0h1m-280 1h1m22 0h1m4 0h1m251 0h1m-288 1h1m6 0h1m21 0h1m5 0h1m253 0h1m-289 1h1m1 0h1m4 0h1m19 0h1m33 0h1m-35 1h1m2 0h1m3 0h1m256 0h1m-291 1h1m33 0h1m25 0h1m229 0h1m-261 1h1m3 0h1m2 0h1m0 0h1m21 0h1m7 0h1m219 0h1m10 0h1m-269 1h1m3 0h1m13 0h1m4 0h1m0 0h1m1 0h1m5 0h1m3 0h1m222 0h1m4 0h1m0 0h1m1 0h1m1 0h1m-300 1h1m48 0h1m0 0h1m0 0h1m13 0h1m227 0h1m-294 1h1m0 0h1m61 0h1m0 0h1m225 0h1m1 0h1m-293 1h1m0 0h1m288 0h1m1 0h1m-293 1h1m53 0h1m3 0h1m2 0h1m228 0h1m0 0h1m2 0h1m13 0h1m-309 1h1m52 0h1m239 0h1m-294 1h1m5 0h1m26 0h1m13 0h1m0 0h1m1 0h1m1 0h1m236 0h1m4 0h1m-295 1h1m5 0h1m35 0h1m2 0h1m0 0h1m2 0h1m2 0h1m236 0h1m-285 1h1m41 0h1m0 0h1m0 0h1m240 0h1m0 0h1m1 0h1m0 0h1m-295 1h1m31 0h1m9 0h1m1 0h1m0 0h1m1 0h1m0 0h1m1 0h1m1 0h1m241 0h1m-296 1h1m0 0h1m3 0h1m28 0h1m7 0h1m0 0h1m0 0h1m0 0h1m2 0h1m1 0h1m1 0h1m242 0h1m-295 1h1m0 0h1m2 0h1m28 0h1m6 0h1m1 0h1m0 0h1m0 0h1m0 0h1m2 0h1m1 0h1m0 0h1m243 0h1m0 0h1m12 0h1m-305 1h1m29 0h1m0 0h1m3 0h1m0 0h1m7 0h1m225 0h1m22 0h1m-298 1h1m3 0h1m34 0h1m257 0h1m-297 1h1m0 0h1m-2 1h1m1 0h1m291 0h1m-296 1h1m2 0h1m292 0h1m-297 1h1m38 0h1m256 1h1m-297 1h1m-2 1h1m292 0h1m3 0h1m7 0h1m-308 1h1m0 0h1m-3 1h1m3 0h1m295 0h1m-297 1h1m292 0h1m6 0h1m-302 1h1m276 0h1m-278 1h1m297 0h1m-300 1h1m-2 1h1m-4 2h1m293 0h1m0 0h1m-295 1h1m291 0h1m2 0h1m11 0h1m-309 1h1m-2 1h1m279 0h1m18 0h1m-302 1h1m0 0h1m299 0h1m-307 1h1m0 0h1m0 0h1m303 1h1m0 1h1m0 0h1m2 0h1m-3 1h1m0 0h1m-307 1h1m0 0h1m307 0h1m4 0h1m-7 1h1m-307 1h1m306 0h1m-308 1h1m306 0h1m-308 1h1m291 0h1m12 0h1m2 0h1m-309 1h1m0 0h1m293 1h1m12 0h1m4 0h1m-299 1h1m0 0h1m0 0h1m294 0h1m-314 1h1m8 0h1m2 0h1m0 0h1m17 0h1m0 0h1m1 0h1m0 0h1m247 0h1m-284 1h1m3 0h1m24 0h1m0 0h1m281 0h1m0 0h1m-309 1h1m22 0h1m292 0h1m-316 1h1m-1 1h1m21 0h1m282 0h1m-285 1h1m-4 1h1m-1 1h1m281 0h1m-283 1h1m270 1h1m10 0h1m-1 1h1m-281 2h1m91 0h1m-93 1h1m91 1h1m178 0h1m7 0h1m-8 1h1m7 0h1m-188 1h1m179 0h1m7 0h1m-1 1h1m-7 1h1m-1 1h1m-182 1h1m181 0h1m-183 1h1m17 0h1m163 0h1m-164 1h1m163 0h1m1 0h1m1 0h1m-169 1h1m164 0h1m-186 1h1m1 0h1m1 0h1m0 0h1m2 0h1m12 0h1m-13 1h1m12 0h1m159 0h1m-1 1h1m1 0h1m-163 1h1m158 0h1m2 0h1m-269 1h1m77 0h1m-79 1h1m76 0h1m0 0h1m23 0h1m6 0h1m155 0h1m1 0h1m0 0h1m-166 1h1m160 0h1m-264 1h1m73 0h1m4 0h1m23 0h1m0 0h1m151 0h1m0 0h1m0 0h1m4 0h1m1 0h1m-265 1h1m70 0h1m0 0h1m0 0h1m0 0h1m0 0h1m0 0h1m181 0h1m1 0h1m0 0h1m2 0h1m2 0h1m0 0h1m0 0h1m1 0h1m-278 1h1m2 0h1m70 0h1m1 0h1m0 0h1m0 0h1m2 0h1m29 0h1m19 0h1m132 0h1m7 0h1m-271 1h1m3 0h1m68 0h1m54 0h1m133 0h1m6 0h1m-265 1h1m1 0h1m57 0h1m0 0h1m1 0h1m1 0h1m39 0h1m17 0h1m134 0h1m-258 1h1m0 0h1m62 0h1m193 0h1m3 0h1m-2 1h1m21 0h1m-31 1h1m4 0h1m-138 1h1m131 0h1m4 0h1m-205 1h1m65 0h1m137 0h1m-204 1h1m64 0h1m132 0h1m-134 1h1m131 0h1m0 0h1m3 0h1m7 0h1m-17 1h1m1 0h1m2 0h1m-12 1h1m6 0h1m-247 1h1m239 0h1m6 0h1m-247 1h1m51 0h1m192 0h1m0 0h1m2 0h1m17 0h1m-267 1h1m50 0h1m59 0h1m131 0h1m4 0h1m-258 1h1m0 0h1m1 0h1m1 0h1m1 0h1m0 0h1m0 0h1m50 0h1m57 0h1m2 0h1m0 0h1m2 0h1m121 0h1m5 0h1m3 0h1m-248 1h1m3 0h1m108 0h1m128 0h1m19 0h1m-263 1h1m49 0h1m56 0h1m134 0h1m11 0h1m-251 1h1m109 0h1m126 0h1m-130 1h1m125 0h1m1 0h1m-241 1h1m4 0h1m105 0h1m3 0h1m121 0h1m-239 1h1m0 0h1m0 0h1m108 0h1m4 0h1m121 0h1m28 0h1m-270 1h1m4 0h1m2 0h1m104 0h1m-108 1h1m1 0h1m0 0h1m102 0h1m-104 1h1m0 0h1m97 0h1m1 0h1m8 0h1m129 1h1m-7 2h1m17 0h1m-151 1h1m128 0h1m0 0h1m36 0h1m-168 1h1m127 0h1m-130 1h1m-70 1h1m67 0h1m155 1h1m-227 1h1m-17 1h1m210 0h1m-202 1h1m5 0h1m68 0h1m125 0h1m-220 1h1m1 0h1m1 0h1m14 0h1m2 0h1m0 0h1m67 0h1m127 0h1m23 0h1m-243 1h1m16 0h1m0 0h1m197 2h1m-198 1h1m84 0h1m110 0h1m0 0h1m-197 1h1m193 0h1m0 0h1m-196 1h1m92 0h1m101 0h1m-195 1h1m87 0h1m0 0h1m0 0h1m103 2h1m-108 1h1m107 0h1m1 1h1m-112 1h1m0 0h1m0 0h1m130 0h1m19 0h1m-155 1h1m3 0h1m1 0h1m-10 1h1m9 0h1m0 0h1m89 0h1m1 0h1m1 1h1m-93 1h1m92 0h1m-93 1h1m91 1h1m27 1h1m-29 1h1m-2 2h1m2 0h1m-6 1h1m0 0h1m4 0h1m0 1h1m0 0h1m0 1h1m30 1h1m-51 3h1m-4 3h1m-2 1h1m-1 1h1m-99 1h1m-18 1h1m17 0h1m-29 1h1m27 1h1m2 0h1m92 0h1m0 0h1m-98 1h1m1 0h1m92 0h1m-93 1h1m-3 1h1m0 0h1m0 0h1m89 0h1m-93 1h1m63 0h1m17 0h1m6 0h1m0 0h1m1 0h1m-94 1h1m0 0h1m0 0h1m59 0h1m26 0h1m2 0h1m1 0h1m-95 1h1m0 0h1m0 0h1m45 0h1m1 0h1m10 0h1m34 0h1m-98 1h1m3 0h1m42 0h1m0 0h1m12 0h1m11 0h1m0 0h1m1 0h1m0 0h1m19 0h1m-45 1h1m0 0h1m8 0h1m0 0h1m15 0h1m1 0h1m0 0h1m14 0h1m-95 1h1m50 0h1m6 0h1m35 0h1m-95 1h1m4 0h1m0 0h1m50 0h1m0 0h1m36 0h1m-84 1h1m1 0h1m20 0h1m1 0h1m0 0h1m13 0h1m0 0h1m0 0h1m2 0h1m38 0h1m-81 1h1m2 0h1m0 0h1m0 0h1m10 0h1m0 0h1m0 0h1m21 0h1m6 0h1m-33 1h1m30 0h1m2 0h1m-36 1h1m24 0h1m4 0h1m-101 1h1m68 0h1m28 0h1m-1 1h1m-68 1h1m65 0h1m-2 1h1m-109 3h1m120 0h1m-75 1h1m-14 7h1m4 0h1m-16 3h1m60 1h1m-42 4h1m6 3h1m-87 1h1m61 5h1m-73 1h1m56 1h1m54 2h1m-106 1h1m62 1h1m68 3h1m44 1h1m-123 2h1m41 2h1m-44 2h1m-12 5h1m102 5h1m-50 2h1m-11 1h1m-39 1h1m125 1h1m-100 4h1m-8 7h1" stroke="#4f92d8" stroke-width="1" opacity="0.42"/><path d="M773 362.5h1m-18 4h1m-5 2h1m52 0h1m-25 4h1m18 2h1m-39 3h1m-33 3h1m-7 4h1m31 0h1m50 5h1m35 0h1m30 3h1m0 1h1m-126 1h1m124 0h1m-31 1h1m-122 1h1m118 0h1m2 1h1m0 0h1m24 1h1m0 0h1m-4 1h1m-14 1h1m0 0h1m3 0h1m-102 1h1m4 0h1m14 0h1m81 0h1m-100 1h1m28 0h1m69 0h1m15 0h1m-3 1h1m-15 1h1m6 0h1m1 0h1m0 0h1m2 0h1m0 0h1m-21 1h1m1 0h1m0 0h1m0 0h1m0 0h1m1 0h1m9 0h1m-106 1h1m60 0h1m24 0h1m0 0h1m7 0h1m0 0h1m-12 1h1m6 0h1m0 0h1m-25 1h1m0 0h1m19 0h1m-26 1h1m1 0h1m-91 1h1m83 0h1m1 0h1m0 0h1m24 0h1m-30 1h1m26 0h1m-69 1h1m16 1h1m41 0h1m92 0h1m0 0h1m-171 1h1m171 0h1m0 0h1m-6 1h1m1 0h1m0 0h1m-172 1h1m48 0h1m30 0h1m83 0h1m0 0h1m1 0h1m-144 1h1m45 0h1m85 0h1m15 0h1m-16 1h1m0 0h1m13 0h1m-12 1h1m10 0h1m-11 1h1m9 0h1m-186 1h1m185 0h1m-224 1h1m66 0h1m0 1h1m43 0h1m-99 1h1m27 0h1m24 0h1m26 0h1m17 0h1m120 1h1m2 0h1m1 0h1m-127 1h1m124 0h1m0 0h1m-126 1h1m123 0h1m-164 1h1m38 0h1m23 0h1m104 0h1m-192 1h1m61 0h1m-27 1h1m19 0h1m130 0h1m-233 1h1m99 0h1m7 0h1m0 0h1m122 0h1m-193 1h1m58 0h1m132 0h1m2 0h1m-177 1h1m38 0h1m0 0h1m135 0h1m1 0h1m11 0h1m0 0h1m-155 1h1m0 0h1m0 0h1m134 0h1m17 0h1m2 0h1m0 0h1m-275 1h1m63 0h1m48 0h1m138 0h1m3 0h1m-193 1h1m191 0h1m-251 1h1m46 0h1m28 0h1m23 0h1m7 0h1m141 0h1m18 0h1m-213 1h1m21 0h1m28 0h1m141 0h1m18 0h1m-163 1h1m142 1h1m0 0h1m-197 1h1m9 0h1m-14 1h1m1 0h1m4 0h1m-15 1h1m7 0h1m3 0h1m0 0h1m1 0h1m0 0h1m0 0h1m-10 1h1m0 0h1m0 0h1m0 0h1m1 0h1m1 0h1m2 0h1m0 0h1m1 0h1m1 0h1m48 0h1m-68 1h1m0 0h1m9 0h1m1 0h1m30 0h1m-42 1h1m0 0h1m0 0h1m17 0h1m0 0h1m15 0h1m206 0h1m0 0h1m0 0h1m1 0h1m-245 1h1m1 0h1m13 0h1m16 0h1m0 0h1m2 0h1m7 0h1m32 0h1m160 0h1m-289 1h1m1 0h1m42 0h1m6 0h1m0 0h1m27 0h1m2 0h1m10 0h1m0 0h1m-75 1h1m1 0h1m22 0h1m4 0h1m1 0h1m0 0h1m1 0h1m9 0h1m1 0h1m8 0h1m1 0h1m0 0h1m1 0h1m2 0h1m7 0h1m2 0h1m190 0h1m-264 1h1m22 0h1m1 0h1m0 0h1m0 0h1m0 0h1m2 0h1m9 0h1m11 0h1m0 0h1m0 0h1m4 0h1m6 0h1m0 0h1m4 0h1m188 0h1m-263 1h1m27 0h1m11 0h1m3 0h1m2 0h1m0 0h1m0 0h1m0 0h1m0 0h1m13 0h1m7 0h1m12 0h1m175 0h1m-262 1h1m30 0h1m5 0h1m0 0h1m4 0h1m2 0h1m6 0h1m19 0h1m5 0h1m5 0h1m175 0h1m-262 1h1m1 0h1m3 0h1m22 0h1m0 0h1m1 0h1m1 0h1m0 0h1m8 0h1m8 0h1m8 0h1m11 0h1m-74 1h1m26 0h1m1 0h1m1 0h1m0 0h1m11 0h1m13 0h1m1 0h1m6 0h1m0 0h1m1 0h1m0 0h1m1 0h1m9 0h1m-94 1h1m9 0h1m4 0h1m21 0h1m12 0h1m3 0h1m13 0h1m0 0h1m9 0h1m4 0h1m8 0h1m-85 1h1m27 0h1m1 0h1m4 0h1m5 0h1m7 0h1m0 0h1m5 0h1m1 0h1m0 0h1m7 0h1m2 0h1m13 0h1m178 0h1m-264 1h1m4 0h1m13 0h1m10 0h1m3 0h1m1 0h1m0 0h1m3 0h1m15 0h1m8 0h1m3 0h1m13 0h1m0 0h1m1 0h1m0 0h1m1 0h1m-94 1h1m0 0h1m0 0h1m2 0h1m2 0h1m5 0h1m8 0h1m8 0h1m8 0h1m8 0h1m4 0h1m4 0h1m8 0h1m1 0h1m0 0h1m0 0h1m12 0h1m8 0h1m0 0h1m0 0h1m0 0h1m166 0h1m-268 1h1m0 0h1m2 0h1m4 0h1m16 0h1m7 0h1m0 0h1m9 0h1m7 0h1m2 0h1m6 0h1m12 0h1m12 0h1m-91 1h1m16 0h1m9 0h1m17 0h1m0 0h1m0 0h1m2 0h1m3 0h1m0 0h1m16 0h1m5 0h1m11 0h1m178 0h1m5 0h1m0 0h1m0 0h1m1 0h1m1 0h1m-283 1h1m11 0h1m15 0h1m7 0h1m1 0h1m10 0h1m0 0h1m1 0h1m0 0h1m1 0h1m9 0h1m8 0h1m4 0h1m10 0h1m180 0h1m3 0h1m5 0h1m-288 1h1m17 0h1m5 0h1m6 0h1m17 0h1m0 0h1m9 0h1m0 0h1m10 0h1m0 0h1m1 0h1m3 0h1m200 0h1m5 0h1m21 0h1m-275 1h1m7 0h1m6 0h1m4 0h1m7 0h1m9 0h1m3 0h1m2 0h1m5 0h1m194 0h1m3 0h1m0 0h1m-260 1h1m6 0h1m14 0h1m6 0h1m0 0h1m6 0h1m6 0h1m0 0h1m6 0h1m3 0h1m2 0h1m-96 1h1m36 0h1m3 0h1m1 0h1m7 0h1m4 0h1m0 0h1m5 0h1m0 0h1m1 0h1m6 0h1m22 0h1m190 0h1m4 0h1m-259 1h1m0 0h1m0 0h1m1 0h1m0 0h1m0 0h1m10 0h1m3 0h1m9 0h1m1 0h1m8 0h1m12 0h1m0 0h1m6 0h1m188 0h1m3 0h1m-255 1h1m1 0h1m12 0h1m2 0h1m8 0h1m13 0h1m18 0h1m0 0h1m-59 1h1m12 0h1m10 0h1m1 0h1m7 0h1m3 0h1m10 0h1m3 0h1m5 0h1m-45 1h1m8 0h1m1 0h1m7 0h1m2 0h1m0 0h1m21 0h1m-54 1h1m5 0h1m2 0h1m1 0h1m6 0h1m1 0h1m5 0h1m2 0h1m1 0h1m0 0h1m2 0h1m3 0h1m13 0h1m-54 1h1m4 0h1m0 0h1m10 0h1m0 0h1m0 0h1m0 0h1m3 0h1m1 0h1m0 0h1m4 0h1m2 0h1m2 0h1m0 0h1m1 0h1m10 0h1m0 0h1m192 0h1m-293 1h1m30 0h1m14 0h1m10 0h1m6 0h1m2 0h1m1 0h1m5 0h1m0 0h1m0 0h1m0 0h1m7 0h1m3 0h1m0 0h1m0 0h1m0 0h1m4 0h1m193 0h1m-274 1h1m8 0h1m3 0h1m5 0h1m25 0h1m4 0h1m2 0h1m2 0h1m2 0h1m12 0h1m2 0h1m3 0h1m-99 1h1m18 0h1m7 0h1m6 0h1m0 0h1m10 0h1m5 0h1m6 0h1m4 0h1m2 0h1m10 0h1m8 0h1m9 0h1m-97 1h1m24 0h1m10 0h1m0 0h1m13 0h1m7 0h1m0 0h1m3 0h1m1 0h1m1 0h1m1 0h1m0 0h1m5 0h1m8 0h1m1 0h1m5 0h1m0 0h1m0 0h1m194 0h1m-291 1h1m16 0h1m26 0h1m4 0h1m14 0h1m0 0h1m2 0h1m7 0h1m1 0h1m0 0h1m0 0h1m6 0h1m4 0h1m2 0h1m195 0h1m-292 1h1m16 0h1m17 0h1m7 0h1m5 0h1m12 0h1m3 0h1m0 0h1m7 0h1m3 0h1m1 0h1m0 0h1m1 0h1m5 0h1m2 0h1m1 0h1m0 0h1m0 0h1m0 0h1m1 0h1m0 0h1m182 0h1m3 0h1m2 0h1m-297 1h1m14 0h1m6 0h1m13 0h1m16 0h1m11 0h1m5 0h1m0 0h1m0 0h1m5 0h1m2 0h1m4 0h1m0 0h1m0 0h1m3 0h1m1 0h1m0 0h1m0 0h1m0 0h1m0 0h1m0 0h1m1 0h1m0 0h1m1 0h1m0 0h1m183 0h1m1 0h1m4 0h1m-291 1h1m8 0h1m18 0h1m0 0h1m11 0h1m15 0h1m1 0h1m3 0h1m3 0h1m3 0h1m4 0h1m17 0h1m0 0h1m0 0h1m3 0h1m184 0h1m1 0h1m0 0h1m-288 1h1m0 0h1m7 0h1m0 0h1m1 0h1m3 0h1m9 0h1m13 0h1m4 0h1m15 0h1m8 0h1m30 0h1m181 0h1m2 0h1m-274 1h1m2 0h1m0 0h1m0 0h1m0 0h1m0 0h1m1 0h1m16 0h1m4 0h1m0 0h1m3 0h1m1 0h1m0 0h1m3 0h1m0 0h1m0 0h1m43 0h1m180 0h1m-270 1h1m0 0h1m0 0h1m0 0h1m5 0h1m0 0h1m14 0h1m8 0h1m44 0h1m8 0h1m181 0h1m0 0h1m-262 1h1m22 0h1m0 0h1m6 0h1m39 0h1m0 0h1m2 0h1m1 0h1m183 0h1m-295 1h1m26 0h1m4 0h1m0 0h1m21 0h1m50 0h1m0 0h1m186 0h1m-295 1h1m26 0h1m3 0h1m27 0h1m235 0h1m-265 1h1m2 0h1m25 0h1m233 0h1m1 0h1m-297 1h1m32 0h1m3 0h1m257 0h1m-265 1h1m0 0h1m29 0h1m-62 1h1m28 0h1m32 0h1m37 0h1m-102 1h1m100 0h1m-102 1h1m23 0h1m18 0h1m-45 1h1m44 0h1m-1 1h1m-6 1h1m38 0h1m20 0h1m0 0h1m-51 1h1m48 0h1m0 0h1m184 0h1m0 0h1m3 0h1m0 0h1m0 0h1m0 0h1m-247 1h1m3 0h1m47 0h1m0 0h1m186 0h1m0 0h1m-190 2h1m0 0h1m173 0h1m-176 1h1m0 0h1m170 0h1m-227 1h1m53 0h1m169 0h1m20 0h1m-243 1h1m50 0h1m168 0h1m20 0h1m-245 1h1m2 0h1m49 0h1m168 0h1m21 0h1m-245 1h1m2 0h1m217 0h1m21 0h1m-244 1h1m219 0h1m-218 1h1m-1 1h1m230 0h1m8 0h1m-241 1h1m229 0h1m3 0h1m0 0h1m1 0h1m1 0h1m0 0h1m0 0h1m0 0h1m-247 1h1m3 0h1m229 0h1m5 0h1m0 0h1m4 0h1m2 0h1m0 0h1m0 0h1m-253 1h1m247 0h1m-250 1h1m4 0h1m-1 1h1m-22 1h1m-2 1h1m-3 1h1m1 0h1m23 0h1m-29 1h1m0 0h1m27 0h1m-31 1h1m30 0h1m0 0h1m-35 1h1m0 0h1m33 0h1m0 0h1m1 2h1m0 1h1m20 2h1m227 0h1m-260 1h1m29 0h1m229 0h1m-283 1h1m0 0h1m2 0h1m0 0h1m16 0h1m28 0h1m230 0h1m-262 1h1m29 0h1m-52 1h1m20 0h1m27 0h1m0 0h1m6 0h1m224 0h1m-265 1h1m0 0h1m29 0h1m1 0h1m0 0h1m2 0h1m226 0h1m-284 1h1m17 0h1m31 0h1m4 0h1m0 0h1m0 0h1m0 0h1m225 0h1m-286 1h1m17 0h1m28 0h1m5 0h1m1 0h1m4 0h1m-44 1h1m26 0h1m0 0h1m2 0h1m235 0h1m2 0h1m-239 1h1m0 0h1m0 0h1m235 0h1m-244 1h1m248 0h1m-260 1h1m0 0h1m1 0h1m0 0h1m0 0h1m253 0h1m-261 1h1m260 0h1m-264 1h1m263 0h1m-266 1h1m265 0h1m0 1h1m0 1h1m0 0h1m-1 1h1m-310 6h1m-3 1h1m0 0h1m-4 2h1m-1 1h1m285 0h1m-287 1h1m-2 3h1m306 1h1m-282 11h1m0 0h1m0 0h1m1 0h1m270 0h1m13 0h1m-2 1h1m-291 1h1m-17 1h1m1 0h1m0 0h1m0 0h1m10 0h1m289 0h1m-307 1h1m0 0h1m0 0h1m0 0h1m3 0h1m1 0h1m1 0h1m0 0h1m1 0h1m0 0h1m0 0h1m289 0h1m-308 1h1m0 0h1m3 0h1m5 0h1m294 0h1m-308 1h1m19 0h1m1 0h1m0 0h1m283 0h1m-309 1h1m306 0h1m1 1h1m-1 1h1m-4 1h1m2 0h1m-2 2h1m0 0h1m0 0h1m-5 1h1m0 0h1m0 0h1m-6 1h1m1 0h1m0 0h1m1 0h1m-7 1h1m1 0h1m1 0h1m1 0h1m-8 1h1m1 0h1m2 0h1m-7 1h1m1 0h1m2 0h1m1 0h1m-11 1h1m2 0h1m0 0h1m4 0h1m-8 1h1m4 0h1m0 0h1m-7 2h1m-1 2h1m0 0h1m-3 1h1m4 1h1m-188 1h1m3 0h1m179 0h1m2 0h1m-181 1h1m1 0h1m0 0h1m-103 1h1m102 0h1m4 0h1m17 0h1m149 0h1m2 0h1m-279 1h1m91 0h1m0 0h1m1 0h1m2 0h1m0 0h1m3 0h1m0 0h1m3 0h1m167 0h1m0 0h1m-278 1h1m93 0h1m31 0h1m149 0h1m-276 1h1m108 0h1m163 0h1m2 0h1m0 0h1m-277 1h1m123 0h1m146 0h1m5 0h1m-278 1h1m108 0h1m160 0h1m-152 1h1m3 0h1m173 0h1m-297 1h1m3 0h1m112 0h1m1 0h1m-115 1h1m74 0h1m27 0h1m9 0h1m1 0h1m-119 1h1m3 0h1m72 0h1m28 0h1m-103 1h1m71 0h1m42 0h1m-115 1h1m69 0h1m44 0h1m-47 1h1m1 0h1m44 0h1m145 0h1m-264 1h1m66 0h1m1 0h1m0 0h1m46 0h1m-118 1h1m66 0h1m1 0h1m0 0h1m0 0h1m0 0h1m45 0h1m146 0h1m-265 1h1m61 0h1m0 0h1m0 0h1m0 0h1m1 0h1m0 0h1m2 0h1m189 0h1m15 0h1m-277 1h1m59 0h1m0 0h1m1 0h1m0 0h1m1 0h1m192 0h1m3 0h1m-205 1h1m0 0h1m1 0h1m4 0h1m191 0h1m2 0h1m-204 1h1m57 0h1m140 0h1m3 0h1m-196 1h1m50 0h1m139 0h1m2 0h1m-204 1h1m202 0h1m-204 1h1m61 0h1m-62 1h1m61 0h1m136 0h1m1 0h1m-140 1h1m138 0h1m-201 1h1m61 0h1m136 0h1m-199 1h1m0 0h1m1 0h1m58 0h1m-64 1h1m0 0h1m60 0h1m0 0h1m-1 1h1m0 0h1m-68 1h1m4 0h1m62 0h1m0 0h1m2 0h1m0 1h1m121 0h1m-195 1h1m3 0h1m188 0h1m-190 1h1m188 0h1m-194 2h1m52 1h1m0 0h1m139 0h1m-229 1h1m0 0h1m93 0h1m132 0h1m-248 1h1m0 0h1m0 0h1m2 0h1m1 0h1m43 0h1m57 0h1m1 0h1m1 0h1m2 0h1m-109 1h1m13 0h1m28 0h1m195 0h1m-239 1h1m10 0h1m0 0h1m1 0h1m1 0h1m219 0h1m0 0h1m-225 1h1m0 0h1m0 0h1m1 0h1m0 0h1m23 0h1m64 0h1m-97 1h1m0 0h1m1 0h1m28 0h1m60 0h1m3 0h1m-102 1h1m1 0h1m0 0h1m3 0h1m4 0h1m1 0h1m82 0h1m3 0h1m-104 1h1m2 0h1m1 0h1m11 0h1m0 0h1m2 0h1m0 0h1m0 0h1m0 0h1m1 0h1m-23 1h1m0 0h1m13 0h1m7 0h1m0 0h1m0 0h1m68 0h1m124 0h1m1 0h1m0 0h1m0 0h1m-227 1h1m0 0h1m6 0h1m10 0h1m0 0h1m0 0h1m1 0h1m71 0h1m0 0h1m7 0h1m115 0h1m0 0h1m5 0h1m-221 1h1m86 0h1m9 0h1m123 0h1m-224 1h1m0 0h1m86 0h1m5 0h1m-96 1h1m88 0h1m144 0h1m-235 1h1m96 0h1m-9 1h1m8 0h1m0 1h1m3 0h1m-1 1h1m4 0h1m-8 1h1m2 0h1m3 0h1m-9 1h1m1 0h1m0 0h1m1 0h1m1 0h1m-6 1h1m1 0h1m1 0h1m-2 1h1m-1 1h1m-1 1h1m-2 1h1m-2 1h1m3 2h1m2 1h1m96 0h1m-97 1h1m0 0h1m91 0h1m3 0h1m2 0h1m-110 1h1m10 0h1m89 0h1m6 0h1m-110 1h1m100 0h1m7 0h1m-111 1h1m12 0h1m88 0h1m6 0h1m-115 1h1m1 0h1m0 0h1m0 0h1m0 0h1m0 0h1m12 0h1m86 0h1m-103 1h1m-2 1h1m102 0h1m6 0h1m-112 1h1m102 0h1m5 0h1m-111 1h1m103 0h1m4 0h1m-110 1h1m102 0h1m-1 1h1m0 0h1m-6 1h1m1 0h1m1 0h1m-6 1h1m3 0h1m-8 1h1m1 0h1m-4 1h1m-94 1h1m92 0h1m-94 1h1m91 0h1m-92 2h1m89 0h1m0 0h1m-92 1h1m88 0h1m-90 1h1m0 1h1m1 0h1m78 0h1m-2 1h1m6 0h1m-10 1h1m0 0h1m6 0h1m-10 1h1m7 0h1m-72 1h1m-1 1h1m-1 1h1m50 0h1m-51 1h1m58 0h1m-57 1h1m44 0h1m-46 1h1m44 0h1m5 0h1m-61 1h1m2 0h1m55 0h1m-60 1h1m3 0h1m7 0h1m3 0h1m2 0h1m29 0h1m4 0h1m1 0h1m1 0h1m0 0h1m0 0h1m0 0h1m-70 1h1m3 0h1m1 0h1m0 0h1m1 0h1m2 0h1m5 0h1m0 0h1m0 0h1m1 0h1m2 0h1m31 0h1m5 0h1m0 0h1m2 0h1m-55 1h1m41 0h1m0 0h1m3 0h1m5 0h1m-53 1h1m31 0h1m4 0h1m0 0h1m1 0h1m11 0h1m-51 1h1m23 0h1m7 0h1m17 0h1m-28 1h1m0 0h1m22 0h1m1 0h1m-30 1h1m0 0h1m7 0h1m1 0h1m0 0h1m-15 1h1m0 0h1m6 0h1m1 0h1m6 0h1m-19 1h1m17 1h1m-19 1h1m17 0h1m-19 1h1m-2 1h1" stroke="#4f92d8" stroke-width="1" opacity="0.55"/><g fill="none" stroke="#ff8a10" stroke-width="1.3" stroke-linejoin="round"><path d="M840.8 415.2 L845.5 413.9 L847.4 413.3 L849.5 412.0 L854.1 411.9 L855.5 409.4 L858.7 410.0 L864.0 407.0 L868.2 409.5 L870.5 407.9 L872.2 405.4 L876.8 405.1 L879.0 405.2 L881.7 406.0 L886.3 407.3 L889.8 406.8 L893.0 407.0 L896.1 405.9 L901.1 408.3 L903.8 407.5 L905.4 406.1 L908.3 407.4 L912.9 410.2 L916.1 411.9 L919.5 415.1 L919.0 414.7 L924.5 417.1 L927.3 418.5 L927.0 420.8 L931.9 421.3 L933.0 422.3 L939.1 424.5 L939.6 423.8 L942.9 424.0 L948.4 425.3 L950.9 427.0 L953.0 428.7 L954.3 431.5 L955.8 433.7 L957.6 436.3 L961.5 441.0 L962.6 441.3 L965.5 439.9 L970.8 440.8 L971.6 442.0 L975.2 439.8 L980.2 440.1 L981.9 439.4 L984.5 441.2 L988.2 441.3 L991.8 442.6 L997.0 444.4 L999.0 447.4 L1001.0 446.9 L1004.1 452.3 L1002.7 453.5 L1005.0 459.2 L1004.0 462.4 L1007.0 464.2 L1006.2 465.6 L1005.8 471.2 L1007.2 473.3 L1008.0 476.6 L1009.8 477.8 L1009.2 482.1 L1009.6 483.5 L1011.9 488.4 L1012.9 489.5 L1014.6 492.1 L1012.5 495.3 L1010.7 495.1 L1006.8 496.7 L1005.0 496.5 L1001.2 499.4 L1000.1 499.2 L996.1 499.5 L991.2 498.3 L987.7 501.7 L986.8 502.4 L981.6 501.9 L979.9 502.7 L982.7 504.5 L985.1 503.9 L990.5 505.9 L993.8 506.2 L997.2 507.7 L999.0 507.8 L1004.0 509.3 L1005.7 509.9 L1009.6 511.2 L1011.2 512.6 L1013.5 515.3 L1014.3 517.4 L1019.6 520.2 L1020.7 521.3 L1022.8 524.6 L1023.8 528.1 L1024.7 530.5 L1026.5 532.7 L1029.9 534.1 L1030.9 538.2 L1030.9 542.7 L1030.0 542.9 L1030.4 548.2 L1030.3 549.8 L1032.8 554.5 L1031.6 558.4 L1031.4 560.9 L1031.3 563.3 L1033.5 568.0 L1034.0 569.5 L1033.3 572.4 L1031.2 576.2 L1032.8 580.6 L1031.8 584.2 L1029.8 584.9 L1029.7 588.5 L1028.3 592.2 L1029.0 595.7 L1027.4 600.1 L1027.9 601.4 L1023.4 602.7 L1024.4 605.3 L1022.3 609.6 L1019.4 612.9 L1016.9 613.4 L1016.7 615.7 L1016.3 619.0 L1012.5 621.0 L1012.4 624.8 L1011.0 628.1 L1010.1 631.7 L1008.2 631.9 L1006.1 634.5 L1003.2 638.1 L1004.0 639.8 L1001.1 643.0 L1001.0 646.2 L999.3 649.5 L997.1 652.3 L997.3 652.7 L995.0 656.8 L990.1 658.0 L989.3 661.6 L986.2 662.6 L985.4 665.4 L983.2 666.4 L979.9 667.7 L977.8 671.7 L975.2 673.5 L971.4 676.2 L971.5 678.5 L966.9 678.7 L963.0 679.9 L961.5 678.9 L955.9 680.0 L954.2 681.9 L950.8 680.3 L948.6 681.2 L945.4 682.4 L940.7 685.1 L936.8 683.9 L934.8 685.5 L932.6 685.1 L929.7 684.2 L926.4 682.7 L920.9 683.8 L917.8 684.2 L915.7 683.3 L913.1 683.2 L908.1 681.8 L906.5 682.6 L901.2 681.6 L900.4 679.6 L895.8 677.8 L892.4 677.9 L889.3 675.5 L890.5 673.7 L888.7 671.3 L889.2 667.0 L889.6 662.3 L889.1 660.1 L890.5 658.4 L890.3 654.3 L891.8 651.6 L896.0 650.5 L896.9 646.0 L898.0 644.4 L898.2 640.6 L895.6 638.1 L891.5 636.6 L890.9 634.8 L887.7 633.5 L884.7 631.7 L886.0 627.9 L887.5 623.7 L889.6 621.3 L890.3 618.1 L891.9 614.1 L892.1 612.4 L891.3 609.4 L889.8 607.0 L887.6 603.1 L885.1 602.3 L883.5 598.1 L879.4 597.4 L875.8 596.1 L874.7 591.8 L869.4 592.2 L866.2 588.7 L864.8 588.0 L861.4 585.3 L856.9 585.3 L852.5 582.0 L853.1 587.6 L852.5 588.3 L849.5 593.6 L848.0 596.6 L844.2 596.3 L841.1 597.9 L839.7 601.0 L836.9 601.5 L832.8 603.4 L832.1 607.6 L832.4 607.9 L829.6 613.8 L830.9 616.3 L830.4 618.6 L831.0 621.6 L831.3 623.4 L828.6 628.1 L824.0 628.9 L822.8 630.7 L817.7 631.3 L815.4 632.1 L813.3 636.0 L809.5 635.0 L806.1 632.4 L802.8 631.5 L800.9 631.3 L795.4 630.5 L793.8 628.9 L791.7 625.4 L789.7 624.6 L786.8 622.0 L784.7 618.6 L782.3 615.2 L778.8 614.2 L775.4 611.5 L776.0 609.5 L773.3 607.6 L773.2 602.8 L771.7 600.7 L769.9 597.2 L769.9 595.1 L767.5 592.6 L767.0 587.4 L764.4 586.8 L762.7 582.5 L761.6 578.7 L762.1 575.2 L761.2 574.6 L761.7 570.2 L762.5 567.2 L759.2 568.0 L755.2 566.8 L751.1 569.6 L745.9 570.8 L742.9 569.9 L740.9 566.7 L740.4 561.9 L739.4 559.7 L739.1 557.4 L739.6 553.5 L741.5 551.5 L741.3 549.1 L742.3 543.9 L743.2 541.1 L743.9 540.5 L745.6 538.1 L747.8 532.5 L749.6 532.4 L747.1 529.2 L748.6 524.6 L750.8 520.8 L749.8 519.8 L750.9 515.2 L752.1 513.2 L751.3 507.8 L748.7 507.0 L744.6 503.9 L742.9 502.2 L740.0 502.1 L737.3 499.0 L735.0 497.6 L732.9 496.1 L731.8 494.2 L729.2 488.7 L725.5 487.5 L725.9 483.4 L727.7 482.3 L731.9 483.2 L734.8 483.4 L738.5 482.0 L740.0 484.5 L745.3 484.2 L745.9 482.2 L750.1 484.0 L754.6 483.5 L757.7 484.0 L759.7 486.6 L763.6 489.0 L765.4 491.1 L767.3 493.3 L771.4 497.5 L771.6 497.8 L774.5 502.6 L774.9 504.6 L774.3 508.0 L776.0 511.6 L776.0 516.8 L775.4 518.7 L777.3 523.1 L776.8 524.6 L777.2 529.5 L778.7 530.2 L781.7 534.7 L783.6 537.4 L786.6 535.2 L787.5 535.7 L789.8 533.1 L794.6 532.9 L795.9 529.7 L798.8 530.2 L801.6 526.8 L806.0 527.8 L809.9 528.6 L813.2 526.5 L816.1 525.7 L817.8 525.5 L823.1 526.7 L824.2 524.6 L824.8 521.6 L825.1 518.6 L824.7 516.2 L826.9 513.1 L827.2 510.2 L825.3 507.8 L827.8 503.3 L825.3 501.1 L827.2 498.2 L828.8 495.5 L828.5 490.6 L827.9 489.9 L826.7 484.7 L832.1 486.3 L833.3 484.4 L836.9 483.8 L835.3 481.7 L830.8 482.8 L828.6 482.3 L825.0 480.5 L823.7 481.1 L819.0 480.1 L820.1 477.4 L821.2 473.1 L821.3 470.7 L821.8 467.8 L822.2 464.8 L823.0 460.7 L822.1 457.7 L824.3 454.0 L824.3 450.4 L826.6 450.4 L826.7 445.1 L827.5 443.2 L829.0 442.2 L829.6 437.4 L831.0 435.6 L834.4 431.2 L833.3 429.2 L836.3 427.8 L835.8 422.4 L837.5 419.8 L838.9 418.6 Z"/><path d="M627.9 213.9 L626.3 215.2 L622.6 218.2 L621.2 221.8 L620.1 223.8 L617.6 226.5 L614.5 228.4 L612.5 232.1 L612.8 235.4 L613.5 238.6 L614.7 241.5 L616.5 244.1 L615.2 249.8 L615.1 250.7 L615.1 255.7 L611.8 257.4 L610.7 260.0 L610.7 262.6 L608.9 264.8 L605.7 269.1 L604.3 270.6 L602.8 273.1 L600.3 274.5 L599.1 279.2 L598.1 281.4 L595.0 283.6 L594.1 287.3 L591.1 289.2 L590.0 292.8 L589.4 295.7 L585.9 299.4 L585.2 301.6 L585.8 304.4 L587.3 308.2 L587.7 310.6 L589.0 313.9 L588.1 316.4 L588.3 320.8 L587.0 323.9 L586.8 327.0 L586.8 332.1 L587.4 336.0 L587.1 339.9 L588.1 342.1 L585.7 345.2 L580.6 345.1 L579.1 346.8 L574.5 347.4 L571.1 350.4 L570.4 352.7 L566.3 351.9 L563.0 355.2 L566.0 357.8 L566.3 360.4 L568.6 363.6 L569.9 367.3 L573.1 368.4 L575.4 369.4 L579.0 368.8 L583.3 367.5 L587.4 365.6 L587.1 368.6 L588.8 372.6 L588.2 376.0 L589.6 377.4 L588.4 382.1 L587.4 384.2 L587.0 387.9 L585.4 389.6 L583.7 393.7 L583.0 395.8 L580.6 398.3 L582.5 401.7 L581.8 405.0 L584.9 408.1 L585.9 411.3 L586.0 414.0 L586.6 415.2 L588.2 418.7 L591.3 422.5 L592.0 425.3 L592.7 428.1 L595.7 430.7 L596.3 433.6 L598.2 437.2 L600.7 435.1 L604.0 435.8 L608.1 434.9 L611.4 433.5 L610.1 436.7 L612.0 438.9 L613.3 442.2 L613.1 445.2 L615.7 447.3 L615.1 450.9 L615.6 454.2 L618.6 456.1 L622.2 456.3 L624.3 456.5 L628.3 458.1 L630.1 455.7 L634.4 455.2 L635.6 453.0 L639.6 451.2 L642.2 450.4 L645.6 448.7 L647.7 446.7 L650.6 445.2 L650.4 448.9 L650.3 452.1 L650.5 456.7 L650.9 459.2 L650.6 462.7 L649.2 466.4 L646.2 470.0 L645.8 471.6 L642.2 475.3 L642.3 478.1 L640.5 480.6 L637.1 481.0 L633.7 482.0 L630.7 482.8 L628.8 483.0 L624.4 483.9 L623.3 485.3 L618.2 486.8 L617.2 487.5 L612.7 486.6 L609.3 484.5 L607.4 485.5 L602.5 485.0 L598.8 483.0 L595.5 482.0 L592.6 482.6 L589.7 480.7 L586.1 480.3 L585.5 478.8 L581.4 476.7 L580.1 473.8 L577.8 472.1 L576.2 469.4 L573.5 467.1 L571.2 464.6 L568.4 462.6 L566.8 459.8 L564.9 458.4 L562.4 457.1 L560.2 455.2 L556.6 452.7 L554.6 451.7 L552.8 448.4 L548.5 446.5 L546.2 444.5 L543.6 443.2 L541.5 442.4 L540.3 441.2 L538.8 438.8 L536.3 435.3 L532.2 435.6 L530.4 432.0 L528.7 430.7 L526.7 427.8 L524.5 424.6 L523.9 424.1 L523.4 421.0 L521.8 417.4 L518.8 416.1 L518.1 412.8 L515.2 409.1 L514.8 407.7 L514.2 405.1 L513.0 400.5 L514.3 398.3 L513.4 392.7 L513.7 389.9 L514.5 386.2 L516.1 384.2 L516.9 381.1 L520.4 378.6 L520.2 374.9 L521.3 372.7 L524.0 368.5 L525.3 366.5 L527.3 363.7 L528.7 361.4 L532.3 359.0 L533.0 357.0 L534.2 354.6 L536.2 352.1 L538.6 349.9 L541.9 347.5 L542.4 346.1 L544.7 343.2 L547.4 339.6 L549.5 337.2 L550.6 336.4 L554.5 333.5 L554.6 330.5 L557.0 328.9 L559.8 328.3 L563.7 330.4 L566.3 331.0"/><path d="M947.3 161.4 L950.4 164.0 L951.7 165.0 L953.9 167.3 L957.3 169.3 L959.2 171.8 L961.0 174.5 L962.7 178.2 L961.6 181.0 L962.4 185.6 L964.3 188.9 L966.6 191.6 L969.1 194.6 L970.0 197.5 L972.8 200.2 L973.3 202.6 L973.3 205.6 L973.6 208.0 L975.0 212.4 L975.7 215.2 L975.2 218.4 L976.6 221.3 L979.5 223.3 L981.3 227.0 L984.3 227.9 L988.0 228.7 L989.9 229.9 L993.1 230.4 L995.9 231.6 L998.6 233.1 L1003.3 233.6 L1005.8 235.6 L1007.3 235.0 L1011.8 237.4 L1014.4 237.0 L1016.9 239.4 L1020.7 240.2 L1022.3 241.3 L1025.7 240.9 L1028.2 241.4 L1032.2 240.8 L1034.5 240.5 L1038.2 240.3 L1040.8 240.5 L1043.8 239.5 L1046.5 240.2 L1049.4 239.2 L1052.4 240.0 L1056.4 239.7 L1058.4 239.4 L1062.0 237.5 L1064.4 238.2 L1067.6 235.6 L1071.4 236.8 L1074.4 237.1 L1078.4 238.4 L1081.1 238.0 L1085.5 239.9 L1088.9 239.4 L1090.0 235.7 L1089.5 232.6 L1092.0 229.7 L1093.7 230.8 L1097.9 231.2 L1100.3 232.6 L1102.6 233.7 L1105.5 235.1 L1108.1 236.4 L1111.2 238.3 L1115.2 238.1 L1118.5 239.7 L1120.9 241.6 L1123.6 242.3 L1126.8 243.2 L1130.6 244.4 L1131.6 241.2 L1132.1 238.3"/><path d="M1131.3 238.7 L1129.7 237.4 L1126.2 234.2 L1124.4 233.2 L1120.8 231.4 L1118.2 229.8 L1115.0 226.8 L1113.8 225.3 L1109.8 224.3 L1107.8 221.2 L1104.9 220.4 L1101.3 218.7 L1098.4 216.4 L1095.5 214.4 L1094.4 213.1 L1091.6 211.5 L1088.0 210.6 L1085.3 207.4 L1082.3 206.8 L1078.6 204.2 L1077.1 203.5 L1072.9 201.9 L1070.1 201.0 L1067.9 198.1 L1065.6 196.6 L1061.7 194.9 L1059.8 193.6 L1056.5 192.0 L1053.6 191.7 L1050.8 189.7 L1047.9 188.2 L1045.2 186.7 L1042.0 186.1 L1039.9 186.7 L1035.3 184.3 L1033.7 184.4 L1029.4 183.8 L1028.3 182.4 L1024.2 181.9 L1022.5 180.5 L1018.3 179.5 L1016.0 179.3 L1012.4 178.3 L1009.0 177.3 L1008.0 177.1 L1003.6 176.9 L1000.8 174.6 L997.1 173.6 L994.5 172.9 L992.9 172.0 L988.6 171.8 L987.0 170.3 L983.7 169.6 L980.3 169.2 L978.1 168.6 L974.3 167.9 L971.0 166.1 L969.2 165.6 L965.4 164.4 L962.3 164.2 L957.5 164.1 L954.6 162.2 L950.7 161.0 L947.8 161.0" stroke-width="1" opacity="0.55"/><path d="M1130.4 270.3 L1134.4 269.1 L1136.9 266.3 L1140.7 265.3 L1143.2 263.7 L1146.1 265.2 L1148.4 265.7 L1152.4 267.3 L1154.1 269.3 L1157.4 269.6 L1160.0 272.4 L1162.2 274.4 L1164.9 275.8 L1167.6 277.6 L1171.8 279.8 L1174.5 281.8 L1176.7 284.5 L1177.2 286.7 L1177.4 290.9 L1177.2 293.5 L1175.1 293.9 L1170.8 293.6 L1167.7 293.9 L1164.9 292.5 L1162.3 292.3 L1158.2 292.0 L1155.8 291.9 L1152.2 291.6 L1149.0 292.3 L1145.9 291.7 L1143.3 289.6 L1141.0 287.0 L1138.4 285.1 L1136.5 284.2 L1132.8 280.8 L1131.3 279.4 L1130.2 276.5 L1131.7 273.0 Z"/><path d="M1108.4 877.3 L1105.7 876.8 L1103.0 877.7 L1100.0 878.0 L1096.5 877.9 L1094.4 878.4 L1091.3 879.7 L1088.7 880.4 L1084.5 879.3 L1082.5 880.4 L1078.4 880.9 L1076.7 881.6 L1072.4 880.9 L1069.0 882.6 L1066.4 882.5 L1064.1 882.6 L1061.1 883.5 L1058.2 882.8 L1054.2 883.6 L1052.8 883.3 L1049.4 884.7 L1045.3 884.2 L1043.4 885.1 L1039.8 885.6 L1036.2 886.4 L1035.8 883.2 L1034.0 881.0 L1033.6 877.6 L1030.8 874.0 L1029.6 871.0 L1029.3 869.1 L1028.8 866.7 L1030.0 863.4 L1030.7 860.1 L1030.5 857.6 L1030.1 853.9 L1032.0 850.4 L1032.2 846.7 L1031.7 843.8 L1032.1 841.6 L1031.9 837.8 L1033.7 834.6 L1033.9 833.0 L1036.3 828.0 L1037.9 825.3 L1038.7 823.5 L1041.3 819.9 L1038.6 818.1 L1036.1 815.2 L1034.3 814.5 L1031.2 811.8 L1029.2 809.9 L1030.8 808.5 L1033.8 804.8 L1034.3 803.8 L1037.9 801.5 L1039.3 801.4 L1043.2 804.4 L1045.8 805.2 L1048.9 806.0 L1052.2 806.9 L1053.8 809.3 L1058.4 810.6 L1060.3 808.7 L1064.2 807.4 L1066.7 807.6 L1070.9 807.0 L1072.8 805.5 L1076.0 805.3 L1080.0 803.0 L1082.9 805.4 L1084.1 805.1 L1087.5 805.8 L1090.3 806.5 L1094.4 807.9 L1094.7 805.9 L1097.7 802.0 L1099.2 800.3 L1100.1 796.2 L1103.4 797.2 L1106.8 796.8 L1108.3 796.2 L1111.2 794.4 L1115.1 794.4 L1118.1 794.4 L1121.5 793.7 L1123.5 790.7 L1124.4 789.0 L1128.4 785.9 L1130.7 783.4 L1131.6 782.7 L1134.4 780.2 L1135.1 776.8 L1136.3 774.9 L1137.5 771.1 L1140.4 769.0 L1140.5 766.3 L1143.8 763.7 L1144.0 760.3 L1146.0 757.8 L1147.0 754.7 L1149.2 753.4 L1150.5 750.4 L1151.6 748.4 L1153.1 745.5 L1154.0 742.3 L1156.9 739.1 L1156.8 735.3 L1159.5 734.0 L1159.2 729.8 L1161.6 727.7 L1161.1 724.1 L1162.8 720.2 L1164.8 718.0 L1165.1 715.5 L1166.5 711.5 L1167.6 708.4 L1171.1 706.1 L1173.7 704.2 L1175.3 702.0 L1177.3 697.7 L1180.3 695.1 L1183.9 697.1 L1186.0 695.5 L1190.2 696.1 L1193.3 696.7 L1196.2 697.7 L1197.8 696.8 L1201.5 696.7 L1205.6 696.9 L1207.3 697.0 L1210.2 698.4 L1213.4 698.2 L1215.3 701.6 L1218.0 704.0"/><path d="M922.9 831.0 L926.6 829.6 L930.2 828.5 L933.8 827.1 L934.5 830.8 L935.8 834.6 L934.9 837.6 L933.6 841.1 L931.8 843.9 L931.0 846.5 L928.9 849.1 L928.1 851.8 L925.1 853.6 L922.6 855.9 L920.0 857.3 L917.7 859.6 L914.8 860.5 L912.9 863.7 L910.1 865.8 L906.9 867.9 L904.4 870.6 L901.6 873.2 L898.2 876.5 L895.3 877.0 L892.4 877.0 L889.3 877.0 L886.1 877.0 L882.5 876.6 L879.7 876.9 L876.9 877.0 L879.8 879.2 L882.2 881.7 L885.5 884.3 L888.0 885.3 L890.4 885.6 L893.1 886.6 L895.8 888.1 L899.6 888.6 L902.2 890.4 L905.3 889.7 L908.1 889.8 L910.7 889.5 L909.4 887.4 L907.3 883.6 L905.9 880.5 L908.6 878.8 L911.2 875.7 L913.3 873.5 L916.6 871.8 L919.0 868.6 L920.6 866.5 L922.3 863.8 L924.5 862.1 L926.2 859.7 L928.7 856.8 L929.9 854.1 L932.2 852.3 L932.8 848.3 L932.7 844.7 L933.0 841.6 L933.2 838.0 L934.5 834.8 L930.3 833.7 L926.6 832.4 Z"/><path d="M800.4 489.5 L803.9 489.2 L806.6 487.5 L809.7 487.3 L811.9 489.6 L814.9 491.2 L817.0 493.9 L816.4 497.6 L815.5 499.4 L816.0 502.9 L814.6 505.8 L812.8 509.0 L810.7 510.7 L808.8 508.4 L806.9 506.1 L803.8 502.6 L803.7 500.3 L801.9 496.8 L802.2 493.4 Z"/><path d="M724.3 496.5 L727.7 497.2 L731.0 496.6 L733.4 495.8 L737.5 495.4 L740.7 495.6 L742.8 495.5 L746.4 496.9 L748.2 499.1 L752.5 500.5 L753.0 502.5 L751.8 505.4 L753.5 508.4 L752.5 511.2 L750.3 514.8 L748.8 518.5 L747.4 516.9 L746.0 514.0 L745.6 510.9 L744.1 508.4 L741.1 505.9 L737.7 504.3 L734.8 503.8 L730.9 503.3 L727.0 505.5 L725.9 501.3 Z"/><path d="M1218.4 704.6 L1217.5 707.3 L1216.8 711.5 L1216.1 713.0 L1215.5 716.5 L1215.2 719.8 L1214.2 723.2 L1214.1 726.9 L1213.4 729.1 L1212.6 733.1 L1212.2 736.5 L1212.2 738.8 L1210.0 742.5 L1210.5 744.8 L1209.5 747.6 L1209.2 751.7 L1208.2 754.9 L1206.3 757.1 L1206.5 760.6 L1204.8 762.3 L1204.3 765.2 L1203.4 768.0 L1201.9 772.0 L1200.2 775.0 L1200.0 777.7 L1199.8 781.7 L1198.8 783.5 L1196.1 786.8 L1195.2 790.4 L1194.1 792.0 L1192.7 795.4 L1192.1 798.3 L1189.8 801.5 L1187.9 803.3 L1187.7 807.2 L1185.1 808.6 L1184.5 812.5 L1183.0 815.0" stroke-width="0.9" opacity="0.6"/><path d="M565.6 331.4 L565.0 333.6 L562.7 336.8 L562.3 338.8 L560.2 340.9 L557.7 343.7 L557.3 345.7 L556.2 348.7 L553.5 350.9 L553.5 354.9 L551.8 357.2 L547.2 358.2 L545.2 359.2 L543.2 361.2 L538.7 363.6 L535.7 365.4 L533.5 366.1 L530.4 367.5 L527.2 368.1 L525.6 370.0 L522.6 371.4 L522.1 375.8 L520.9 378.5 L519.7 381.5 L518.0 384.0 L518.6 386.4 L517.9 390.8 L516.1 392.7 L515.4 395.8 L515.6 398.8 L512.9 401.2 L513.4 406.0 L510.2 406.3 L507.4 408.2 L503.9 409.2 L501.8 410.6 L498.2 411.0 L495.7 413.9 L495.7 416.2 L495.6 418.2 L497.8 421.1 L501.9 421.7 L504.4 423.9 L507.5 425.9 L509.1 427.5 L512.9 428.2 L515.4 429.5 L517.1 430.5 L520.8 431.8 L521.8 434.6 L525.9 435.5 L528.7 436.1 L530.2 438.1 L533.3 439.4 L535.3 441.3 L539.7 444.1 L542.1 444.7 L543.9 447.2 L547.1 448.3 L548.9 448.8 L553.2 451.5 L556.0 452.7 L557.9 454.2 L561.6 454.7 L563.8 455.8 L567.2 456.4 L569.9 459.4 L571.4 459.8 L575.5 461.5 L578.3 461.4 L580.8 463.9 L585.0 463.0 L586.6 463.7 L589.7 465.2 L593.2 466.8 L597.4 466.1 L600.4 467.3 L603.5 467.9 L606.1 468.6 L609.8 470.4 L613.1 469.9 L616.4 472.3 L619.5 473.0 L621.0 473.1 L624.1 474.5 L627.4 475.2 L630.5 476.0 L633.6 475.5 L636.8 476.8 L640.0 478.0" stroke-width="1"/><path d="M525.7 339.4 L527.9 341.5 L531.8 340.7 L536.2 341.8 L539.0 339.6 L541.4 337.7 L543.2 336.7 L545.6 334.7 L548.0 331.3 L550.6 330.1 L553.0 328.8 L557.2 328.8 L560.7 328.4 L559.6 331.2 L558.0 334.5 L556.2 338.2 L555.1 341.0 L555.0 344.0 L552.6 347.4 L552.3 349.5 L548.2 350.9 L545.0 352.4 L542.6 352.7 L539.4 353.8 L537.0 354.1 L533.0 355.4 L529.8 356.3 L527.1 356.9 L526.3 360.0 L524.3 363.8 L523.8 365.9 L522.8 369.7 L522.0 372.0" stroke-width="1"/><path d="M963.7 188.3 L995.6 186.0 L997.9 201.9 L1034.3 211.0 L1066.1 220.1 L1068.4 236.0" stroke-width="1"/><path d="M995.6 186.0 L1005.0 177.0" stroke-width="1"/><ellipse cx="1038" cy="231" rx="6" ry="3" stroke-width="1.6"/><path d="M715 355 L722 353 L731 353 M719 408 L725 403" stroke-width="1.8"/><path d="M759 345 l1 0 M763 347 l1 0 M767 350 l1 0 M769 355 l1 0 M770 360 l1 0 M768 363 l1 0 M701 365 l1.5 0" stroke-width="1.8"/><path d="M867 549 V590" stroke-width="1.5"/><path d="M724.8 485.6 L722.8 485.2 L721.9 483.3 L720.2 481.3 L718.9 480.1 L717.3 478.8 L715.8 476.9 L713.1 474.9 L712.4 473.5 L711.5 472.2 L709.9 470.5 L709.1 468.6 L709.7 465.5 L708.8 464.4 L707.1 462.3 L706.4 460.7 L706.6 458.8 L704.9 455.7 L705.0 454.2 L703.6 452.6 L704.0 449.7 L702.1 448.3 L701.9 446.3 L703.2 443.8 L703.7 441.4 L705.7 440.4 L706.9 438.4 L707.7 440.6 L708.6 441.7 L708.4 443.3 L708.9 446.6 L710.9 448.4 L710.4 450.3 L711.1 452.6 L712.6 454.4 L713.2 455.9 L714.0 458.7 L713.5 459.9 L714.7 462.3 L714.7 463.9 L716.0 465.6 L715.3 468.3 L715.8 470.6 L716.4 472.7 L716.9 474.6 L717.9 476.4 L717.5 477.5 L718.6 479.1 L721.1 480.5 L721.8 482.9 L723.0 484.1 Z" stroke-width="1.2"/></g></g></svg>
<svg width="1922" height="1055" style="position:absolute;left:0;top:0;pointer-events:none"><rect x="228.5" y="64.5" width="31" height="29.5" rx="3" fill="#dcdcdc" stroke="#b5b5b5"/><g transform="translate(17.0 67.0) scale(1.0)"><path d="M5.5 2.5 H14.5 L18.5 6.5 V21.5 H5.5Z" fill="#fff" stroke="#6f6f6f" stroke-width="1"/><path d="M14.5 2.5 V6.5 H18.5" fill="none" stroke="#6f6f6f" stroke-width="0.8"/></g><g transform="translate(50.0 67.0) scale(1.0)"><path d="M2 5 H9 L11 7 H19 V9 H6 L3 20 H2Z" fill="#fcd74f" stroke="#c9a21f" stroke-width="0.8"/><path d="M6 10 H23 L20 20 H2.5Z" fill="#fcd74f" stroke="#c9a21f" stroke-width="0.8"/></g><g transform="translate(83.0 67.0) scale(1.0)"><rect x="2.5" y="2.5" width="19" height="19" rx="2" fill="#6b9bd2" stroke="#3d6ea8" stroke-width="0.8"/><rect x="5.5" y="3.5" width="13" height="7" fill="#e9e9e9"/><path d="M7 5.5H17M7 7.5H17" stroke="#555" stroke-width="0.7"/><rect x="6.5" y="14" width="11" height="6.5" fill="#eee"/><rect x="8" y="15.5" width="2" height="3.5" fill="#3d6ea8"/></g><g transform="translate(116.0 67.0) scale(1.0)"><path d="M3.5 2.5 H15 L19 6.5 V20 H3.5Z" fill="#fff" stroke="#777" stroke-width="0.9"/><rect x="8" y="5" width="9" height="13" fill="none" stroke="#a9c4ea" stroke-width="0.8"/><path d="M4 3 H11 V6 H7 V22 H4Z" fill="#f4d03f" stroke="#c9a21f" stroke-width="0.6"/><rect x="12" y="13" width="10" height="10" rx="1.5" fill="#c9a00e"/><circle cx="17.0" cy="18.0" r="2.4" fill="none" stroke="#fff" stroke-width="1.2"/><path d="M17.0 14.5 V21.5 M13.5 18.0 H20.5 M14.3 15.3 L19.7 20.7 M19.7 15.3 L14.3 20.7" stroke="#fff" stroke-width="0.8"/></g><g transform="translate(149.0 67.0) scale(1.0)"><path d="M2.5 3.5 H17 L21 7.5 V20.5 H2.5Z" fill="#fff" stroke="#777" stroke-width="0.9"/><rect x="5" y="6" width="13" height="11" fill="none" stroke="#a9c4ea" stroke-width="0.8"/><path d="M9 8 A3.5 3.5 0 1 0 12 12 L20 21" fill="none" stroke="#8a8a8a" stroke-width="2.2"/><path d="M13 13 L20 21" stroke="#e8d27a" stroke-width="2"/></g><g transform="translate(182.0 67.0) scale(1.0)"><circle cx="7" cy="6.5" r="4.5" fill="#d4622a"/><path d="M15 10 L22 3" stroke="#4d7fc0" stroke-width="2.2"/><rect x="2.5" y="13" width="9" height="9" fill="#8fbf8f" stroke="#5b8f5b" stroke-width="0.6"/><text x="14" y="22" font-family="Liberation Sans" font-size="10" fill="#333">a</text></g><g transform="translate(232.0 67.0) scale(1.0)"><path d="M7 21 L3.5 13.5 Q3 11.5 5 12 L7 14 V4.5 Q8.2 3 9.4 4.5 V11 V3.2 Q10.6 1.7 11.8 3.2 V11 V4 Q13 2.6 14.2 4 V11.5 V6 Q15.4 4.8 16.6 6 V15 Q16.5 19 14.5 21Z" fill="#fff" stroke="#222" stroke-width="1"/></g><g transform="translate(264.0 67.0) scale(1.0)"><rect x="3.5" y="4.5" width="13" height="13" fill="#fcd74f" stroke="#c9a21f" stroke-width="0.8"/><path d="M11 1.5 L14.5 5 H12.5 V9.5 H17 V7.5 L20.5 11 L17 14.5 V12.5 H12.5 V17 H14.5 L11 20.5 L7.5 17 H9.5 V12.5 H5 V14.5 L1.5 11 L5 7.5 V9.5 H9.5 V5 H7.5Z" fill="#6b9bd2" stroke="#3d6ea8" stroke-width="0.6"/></g><g transform="translate(297.0 67.0) scale(1.0)"><path d="M9.45 14.55 L3 21" stroke="#333" stroke-width="3.6" stroke-linecap="round"/><path d="M8.149999999999999 15.850000000000001 L3.2 20.8" stroke="#fcd74f" stroke-width="2.4" stroke-linecap="butt"/><circle cx="14" cy="10" r="6.5" fill="#f2f2f2" stroke="#6a6a6a" stroke-width="1.1"/><path d="M14 6.5 V13.5 M10.5 10 H17.5" stroke="#6b9bd2" stroke-width="2"/></g><g transform="translate(330.0 67.0) scale(1.0)"><path d="M9.45 14.55 L3 21" stroke="#333" stroke-width="3.6" stroke-linecap="round"/><path d="M8.149999999999999 15.850000000000001 L3.2 20.8" stroke="#fcd74f" stroke-width="2.4" stroke-linecap="butt"/><circle cx="14" cy="10" r="6.5" fill="#f2f2f2" stroke="#6a6a6a" stroke-width="1.1"/><path d="M10.5 10 H17.5" stroke="#6b9bd2" stroke-width="2"/></g><g transform="translate(363.0 67.0) scale(1.0)"><path d="M5 2 H11 L9 4 L11 6 L9 8 L7 6 L5 8Z M23 2 V8 L21 6 L19 8 L17 6 L19 4 L17 2Z M23 20 H17 L19 18 L17 16 L19 14 L21 16 L23 14Z" fill="#6b9bd2"/><path d="M9.66 14.34 L3 21" stroke="#333" stroke-width="3.6" stroke-linecap="round"/><path d="M8.36 15.64 L3.2 20.8" stroke="#fcd74f" stroke-width="2.4" stroke-linecap="butt"/><circle cx="14" cy="10" r="6.2" fill="#e8e8e8" stroke="#999" stroke-width="1.1"/></g><g transform="translate(396.0 67.0) scale(1.0)"><rect x="2" y="3" width="10" height="12" fill="#fcd74f" stroke="#c9a21f" stroke-width="0.6"/><path d="M10.24 14.26 L3 21" stroke="#333" stroke-width="3.6" stroke-linecap="round"/><path d="M8.94 15.56 L3.2 20.8" stroke="#fcd74f" stroke-width="2.4" stroke-linecap="butt"/><circle cx="15" cy="9.5" r="6.8" fill="#ecebe2" stroke="#6a6a6a" stroke-width="1.1"/></g><g transform="translate(429.0 67.0) scale(1.0)"><rect x="2" y="3" width="10" height="12" fill="#eee" stroke="#aaa" stroke-width="0.6"/><path d="M10.24 14.26 L3 21" stroke="#333" stroke-width="3.6" stroke-linecap="round"/><path d="M8.94 15.56 L3.2 20.8" stroke="#fcd74f" stroke-width="2.4" stroke-linecap="butt"/><circle cx="15" cy="9.5" r="6.8" fill="#efefef" stroke="#6a6a6a" stroke-width="1.1"/></g><g transform="translate(462.0 67.0) scale(1.0)"><g opacity="0.45"><rect x="2" y="3" width="8" height="9" fill="#eee" stroke="#aaa" stroke-width="0.6"/><path d="M10.45 13.55 L3 21" stroke="#bbb" stroke-width="3.6" stroke-linecap="round"/><path d="M9.149999999999999 14.850000000000001 L3.2 20.8" stroke="#d9d7d0" stroke-width="2.4" stroke-linecap="butt"/><circle cx="15" cy="9" r="6.5" fill="#f2f2f2" stroke="#999" stroke-width="1.1"/><text x="10" y="12" font-family="Liberation Sans" font-weight="bold" font-size="7" fill="#888">1:1</text></g></g><g transform="translate(495.0 67.0) scale(1.0)"><path d="M7.45 13.55 L3 21" stroke="#333" stroke-width="3.6" stroke-linecap="round"/><path d="M6.15 14.850000000000001 L3.2 20.8" stroke="#fcd74f" stroke-width="2.4" stroke-linecap="butt"/><circle cx="12" cy="9" r="6.5" fill="#f3f3f3" stroke="#6a6a6a" stroke-width="1.1"/><rect x="14" y="12" width="9" height="10" fill="#6b9bd2" stroke="#3d6ea8" stroke-width="0.5"/><path d="M20.5 14 L16.5 17 L20.5 20" fill="none" stroke="#fff" stroke-width="1.6"/></g><g transform="translate(528.0 67.0) scale(1.0)"><g opacity="0.4"><path d="M7.45 13.55 L3 21" stroke="#aaa" stroke-width="3.6" stroke-linecap="round"/><path d="M6.15 14.850000000000001 L3.2 20.8" stroke="#ccc" stroke-width="2.4" stroke-linecap="butt"/><circle cx="12" cy="9" r="6.5" fill="#f3f3f3" stroke="#999" stroke-width="1.1"/><rect x="14" y="12" width="9" height="10" fill="#bbb"/><path d="M16.5 14 L20.5 17 L16.5 20" fill="none" stroke="#fff" stroke-width="1.6"/></g></g><g transform="translate(562.0 67.0) scale(1.0)"><path d="M4 3 H19 V19 H6 Q3 19 3 17 V5 Q3 3 4 3Z" fill="#e6e6e6" stroke="#999" stroke-width="0.8"/><path d="M3 5 Q4.5 3 6 5 V19" fill="none" stroke="#aaa" stroke-width="0.7"/><rect x="13" y="13" width="10" height="10" rx="1.5" fill="#c9a00e"/><circle cx="18.0" cy="18.0" r="2.4" fill="none" stroke="#fff" stroke-width="1.2"/><path d="M18.0 14.5 V21.5 M14.5 18.0 H21.5 M15.3 15.3 L20.7 20.7 M20.7 15.3 L15.3 20.7" stroke="#fff" stroke-width="0.8"/></g><g transform="translate(596.0 67.0) scale(1.0)"><path d="M6 2.5 H14 V20 L10 16 L6 20Z" fill="#6b9bd2" stroke="#3d6ea8" stroke-width="0.8"/><rect x="12" y="13" width="10" height="10" rx="1.5" fill="#c9a00e"/><circle cx="17.0" cy="18.0" r="2.4" fill="none" stroke="#fff" stroke-width="1.2"/><path d="M17.0 14.5 V21.5 M13.5 18.0 H20.5 M14.3 15.3 L19.7 20.7 M19.7 15.3 L14.3 20.7" stroke="#fff" stroke-width="0.8"/></g><g transform="translate(628.0 67.0) scale(1.0)"><path d="M4 3 H20 V20 H6 Q3 20 3 18 V5 Q3 3 4 3Z" fill="#e6e6e6" stroke="#999" stroke-width="0.8"/><path d="M13 2 H17 V9 L15 7.5 L13 9Z" fill="#6b9bd2" stroke="#3d6ea8" stroke-width="0.6"/></g><g transform="translate(661.0 67.0) scale(1.0)"><circle cx="12" cy="12" r="9.5" fill="#fbfbfb" stroke="#555" stroke-width="1.1"/><circle cx="12" cy="12" r="8" fill="none" stroke="#5b8ad0" stroke-width="0.9" stroke-dasharray="0.9 3.29"/><path d="M12 5.5 V12 L16 15" fill="none" stroke="#555" stroke-width="1.1"/></g><g transform="translate(694.0 67.0) scale(1.0)"><path d="M4 12 A8 8 0 0 1 18 6 L20 4 V11 H13 L15.5 8.5 A5 5 0 0 0 7 12Z" fill="#4f8fd6" stroke="#3a73b8" stroke-width="0.5"/><path d="M20 12 A8 8 0 0 1 6 18 L4 20 V13 H11 L8.5 15.5 A5 5 0 0 0 17 12Z" fill="#4f8fd6" stroke="#3a73b8" stroke-width="0.5"/></g><g transform="translate(742.0 67.0) scale(1.0)"><circle cx="9" cy="9" r="7.5" fill="#6b9bd2" stroke="#5585c0" stroke-width="0.5"/><text x="6.5" y="14" font-family="Liberation Serif" font-style="italic" font-weight="bold" font-size="12" fill="#fff">i</text><path d="M12 11 V22 L14.5 19.5 L17 23 L19 22 L16.5 18.5 H20Z" fill="#fff" stroke="#333" stroke-width="0.8"/></g><g transform="translate(776.0 67.0) scale(1.0)"><rect x="3.5" y="3.5" width="17" height="17" fill="#fff" stroke="#6b9bd2" stroke-width="1"/><rect x="3.5" y="3.5" width="17" height="3.5" fill="#dce8f6" stroke="#6b9bd2" stroke-width="0.8"/><path d="M6 10H10M12 10H18M6 13H10M12 13H18M6 16H10M12 16H18" stroke="#6b9bd2" stroke-width="1"/></g><g transform="translate(808.0 67.0) scale(1.0)"><path d="M4 3 V21 M20 3 V21 M3 21 H21" stroke="#444" stroke-width="1.2"/><path d="M4 6H20M4 12H20M4 17H20" stroke="#666" stroke-width="0.8"/><path d="M8 6l1.8-1.8l1.8 1.8l-1.8 1.8z M13 6l1.8-1.8l1.8 1.8l-1.8 1.8z" fill="#fff" stroke="#d33" stroke-width="1"/><path d="M8 12l1.8-1.8l1.8 1.8l-1.8 1.8z M11.6 12l1.8-1.8l1.8 1.8l-1.8 1.8z" fill="#fff" stroke="#3a3" stroke-width="1"/><path d="M7 17l1.8-1.8l1.8 1.8l-1.8 1.8z M11 17l1.8-1.8l1.8 1.8l-1.8 1.8z M15 17l1.8-1.8l1.8 1.8l-1.8 1.8z" fill="#fff" stroke="#48c" stroke-width="1"/></g><g transform="translate(841.0 67.0) scale(1.0)"><path d="M22.00 12.00 L21.81 13.95 L18.47 14.68 L17.82 15.89 L19.07 19.07 L17.56 20.31 L14.68 18.47 L13.37 18.87 L12.00 22.00 L10.05 21.81 L9.32 18.47 L8.11 17.82 L4.93 19.07 L3.69 17.56 L5.53 14.68 L5.13 13.37 L2.00 12.00 L2.19 10.05 L5.53 9.32 L6.18 8.11 L4.93 4.93 L6.44 3.69 L9.32 5.53 L10.63 5.13 L12.00 2.00 L13.95 2.19 L14.68 5.53 L15.89 6.18 L19.07 4.93 L20.31 6.44 L18.47 9.32 L18.87 10.63Z" fill="#7aa4dc" stroke="#4a78b8" stroke-width="0.7"/><circle cx="12" cy="12" r="3.3" fill="#fff" stroke="#4a78b8" stroke-width="0.7"/></g><g transform="translate(874.0 67.0) scale(1.0)"><path d="M5 3 H19 V7 H17.5 L17 5.5 H10 L14.5 12 L10 18.5 H17 L17.5 17 H19 V21 H5 V19.5 L11 12 L5 4.5Z" fill="#a018a8"/></g><g transform="translate(908.0 67.0) scale(1.0)"><path d="M4 5 H20 M4 3 V7 M20 3 V7" stroke="#2a4f7f" stroke-width="1.3"/><rect x="2.5" y="11" width="19" height="8" fill="#bdbdbd" stroke="#777" stroke-width="0.8"/><path d="M5 11V14M8 11V15M11 11V14M14 11V15M17 11V14M20 11V15" stroke="#f3f3f3" stroke-width="1"/></g><g transform="translate(952.0 67.0) scale(1.0)"><path d="M3 3.5 Q3 1.5 5 1.5 H19 Q21 1.5 21 3.5 V10.5 Q21 12.5 19 12.5 H8 L5 17 L6 12.5 H5 Q3 12.5 3 10.5Z" fill="#fbe983" stroke="#cfb22a" stroke-width="0.8"/><circle cx="5.5" cy="18" r="3" fill="#6aaa6a" stroke="#3f7f3f" stroke-width="0.6"/></g><g transform="translate(985.0 67.0) scale(1.0)"><g opacity="0.35"><path d="M19.00 10.00 L18.83 11.76 L16.01 12.49 L15.40 13.61 L16.36 16.36 L15.00 17.48 L12.49 16.01 L11.27 16.38 L10.00 19.00 L8.24 18.83 L7.51 16.01 L6.39 15.40 L3.64 16.36 L2.52 15.00 L3.99 12.49 L3.62 11.27 L1.00 10.00 L1.17 8.24 L3.99 7.51 L4.60 6.39 L3.64 3.64 L5.00 2.52 L7.51 3.99 L8.73 3.62 L10.00 1.00 L11.76 1.17 L12.49 3.99 L13.61 4.60 L16.36 3.64 L17.48 5.00 L16.01 7.51 L16.38 8.73Z" fill="#ddd" stroke="#999" stroke-width="0.8"/><circle cx="10" cy="10" r="4" fill="#eee" stroke="#999" stroke-width="0.7"/><path d="M13 12 V22 L15.5 19.5 L18 23 L19.5 22 L17 18.5 H20Z" fill="#fff" stroke="#777" stroke-width="0.8"/></g></g><g transform="translate(1033.0 67.0) scale(1.0)"><path d="M2.5 2.5 H21.5 V15.5 H9 L4 21 L5.5 15.5 H2.5Z" fill="#e9eef3" stroke="#555" stroke-width="0.9"/><text x="7" y="13.5" font-family="Liberation Serif" font-weight="bold" font-size="12" fill="#333">T</text></g><g transform="translate(1092.0 67.0) scale(1.0)"><g opacity="0.38"><path d="M3 21 L5 13 L15 3 L18 6 L8 16Z M7 22 L9 14 L19 4 L22 7 L12 17Z" fill="#c7c2b5" stroke="#9a958a" stroke-width="0.6"/></g></g><g transform="translate(1124.0 67.0) scale(1.0)"><path d="M6 18.5 L4.5 23 L9 21.5Z" fill="#444"/><path d="M6.2 18.3 L18 3 L22 6 L10 21.3Z" fill="#f2dc3b" stroke="#5a5a2a" stroke-width="0.8"/><path d="M17 4.5 L21 7.5" stroke="#888" stroke-width="1.5"/></g><g transform="translate(1157.0 67.0) scale(1.0)"><g opacity="0.38"><rect x="2.5" y="2.5" width="17" height="17" rx="2" fill="#bbb" stroke="#999" stroke-width="0.8"/><rect x="5" y="3.5" width="11" height="6" fill="#eee"/><rect x="6" y="13" width="9" height="6" fill="#eee"/><path d="M13 21 L21 12 L23 14 L15 22Z" fill="#bbb" stroke="#888" stroke-width="0.5"/></g></g><g transform="translate(1191.0 67.0) scale(1.0)"><g opacity="0.38"><path d="M3 3 L9 14 L14 7 H20" fill="none" stroke="#888" stroke-width="1"/><rect x="2" y="2" width="3" height="3" fill="#fff" stroke="#888" stroke-width="0.7"/><rect x="8" y="13" width="3" height="3" fill="#fff" stroke="#888" stroke-width="0.7"/><rect x="13" y="6" width="3" height="3" fill="#fff" stroke="#888" stroke-width="0.7"/><rect x="19" y="6" width="3" height="3" fill="#fff" stroke="#888" stroke-width="0.7"/><rect x="13" y="13" width="10" height="10" rx="1.5" fill="#999"/><circle cx="18.0" cy="18.0" r="2.4" fill="none" stroke="#fff" stroke-width="1.2"/><path d="M18.0 14.5 V21.5 M14.5 18.0 H21.5 M15.3 15.3 L20.7 20.7 M20.7 15.3 L15.3 20.7" stroke="#fff" stroke-width="0.8"/></g></g><g transform="translate(1226.0 67.0) scale(1.0)"><g opacity="0.38"><path d="M2 22 L7 5 H20" fill="none" stroke="#777" stroke-width="0.8"/><circle cx="6" cy="5" r="2.5" fill="none" stroke="#777" stroke-width="0.8"/><path d="M10 12 L19 21 M12 21 L21 12" stroke="#8a8a7a" stroke-width="3"/></g></g><g transform="translate(1268.0 67.0) scale(1.0)"><g opacity="0.38"><rect x="2" y="4" width="18" height="5" fill="#aaa"/><rect x="2" y="10" width="18" height="5" fill="#aaa"/><rect x="2" y="16" width="18" height="5" fill="#aaa"/><path d="M11 21 L20 3 L23 4.5 L14 22Z" fill="#ddd" stroke="#888" stroke-width="0.6"/></g></g><g transform="translate(1301.0 67.0) scale(1.0)"><g opacity="0.38"><rect x="3" y="4" width="18" height="3" fill="#a88"/><path d="M5 8 H19 L18 22 H6Z" fill="#b99" /><path d="M9 10 V20 M12 10 V20 M15 10 V20" stroke="#eee" stroke-width="1.3"/></g></g><g transform="translate(1334.0 67.0) scale(1.0)"><g opacity="0.38"><path d="M2 6 L18 15 M2 14 L18 7" stroke="#777" stroke-width="1.3"/><circle cx="20" cy="15.5" r="2.8" fill="none" stroke="#777" stroke-width="1.3"/><circle cx="20" cy="6.5" r="2.8" fill="none" stroke="#777" stroke-width="1.3"/></g></g><g transform="translate(1367.0 67.0) scale(1.0)"><g opacity="0.38"><path d="M9 2.5 H17 L20.5 6 V17.5 H9Z" fill="#fff" stroke="#777" stroke-width="0.9"/><path d="M3.5 6.5 H12 L15.5 10 V21.5 H3.5Z" fill="#fff" stroke="#777" stroke-width="0.9"/><path d="M6 12H13M6 14.5H13M6 17H13" stroke="#999" stroke-width="0.8"/></g></g><g transform="translate(1400.0 67.0) scale(1.0)"><g opacity="0.38"><rect x="4.5" y="3.5" width="15" height="18" fill="#ddd" stroke="#777" stroke-width="0.9"/><rect x="6.5" y="6.5" width="11" height="13" fill="#fff" stroke="#999" stroke-width="0.6"/><rect x="9" y="2" width="6" height="3" fill="#aaa"/><path d="M8.5 10H15.5M8.5 12.5H15.5M8.5 15H15.5" stroke="#999" stroke-width="0.8"/></g></g><g transform="translate(1433.0 67.0) scale(1.0)"><g opacity="0.38"><path d="M3 10 L10 3 V7 Q20 7 20 15 Q20 20 15 21 Q17 18 16 15 Q14 12 10 12.5 V17Z" fill="#9a9080"/></g></g><g transform="translate(1466.0 67.0) scale(1.0)"><g opacity="0.38"><path d="M21 10 L14 3 V7 Q4 7 4 15 Q4 20 9 21 Q7 18 8 15 Q10 12 14 12.5 V17Z" fill="#9aa0a0"/></g></g><g transform="translate(1514.0 67.0) scale(1.0)"><path d="M5 6 H23 V17 H5 L1 11.5Z" fill="#fbde57" stroke="#c9a21f" stroke-width="1"/><text x="6" y="14.8" font-family="Liberation Sans" font-weight="bold" font-size="8.5" fill="#333">abc</text></g><g transform="translate(1548.0 67.0) scale(1.0)"><path d="M10 10 V2 A8 8 0 0 1 17.5 7.5Z" fill="#f0c020"/><path d="M10 10 L17.5 7.5 A8 8 0 0 1 10 18Z" fill="#d02a1a"/><path d="M10 10 V18 A8 8 0 0 1 2.5 7.5 A8 8 0 0 1 10 2Z" fill="#44a83a"/><rect x="8" y="16" width="3.5" height="6" fill="#f6c000"/><rect x="13" y="11" width="3.5" height="11" fill="#3aa83a"/><rect x="17.5" y="15" width="3.5" height="7" fill="#c01810"/></g><g transform="translate(1588.0 67.0) scale(1.0)"><path d="M5 3 H20 V14 H5 L1 8.5Z" fill="#bcd6f2" stroke="#3d78c8" stroke-width="1"/><text x="6" y="11.8" font-family="Liberation Sans" font-weight="bold" font-size="8.5" fill="#333">ab</text><path d="M17 8 V14" stroke="#999" stroke-width="1.6"/><circle cx="17" cy="17.5" r="3.8" fill="#b02a2a" stroke="#7a1a1a" stroke-width="0.5"/></g><g transform="translate(1621.0 67.0) scale(1.0)"><path d="M5 3 H22 V14 H5 L1 8.5Z" fill="#fff" stroke="#f01010" stroke-width="1"/><text x="6" y="11.8" font-family="Liberation Sans" font-weight="bold" font-size="8.5" fill="#f01010">abc</text></g><g transform="translate(1661.0 67.0) scale(1.0)"><g opacity="0.38"><path d="M5 3 H21 V14 H5 L1 8.5Z" fill="#d8d6cc" stroke="#aaa59a" stroke-width="1"/><text x="6" y="11.8" font-family="Liberation Sans" font-weight="bold" font-size="8.5" fill="#888">abc</text><path d="M17 8 V14" stroke="#999" stroke-width="1.6"/><circle cx="17" cy="17.5" r="3.8" fill="#bbb"/></g></g><g transform="translate(1694.0 67.0) scale(1.0)"><g opacity="0.38"><path d="M5 3 H21 V14 H5 L1 8.5Z" fill="#d8d6cc" stroke="#aaa59a" stroke-width="1"/><text x="6" y="11.8" font-family="Liberation Sans" font-weight="bold" font-size="8.5" fill="#888">abc</text><path d="M6 18 Q13 12 20 18 Q13 24 6 18Z" fill="#fff" stroke="#999" stroke-width="0.8"/><circle cx="13" cy="18" r="2" fill="#999"/></g></g><g transform="translate(1728.0 67.0) scale(1.0)"><g opacity="0.38"><path d="M5 3 H21 V14 H5 L1 8.5Z" fill="#d8d6cc" stroke="#aaa59a" stroke-width="1"/><text x="6" y="11.8" font-family="Liberation Sans" font-weight="bold" font-size="8.5" fill="#888">abc</text><rect x="13" y="13" width="10" height="10" rx="2" fill="#aaa"/><path d="M15 18 H20 M18 15.5 L20.5 18 L18 20.5" stroke="#fff" stroke-width="1.5" fill="none"/></g></g><g transform="translate(1761.0 67.0) scale(1.0)"><g opacity="0.38"><path d="M5 3 H21 V14 H5 L1 8.5Z" fill="#d8d6cc" stroke="#aaa59a" stroke-width="1"/><text x="6" y="11.8" font-family="Liberation Sans" font-weight="bold" font-size="8.5" fill="#888">abc</text><rect x="13" y="13" width="10" height="10" rx="2" fill="#aaa"/><circle cx="18" cy="18" r="2.8" fill="none" stroke="#fff" stroke-width="1.3"/></g></g><g transform="translate(1794.0 67.0) scale(1.0)"><g opacity="0.38"><path d="M5 3 H21 V14 H5 L1 8.5Z" fill="#d8d6cc" stroke="#aaa59a" stroke-width="1"/><text x="6" y="11.8" font-family="Liberation Sans" font-weight="bold" font-size="8.5" fill="#888">abc</text><rect x="13" y="13" width="10" height="10" rx="2" fill="#aaa"/><path d="M15 21 L21 15" stroke="#fff" stroke-width="1.6"/></g></g><g transform="translate(1843.0 67.0) scale(1.0)"><circle cx="12" cy="11" r="10" fill="#4d7fc4" stroke="#2f5f9f" stroke-width="0.8"/><path d="M2.5 11 H21.5 M12 1 V21 M5 5 Q12 9 19 5 M5 17 Q12 13 19 17" stroke="#dfe8f5" stroke-width="0.8" fill="none"/><ellipse cx="12" cy="11" rx="4.5" ry="10" fill="none" stroke="#dfe8f5" stroke-width="0.8"/><circle cx="7.5" cy="19.5" r="3.5" fill="#111"/><circle cx="16.5" cy="19.5" r="3.5" fill="#111"/><rect x="9" y="15" width="6" height="3" fill="#111"/><circle cx="7.5" cy="19.5" r="1.6" fill="#fff"/><circle cx="16.5" cy="19.5" r="1.6" fill="#fff"/></g><path d="M936 77 H944 L940 81.5Z" fill="#555"/><path d="M1015 77 H1023 L1019 81.5Z" fill="#ccc"/><path d="M1060 77 H1068 L1064 81.5Z" fill="#555"/><path d="M1253 77 H1261 L1257 81.5Z" fill="#ccc"/><path d="M1110 89 H1118 L1114 93.5Z" fill="#bbb"/><rect x="6" y="71" width="1" height="1" fill="#c5c5c5"/><rect x="9" y="72.5" width="1" height="1" fill="#c5c5c5"/><rect x="6" y="74" width="1" height="1" fill="#c5c5c5"/><rect x="9" y="75.5" width="1" height="1" fill="#c5c5c5"/><rect x="6" y="77" width="1" height="1" fill="#c5c5c5"/><rect x="9" y="78.5" width="1" height="1" fill="#c5c5c5"/><rect x="6" y="80" width="1" height="1" fill="#c5c5c5"/><rect x="9" y="81.5" width="1" height="1" fill="#c5c5c5"/><rect x="6" y="83" width="1" height="1" fill="#c5c5c5"/><rect x="9" y="84.5" width="1" height="1" fill="#c5c5c5"/><rect x="6" y="86" width="1" height="1" fill="#c5c5c5"/><rect x="9" y="87.5" width="1" height="1" fill="#c5c5c5"/><rect x="222" y="71" width="1" height="1" fill="#c5c5c5"/><rect x="225" y="72.5" width="1" height="1" fill="#c5c5c5"/><rect x="222" y="74" width="1" height="1" fill="#c5c5c5"/><rect x="225" y="75.5" width="1" height="1" fill="#c5c5c5"/><rect x="222" y="77" width="1" height="1" fill="#c5c5c5"/><rect x="225" y="78.5" width="1" height="1" fill="#c5c5c5"/><rect x="222" y="80" width="1" height="1" fill="#c5c5c5"/><rect x="225" y="81.5" width="1" height="1" fill="#c5c5c5"/><rect x="222" y="83" width="1" height="1" fill="#c5c5c5"/><rect x="225" y="84.5" width="1" height="1" fill="#c5c5c5"/><rect x="222" y="86" width="1" height="1" fill="#c5c5c5"/><rect x="225" y="87.5" width="1" height="1" fill="#c5c5c5"/><rect x="728" y="71" width="1" height="1" fill="#c5c5c5"/><rect x="731" y="72.5" width="1" height="1" fill="#c5c5c5"/><rect x="728" y="74" width="1" height="1" fill="#c5c5c5"/><rect x="731" y="75.5" width="1" height="1" fill="#c5c5c5"/><rect x="728" y="77" width="1" height="1" fill="#c5c5c5"/><rect x="731" y="78.5" width="1" height="1" fill="#c5c5c5"/><rect x="728" y="80" width="1" height="1" fill="#c5c5c5"/><rect x="731" y="81.5" width="1" height="1" fill="#c5c5c5"/><rect x="728" y="83" width="1" height="1" fill="#c5c5c5"/><rect x="731" y="84.5" width="1" height="1" fill="#c5c5c5"/><rect x="728" y="86" width="1" height="1" fill="#c5c5c5"/><rect x="731" y="87.5" width="1" height="1" fill="#c5c5c5"/><rect x="1082" y="71" width="1" height="1" fill="#c5c5c5"/><rect x="1085" y="72.5" width="1" height="1" fill="#c5c5c5"/><rect x="1082" y="74" width="1" height="1" fill="#c5c5c5"/><rect x="1085" y="75.5" width="1" height="1" fill="#c5c5c5"/><rect x="1082" y="77" width="1" height="1" fill="#c5c5c5"/><rect x="1085" y="78.5" width="1" height="1" fill="#c5c5c5"/><rect x="1082" y="80" width="1" height="1" fill="#c5c5c5"/><rect x="1085" y="81.5" width="1" height="1" fill="#c5c5c5"/><rect x="1082" y="83" width="1" height="1" fill="#c5c5c5"/><rect x="1085" y="84.5" width="1" height="1" fill="#c5c5c5"/><rect x="1082" y="86" width="1" height="1" fill="#c5c5c5"/><rect x="1085" y="87.5" width="1" height="1" fill="#c5c5c5"/><rect x="1505" y="71" width="1" height="1" fill="#c5c5c5"/><rect x="1508" y="72.5" width="1" height="1" fill="#c5c5c5"/><rect x="1505" y="74" width="1" height="1" fill="#c5c5c5"/><rect x="1508" y="75.5" width="1" height="1" fill="#c5c5c5"/><rect x="1505" y="77" width="1" height="1" fill="#c5c5c5"/><rect x="1508" y="78.5" width="1" height="1" fill="#c5c5c5"/><rect x="1505" y="80" width="1" height="1" fill="#c5c5c5"/><rect x="1508" y="81.5" width="1" height="1" fill="#c5c5c5"/><rect x="1505" y="83" width="1" height="1" fill="#c5c5c5"/><rect x="1508" y="84.5" width="1" height="1" fill="#c5c5c5"/><rect x="1505" y="86" width="1" height="1" fill="#c5c5c5"/><rect x="1508" y="87.5" width="1" height="1" fill="#c5c5c5"/><rect x="1833" y="71" width="1" height="1" fill="#c5c5c5"/><rect x="1836" y="72.5" width="1" height="1" fill="#c5c5c5"/><rect x="1833" y="74" width="1" height="1" fill="#c5c5c5"/><rect x="1836" y="75.5" width="1" height="1" fill="#c5c5c5"/><rect x="1833" y="77" width="1" height="1" fill="#c5c5c5"/><rect x="1836" y="78.5" width="1" height="1" fill="#c5c5c5"/><rect x="1833" y="80" width="1" height="1" fill="#c5c5c5"/><rect x="1836" y="81.5" width="1" height="1" fill="#c5c5c5"/><rect x="1833" y="83" width="1" height="1" fill="#c5c5c5"/><rect x="1836" y="84.5" width="1" height="1" fill="#c5c5c5"/><rect x="1833" y="86" width="1" height="1" fill="#c5c5c5"/><rect x="1836" y="87.5" width="1" height="1" fill="#c5c5c5"/><rect x="1581" y="67" width="1" height="24" fill="#cfcfcf"/><rect x="1654" y="67" width="1" height="24" fill="#cfcfcf"/><rect x="6" y="101" width="1" height="1" fill="#c5c5c5"/><rect x="9" y="102.5" width="1" height="1" fill="#c5c5c5"/><rect x="6" y="104" width="1" height="1" fill="#c5c5c5"/><rect x="9" y="105.5" width="1" height="1" fill="#c5c5c5"/><rect x="6" y="107" width="1" height="1" fill="#c5c5c5"/><rect x="9" y="108.5" width="1" height="1" fill="#c5c5c5"/><rect x="6" y="110" width="1" height="1" fill="#c5c5c5"/><rect x="9" y="111.5" width="1" height="1" fill="#c5c5c5"/><rect x="1830" y="20" width="10" height="2" fill="#f0f0f0"/><rect x="1864.5" y="15.5" width="7" height="7" fill="none" stroke="#f0f0f0" stroke-width="2"/><circle cx="1902" cy="19" r="10" fill="#f6822a"/><path d="M1898 15 L1906 23 M1906 15 L1898 23" stroke="#fff" stroke-width="2"/><g transform="translate(15.0 131.0) scale(1.0)"><path d="M2 9 L10 6 L14 19 L5 22Z" fill="#d9622b" stroke="#a84a1f" stroke-width="0.5"/><path d="M5 6 L13 4 L15 16 L7 18Z" fill="#f3c22a" stroke="#c99a1a" stroke-width="0.5"/><path d="M9 3 L21 5 L19 16 L8 14Z" fill="#6a9ad2" stroke="#3a68a0" stroke-width="0.7"/><rect x="13" y="13" width="10" height="10" rx="2" fill="#4a9a4a" stroke="#2f7a2f" stroke-width="0.6"/><path d="M18.0 15 V21 M15 18.0 H21" stroke="#fff" stroke-width="2.2"/></g><g transform="translate(15.0 164.0) scale(1.0)"><path d="M2 12 L10 17 V23 L2 18Z" fill="#d9b21a" stroke="#333" stroke-width="0.7"/><path d="M10 17 L21 12 V18 L10 23Z" fill="#f7ef7a" stroke="#333" stroke-width="0.7"/><circle cx="12" cy="10" r="7" fill="#7aa4dc" stroke="#3a68a0" stroke-width="0.6"/><path d="M8 7 Q11 6 10 10 Q8 12 7 9Z M13 6 Q17 7 15 11 Q13 13 13 9Z" fill="#3a68a0"/><path d="M2 12 L12 10 L21 12 L10 17Z" fill="#f3d23a" stroke="#333" stroke-width="0.6"/><rect x="14" y="15" width="9" height="9" rx="1.5" fill="#c9a00e"/><circle cx="18.5" cy="19.5" r="2.16" fill="none" stroke="#fff" stroke-width="1.2"/><path d="M18.5 16.5 V22.5 M15.5 19.5 H21.5 M16.3 17.3 L20.7 21.7 M20.7 17.3 L16.3 21.7" stroke="#fff" stroke-width="0.8"/></g><g transform="translate(15.0 196.0) scale(1.0)"><path d="M3 5 L9 19 L15 5 L21 5" fill="none" stroke="#333" stroke-width="1.2"/><circle cx="3" cy="5" r="1.8" fill="#fff" stroke="#333" stroke-width="0.8"/><circle cx="9" cy="19" r="1.8" fill="#fff" stroke="#333" stroke-width="0.8"/><circle cx="15" cy="5" r="1.8" fill="#fff" stroke="#333" stroke-width="0.8"/><circle cx="21" cy="5" r="1.8" fill="#fff" stroke="#333" stroke-width="0.8"/><rect x="14" y="14" width="9" height="9" rx="1.5" fill="#c9a00e"/><circle cx="18.5" cy="18.5" r="2.16" fill="none" stroke="#fff" stroke-width="1.2"/><path d="M18.5 15.5 V21.5 M15.5 18.5 H21.5 M16.3 16.3 L20.7 20.7 M20.7 16.3 L16.3 20.7" stroke="#fff" stroke-width="0.8"/></g><g transform="translate(15.0 227.0) scale(1.0)"><path d="M2 23 Q6 10 20 2 Q20 10 12 17 Q7 21 2 23Z" fill="#7fa8d8" stroke="#4a6e98" stroke-width="0.7"/><path d="M3 22 Q10 12 18 5" fill="none" stroke="#3a5e88" stroke-width="0.7"/><rect x="14" y="14" width="9" height="9" rx="1.5" fill="#c9a00e"/><circle cx="18.5" cy="18.5" r="2.16" fill="none" stroke="#fff" stroke-width="1.2"/><path d="M18.5 15.5 V21.5 M15.5 18.5 H21.5 M16.3 16.3 L20.7 20.7 M20.7 16.3 L16.3 20.7" stroke="#fff" stroke-width="0.8"/></g><g transform="translate(15.0 260.0) scale(1.0)"><rect x="3" y="7" width="17" height="10" rx="1.5" fill="#6a9ad2" stroke="#2f5f9f" stroke-width="0.8"/><path d="M5 7V4M8 7V4M11 7V4M14 7V4M17 7V4M5 17V20M8 17V20M11 17V20M14 17V20M17 17V20" stroke="#333" stroke-width="1"/><rect x="14" y="14" width="9" height="9" rx="1.5" fill="#c9a00e"/><circle cx="18.5" cy="18.5" r="2.16" fill="none" stroke="#fff" stroke-width="1.2"/><path d="M18.5 15.5 V21.5 M15.5 18.5 H21.5 M16.3 16.3 L20.7 20.7 M20.7 16.3 L16.3 20.7" stroke="#fff" stroke-width="0.8"/></g><g transform="translate(15.0 299.0) scale(1.0)"><rect x="2.5" y="3.5" width="19" height="18" rx="2" fill="#a8c0de" stroke="#5a7aa8" stroke-width="0.9"/><path d="M4 5 L9 17 L14 5 L20 5" fill="none" stroke="#333" stroke-width="1"/><circle cx="9" cy="17" r="1.5" fill="#fff" stroke="#333" stroke-width="0.6"/><circle cx="14" cy="5" r="1.5" fill="#fff" stroke="#333" stroke-width="0.6"/><rect x="14" y="14" width="9" height="9" rx="1.5" fill="#c9a00e"/><circle cx="18.5" cy="18.5" r="2.16" fill="none" stroke="#fff" stroke-width="1.2"/><path d="M18.5 15.5 V21.5 M15.5 18.5 H21.5 M16.3 16.3 L20.7 20.7 M20.7 16.3 L16.3 20.7" stroke="#fff" stroke-width="0.8"/></g><g transform="translate(15.0 354.0) scale(1.0)"><path d="M4 2 V21 H22" fill="none" stroke="#666" stroke-width="1"/><path d="M5 17 Q9 16 12 11 Q15 6 20 5" fill="none" stroke="#c02aa0" stroke-width="1.3"/><path d="M5 19 Q11 18 14 14 Q17 13 20 14" fill="none" stroke="#2aa0b0" stroke-width="1.3"/></g><g transform="translate(10.0 402.0) scale(1.0)"><rect x="2.5" y="3.5" width="18" height="16" fill="#e6e6e6" stroke="#333" stroke-width="0.7" stroke-dasharray="1.5 1"/><rect x="3" y="4" width="11" height="11" fill="#fbdc4a" stroke="#c9a21f" stroke-width="0.6"/><path d="M12 11 V23 L14.5 20.5 L17 24 L19 23 L16.5 19.5 H20Z" fill="#fff" stroke="#333" stroke-width="0.8"/></g><g transform="translate(10.0 434.0) scale(1.0)"><rect x="9" y="9" width="13" height="12" fill="#fbdc4a" stroke="#c9a21f" stroke-width="0.7"/><path d="M11.5 4.5 Q8 1.5 4.5 3.5 Q2 6 6.5 8.5 Q1.5 9.5 2 13 Q3.5 17 10 15" fill="none" stroke="#5a2a7a" stroke-width="1.7"/></g><g transform="translate(10.0 466.0) scale(1.0)"><rect x="2.5" y="2.5" width="12" height="12" fill="#fbdc4a" stroke="#c9a21f" stroke-width="0.7"/><rect x="7" y="7" width="12" height="12" fill="#fbdc4a" stroke="#c9a21f" stroke-width="0.7"/><circle cx="17.5" cy="18" r="5" fill="#d42a2a" stroke="#a01a1a" stroke-width="0.5"/><path d="M15 20.5 L20 15.5" stroke="#fff" stroke-width="1.4"/><circle cx="17.5" cy="18" r="2.8" fill="none" stroke="#fff" stroke-width="1.1"/></g><g transform="translate(15.0 514.0) scale(1.0)"><path d="M12 2 Q6 2 6 5 V8 H12 V9 H4 Q1 9 1 13 Q1 17 4 17 H6 V14 Q6 11 9 11 H15 Q17 11 17 9 V5 Q17 2 12 2Z" fill="#3a73b0"/><path d="M12 22 Q18 22 18 19 V16 H12 V15 H20 Q23 15 23 11 Q23 7 20 7 H18 V10 Q18 13 15 13 H9 Q7 13 7 15 V19 Q7 22 12 22Z" fill="#f7d23a"/><path d="M17 18 L21 20 L17 22" fill="none" stroke="#555" stroke-width="1"/></g><g transform="translate(15.0 546.0) scale(1.0)"><path d="M3 3 V21 H22" fill="none" stroke="#111" stroke-width="1.6"/><path d="M4 20 L4 12 L10 13Z" fill="#f7ef6a"/><path d="M3 3 H20 V20" fill="none" stroke="#333" stroke-width="0.7" stroke-dasharray="1 1"/><path d="M4 20 L19 5" stroke="#1a3ad8" stroke-width="1.8"/><path d="M14 4 H20 V10" fill="none" stroke="#1a3ad8" stroke-width="1.8"/></g><g transform="translate(15.0 578.0) scale(1.0)"><circle cx="12" cy="12" r="10" fill="#1a2040" stroke="#2a4a9a" stroke-width="1.3"/><path d="M4 13 Q6 8 11 10 Q14 14 10 19 Q6 19 4 13Z" fill="#3a8ac0"/><circle cx="16" cy="7" r="2.5" fill="#ddd" opacity="0.6"/></g><g transform="translate(15.0 610.0) scale(1.0)"><path d="M3 8 Q8 4 13 7 Q18 5 21 8 L17 11 Q12 9 7 11Z" fill="#2ac0c0" stroke="#111" stroke-width="0.8"/><path d="M3 13 Q8 9 13 12 Q18 10 21 13 L17 16 Q12 14 7 16Z" fill="#f0f02a" stroke="#111" stroke-width="0.8"/><path d="M3 18 Q8 14 13 17 Q18 15 21 18 L17 21 Q12 19 7 21Z" fill="#2ac02a" stroke="#111" stroke-width="0.8"/><path d="M12 2 V23" stroke="#e02a2a" stroke-width="1" stroke-dasharray="2 1.5"/></g><g transform="translate(15.0 642.0) scale(1.0)"><path d="M16 3 Q22 4 20 13 Q17 21 7 22 Q2 21 5 15 Q8 12 9 8 Q11 3 16 3Z" fill="#d8e84a" stroke="#222" stroke-width="1"/><path d="M15 6 Q19 7 17 13 Q15 18 9 19 Q7 17 9 14 Q11 11 12 9 Q13 6 15 6Z" fill="#7aa4dc"/><circle cx="15" cy="9" r="2" fill="#1a2a9a"/></g><g transform="translate(15.0 689.0) scale(1.0)"><rect x="4" y="3" width="17" height="19" fill="#6a9ad2" stroke="#333" stroke-width="0.6"/><rect x="4" y="3" width="4" height="19" fill="#2a3a4a"/><text x="11" y="17" font-family="Liberation Sans" font-size="12" fill="#fff">?</text></g><g transform="translate(15.0 737.0) scale(1.0)"><rect x="3" y="3" width="18" height="17" fill="#fff" stroke="#7aa4dc" stroke-width="0.9"/><rect x="3" y="3" width="18" height="3" fill="#f4d27a"/><path d="M3 9H21M3 13H21M3 17H21M8 3V20M14 3V20" stroke="#9ac0e8" stroke-width="0.6"/><path d="M9 14 Q12 9 18 11 L19 9 L21 14 L16 14 L17.5 12.5 Q13 11 11 15Z M22 16 Q18 21 12 19 L11 21 L9 16 L14 16 L12.5 17.5 Q17 19 19 15Z" fill="#6ab82a" stroke="#3a8a1a" stroke-width="0.4"/></g><path d="M39 412 H47 L43 416.5Z" fill="#555"/><path d="M39 444 H47 L43 448.5Z" fill="#555"/><path d="M39 476 H47 L43 480.5Z" fill="#555"/><rect x="11" y="292" width="32" height="1" fill="#d0d0d0"/><rect x="11" y="331" width="32" height="1" fill="#d0d0d0"/><rect x="20" y="122" width="1" height="1" fill="#c5c5c5"/><rect x="21.5" y="125" width="1" height="1" fill="#c5c5c5"/><rect x="23" y="122" width="1" height="1" fill="#c5c5c5"/><rect x="24.5" y="125" width="1" height="1" fill="#c5c5c5"/><rect x="26" y="122" width="1" height="1" fill="#c5c5c5"/><rect x="27.5" y="125" width="1" height="1" fill="#c5c5c5"/><rect x="29" y="122" width="1" height="1" fill="#c5c5c5"/><rect x="30.5" y="125" width="1" height="1" fill="#c5c5c5"/><rect x="32" y="122" width="1" height="1" fill="#c5c5c5"/><rect x="33.5" y="125" width="1" height="1" fill="#c5c5c5"/><rect x="35" y="122" width="1" height="1" fill="#c5c5c5"/><rect x="36.5" y="125" width="1" height="1" fill="#c5c5c5"/><rect x="20" y="345" width="1" height="1" fill="#c5c5c5"/><rect x="21.5" y="348" width="1" height="1" fill="#c5c5c5"/><rect x="23" y="345" width="1" height="1" fill="#c5c5c5"/><rect x="24.5" y="348" width="1" height="1" fill="#c5c5c5"/><rect x="26" y="345" width="1" height="1" fill="#c5c5c5"/><rect x="27.5" y="348" width="1" height="1" fill="#c5c5c5"/><rect x="29" y="345" width="1" height="1" fill="#c5c5c5"/><rect x="30.5" y="348" width="1" height="1" fill="#c5c5c5"/><rect x="32" y="345" width="1" height="1" fill="#c5c5c5"/><rect x="33.5" y="348" width="1" height="1" fill="#c5c5c5"/><rect x="35" y="345" width="1" height="1" fill="#c5c5c5"/><rect x="36.5" y="348" width="1" height="1" fill="#c5c5c5"/><rect x="20" y="393" width="1" height="1" fill="#c5c5c5"/><rect x="21.5" y="396" width="1" height="1" fill="#c5c5c5"/><rect x="23" y="393" width="1" height="1" fill="#c5c5c5"/><rect x="24.5" y="396" width="1" height="1" fill="#c5c5c5"/><rect x="26" y="393" width="1" height="1" fill="#c5c5c5"/><rect x="27.5" y="396" width="1" height="1" fill="#c5c5c5"/><rect x="29" y="393" width="1" height="1" fill="#c5c5c5"/><rect x="30.5" y="396" width="1" height="1" fill="#c5c5c5"/><rect x="32" y="393" width="1" height="1" fill="#c5c5c5"/><rect x="33.5" y="396" width="1" height="1" fill="#c5c5c5"/><rect x="35" y="393" width="1" height="1" fill="#c5c5c5"/><rect x="36.5" y="396" width="1" height="1" fill="#c5c5c5"/><rect x="20" y="504" width="1" height="1" fill="#c5c5c5"/><rect x="21.5" y="507" width="1" height="1" fill="#c5c5c5"/><rect x="23" y="504" width="1" height="1" fill="#c5c5c5"/><rect x="24.5" y="507" width="1" height="1" fill="#c5c5c5"/><rect x="26" y="504" width="1" height="1" fill="#c5c5c5"/><rect x="27.5" y="507" width="1" height="1" fill="#c5c5c5"/><rect x="29" y="504" width="1" height="1" fill="#c5c5c5"/><rect x="30.5" y="507" width="1" height="1" fill="#c5c5c5"/><rect x="32" y="504" width="1" height="1" fill="#c5c5c5"/><rect x="33.5" y="507" width="1" height="1" fill="#c5c5c5"/><rect x="35" y="504" width="1" height="1" fill="#c5c5c5"/><rect x="36.5" y="507" width="1" height="1" fill="#c5c5c5"/><rect x="20" y="680" width="1" height="1" fill="#c5c5c5"/><rect x="21.5" y="683" width="1" height="1" fill="#c5c5c5"/><rect x="23" y="680" width="1" height="1" fill="#c5c5c5"/><rect x="24.5" y="683" width="1" height="1" fill="#c5c5c5"/><rect x="26" y="680" width="1" height="1" fill="#c5c5c5"/><rect x="27.5" y="683" width="1" height="1" fill="#c5c5c5"/><rect x="29" y="680" width="1" height="1" fill="#c5c5c5"/><rect x="30.5" y="683" width="1" height="1" fill="#c5c5c5"/><rect x="32" y="680" width="1" height="1" fill="#c5c5c5"/><rect x="33.5" y="683" width="1" height="1" fill="#c5c5c5"/><rect x="35" y="680" width="1" height="1" fill="#c5c5c5"/><rect x="36.5" y="683" width="1" height="1" fill="#c5c5c5"/><rect x="20" y="729" width="1" height="1" fill="#c5c5c5"/><rect x="21.5" y="732" width="1" height="1" fill="#c5c5c5"/><rect x="23" y="729" width="1" height="1" fill="#c5c5c5"/><rect x="24.5" y="732" width="1" height="1" fill="#c5c5c5"/><rect x="26" y="729" width="1" height="1" fill="#c5c5c5"/><rect x="27.5" y="732" width="1" height="1" fill="#c5c5c5"/><rect x="29" y="729" width="1" height="1" fill="#c5c5c5"/><rect x="30.5" y="732" width="1" height="1" fill="#c5c5c5"/><rect x="32" y="729" width="1" height="1" fill="#c5c5c5"/><rect x="33.5" y="732" width="1" height="1" fill="#c5c5c5"/><rect x="35" y="729" width="1" height="1" fill="#c5c5c5"/><rect x="36.5" y="732" width="1" height="1" fill="#c5c5c5"/><g transform="translate(57.6 138.1) scale(0.95)"><path d="M3 10 L13 5 L16 9 L6 16Z" fill="#f0e23a"/><path d="M2 13 L12 8 L14 12 L4 18Z" fill="#6aa4e0"/><path d="M2 16 L11 11 L13 15 L5 20Z" fill="#e03a3a"/><path d="M16 14 L22 5" stroke="#c9922a" stroke-width="2.2"/><path d="M9 13 L16 12 L17 16 L11 20Z" fill="#d8ae6a" stroke="#a07a3a" stroke-width="0.6"/></g><g transform="translate(82.6 138.1) scale(0.95)"><path d="M2.5 9.5 V21.5 H14.5" fill="none" stroke="#888" stroke-width="0.9"/><path d="M5.5 6.5 V18.5 H17.5 V6.5Z" fill="none" stroke="#888" stroke-width="0.9"/><path d="M10 16 V3.5 Q12 1.5 14 3.5 V14" fill="none" stroke="#3a68a0" stroke-width="1.3"/><rect x="13" y="14" width="9" height="9" rx="2" fill="#4a9a4a"/><circle cx="17.5" cy="18.5" r="2.5" fill="#fff"/></g><g transform="translate(107.30000000000001 138.1) scale(0.95)"><path d="M2 11 Q12 2 22 11 Q12 20 2 11Z" fill="#fff" stroke="#999" stroke-width="0.8"/><circle cx="12" cy="10.5" r="4.3" fill="#6a9ad2" stroke="#3a68a0" stroke-width="0.5"/><circle cx="12" cy="10" r="1.6" fill="#111"/></g><g transform="translate(132.6 138.1) scale(0.95)"><path d="M2.5 4.5 H21.5 V6.5 L14 14 V22 L10 20 V14 L2.5 6.5Z" fill="#6a9ad2" stroke="#3a68a0" stroke-width="0.7"/><rect x="3" y="4" width="18" height="2.2" fill="#f4e23a"/></g><g transform="translate(157.6 138.1) scale(0.95)"><path d="M10.5 3.5 Q7 0.5 3.5 2.5 Q1 5 5.5 7.5 Q0.5 8.5 1 12 Q2.5 16 9 14" fill="none" stroke="#5a2a7a" stroke-width="1.7"/><path d="M11 14 H19 L18 23 H12Z" fill="#999" stroke="#777" stroke-width="0.5"/><path d="M13 16 V22 M16.5 16 V22" stroke="#ddd" stroke-width="1"/></g><g transform="translate(195.6 138.1) scale(0.95)"><path d="M3 3.5 H12 M4.5 3.5 V20 M3 20 H7" stroke="#888" stroke-width="0.8" fill="none"/><rect x="6" y="7" width="3" height="3" fill="none" stroke="#f08a10" stroke-width="1.2"/><rect x="6" y="15" width="3" height="3" fill="#f08a10"/><path d="M14 3 H18 V13 H21 L16 21 L11 13 H14Z" fill="#6a9ad2" stroke="#3a68a0" stroke-width="0.8"/></g><g transform="translate(220.6 138.1) scale(0.95)"><path d="M3 3.5 H12 M4.5 3.5 V20 M3 20 H7" stroke="#888" stroke-width="0.8" fill="none"/><rect x="6" y="7" width="3" height="3" fill="#f08a10"/><rect x="6" y="15" width="3" height="3" fill="none" stroke="#f08a10" stroke-width="1.2"/><path d="M14 21 H18 V11 H21 L16 3 L11 11 H14Z" fill="#6a9ad2" stroke="#3a68a0" stroke-width="0.8"/></g><g transform="translate(244.1 138.1) scale(0.95)"><rect x="3.5" y="3.5" width="14" height="14" fill="#fff" stroke="#777" stroke-width="1"/><rect x="14" y="15" width="8" height="6" rx="2.5" fill="#e83a3a"/><path d="M15.5 18 H20.5" stroke="#fff" stroke-width="1.4"/></g><path d="M122 154.5 H130 L126 159.0Z" fill="#444"/><path d="M183 148 H191 L187 152.5Z" fill="#444"/><g transform="translate(1882.04 131.04) scale(1.08)"><g opacity="0.75"><path d="M3 3 L21 21 H3Z" fill="#dedad2" stroke="#b3afa6" stroke-width="0.9"/><path d="M7 13 L12 18 H7Z" fill="#f2f2f2" stroke="#b3afa6" stroke-width="0.6"/><rect x="16" y="2" width="5" height="19" fill="#e9e6dc" stroke="#b3afa6" stroke-width="0.6"/></g></g><g transform="translate(1879.04 161.04) scale(1.08)"><g opacity="0.75"><path d="M3 3 L9 14 L13 7 H20" fill="none" stroke="#aaa" stroke-width="1"/><rect x="2" y="2" width="3" height="3" fill="#fff" stroke="#aaa" stroke-width="0.7"/><rect x="8" y="13" width="3" height="3" fill="#fff" stroke="#aaa" stroke-width="0.7"/><rect x="12" y="6" width="3" height="3" fill="#fff" stroke="#aaa" stroke-width="0.7"/><rect x="19" y="6" width="3" height="3" fill="#fff" stroke="#aaa" stroke-width="0.7"/><rect x="11" y="14" width="10" height="10" rx="1.5" fill="#c9c7bd"/><path d="M13 19.0 H19 M16.0 16 L19 19.0 L16.0 22" fill="none" stroke="#fff" stroke-width="1.4"/></g></g><g transform="translate(1882.04 194.64) scale(1.08)"><g opacity="0.75"><path transform="translate(1 1) scale(1.0)" d="M3 3 Q7 0 11 2 Q15 1 18 3 Q20 7 16 9 Q13 10 11 13 Q7 16 4 13 Q1 9 3 3Z" fill="#d3d3ce" stroke="#b8b8b2" stroke-width="0.8"/><rect x="14" y="14" width="9" height="9" rx="1.5" fill="#c9c7bd"/><circle cx="18.5" cy="18.5" r="2.3" fill="none" stroke="#fff" stroke-width="1.2"/></g></g><g transform="translate(1882.04 226.44) scale(1.08)"><g opacity="0.75"><circle cx="9" cy="9" r="7" fill="#ddd" stroke="#bbb" stroke-width="0.8"/><path d="M14 9 L20 12 V18 L14 21 L8 18 V12Z" fill="#ddd" stroke="#bbb" stroke-width="0.8"/><path d="M9 9 L15 15" stroke="#aaa" stroke-width="1"/></g></g><g transform="translate(1882.04 258.24) scale(1.08)"><g opacity="0.75"><path transform="translate(1 1) scale(1.0)" d="M3 3 Q7 0 11 2 Q15 1 18 3 Q20 7 16 9 Q13 10 11 13 Q7 16 4 13 Q1 9 3 3Z" fill="#d3d3ce" stroke="#b8b8b2" stroke-width="0.8"/><ellipse cx="9" cy="7" rx="4" ry="2.5" fill="#eee" stroke="#bbb" stroke-width="0.7"/><rect x="14" y="14" width="9" height="9" rx="1.5" fill="#c9c7bd"/><circle cx="18.5" cy="18.5" r="2" fill="none" stroke="#fff" stroke-width="1"/></g></g><g transform="translate(1882.04 291.54) scale(1.08)"><g opacity="0.75"><path transform="translate(2 0) scale(0.95)" d="M3 3 Q7 0 11 2 Q15 1 18 3 Q20 7 16 9 Q13 10 11 13 Q7 16 4 13 Q1 9 3 3Z" fill="#d3d3ce" stroke="#b8b8b2" stroke-width="0.8"/><path d="M2 20 Q3 14 7 13 Q10 15 8 20 Q5 23 2 20Z" fill="#d3d3ce" stroke="#b8b8b2" stroke-width="0.8"/><rect x="14" y="14" width="9" height="9" rx="1.5" fill="#c9c7bd"/><circle cx="18.5" cy="18.5" r="2" fill="none" stroke="#fff" stroke-width="1"/></g></g><g transform="translate(1882.04 322.04) scale(1.08)"><g opacity="0.75"><path transform="translate(1 1) scale(1.0)" d="M3 3 Q7 0 11 2 Q15 1 18 3 Q20 7 16 9 Q13 10 11 13 Q7 16 4 13 Q1 9 3 3Z" fill="#d3d3ce" stroke="#b8b8b2" stroke-width="0.8"/><ellipse cx="9" cy="7" rx="4" ry="2.5" fill="#eee" stroke="#bbb" stroke-width="0.7"/><rect x="14" y="14" width="9" height="9" rx="1.5" fill="#c9c7bd"/><circle cx="18.5" cy="18.5" r="2" fill="none" stroke="#fff" stroke-width="1"/></g></g><g transform="translate(1882.04 353.74) scale(1.08)"><g opacity="0.75"><path transform="translate(1 1) scale(1.0)" d="M3 3 Q7 0 11 2 Q15 1 18 3 Q20 7 16 9 Q13 10 11 13 Q7 16 4 13 Q1 9 3 3Z" fill="#d3d3ce" stroke="#b8b8b2" stroke-width="0.8"/><rect x="14" y="14" width="9" height="9" rx="1.5" fill="#c9c7bd"/><path d="M16 16 L21 21 M21 16 L16 21" stroke="#fff" stroke-width="1.4"/></g></g><g transform="translate(1882.04 385.64000000000004) scale(1.08)"><g opacity="0.75"><path transform="translate(2 0) scale(0.95)" d="M3 3 Q7 0 11 2 Q15 1 18 3 Q20 7 16 9 Q13 10 11 13 Q7 16 4 13 Q1 9 3 3Z" fill="#d3d3ce" stroke="#b8b8b2" stroke-width="0.8"/><path d="M2 20 Q3 14 7 13 Q10 15 8 20 Q5 23 2 20Z" fill="#d3d3ce" stroke="#b8b8b2" stroke-width="0.8"/><rect x="14" y="14" width="9" height="9" rx="1.5" fill="#c9c7bd"/><path d="M16 16 L21 21 M21 16 L16 21" stroke="#fff" stroke-width="1.4"/></g></g><g transform="translate(1882.04 416.44) scale(1.08)"><g opacity="0.75"><path d="M3 4 Q10 1 19 3 Q23 8 17 12 Q12 14 10 21 Q5 21 4 14 Q2 9 3 4Z" fill="#d6dcd0" stroke="#b8bdb2" stroke-width="0.8"/></g></g><g transform="translate(1882.04 450.24) scale(1.08)"><g opacity="0.75"><path d="M4 17 Q1 12 7 8 Q12 3 18 4 Q23 6 20 12 Q16 17 10 20 Q6 21 4 17Z" fill="#d8ddd2" stroke="#b3b8ad" stroke-width="0.9"/><path d="M7 16 Q5 13 9 10 Q13 6 17 7 Q19 8 17 12 Q14 15 10 17Z" fill="none" stroke="#b3b8ad" stroke-width="0.8"/></g></g><g transform="translate(1882.04 482.54) scale(1.08)"><g opacity="0.75"><path d="M3 3 L9 14 L13 7 H20" fill="none" stroke="#aaa" stroke-width="1"/><rect x="2" y="2" width="3" height="3" fill="#fff" stroke="#aaa" stroke-width="0.7"/><rect x="8" y="13" width="3" height="3" fill="#fff" stroke="#aaa" stroke-width="0.7"/><rect x="12" y="6" width="3" height="3" fill="#fff" stroke="#aaa" stroke-width="0.7"/><rect x="19" y="6" width="3" height="3" fill="#fff" stroke="#aaa" stroke-width="0.7"/><rect x="13" y="13" width="10" height="10" rx="1.5" fill="#c9c7bd"/><circle cx="18.0" cy="18.0" r="2.3" fill="none" stroke="#fff" stroke-width="1.2"/></g></g><g transform="translate(1882.04 514.8399999999999) scale(1.08)"><g opacity="0.75"><path d="M11 2 V22 M3 11 H21" stroke="#aaa" stroke-width="1"/><rect x="9.5" y="9.5" width="3" height="3" fill="#fff" stroke="#aaa" stroke-width="0.7"/><rect x="16" y="3" width="6" height="6" fill="#ccc"/><rect x="2" y="15" width="6" height="6" fill="#ccc"/></g></g><g transform="translate(1882.04 547.14) scale(1.08)"><g opacity="0.75"><path d="M3 4 Q6 1 11 3 V12 Q6 14 3 11 Q1 8 3 4Z M13 3 Q18 1 21 4 Q23 8 21 11 Q18 14 13 12Z" fill="#d6d6d0" stroke="#b8b8b2" stroke-width="0.8"/><circle cx="9" cy="19" r="2.5" fill="none" stroke="#b08a8a" stroke-width="1"/><circle cx="15" cy="19" r="2.5" fill="none" stroke="#b08a8a" stroke-width="1"/><path d="M9.5 16.5 L13 8 M14.5 16.5 L11 8" stroke="#aaa" stroke-width="0.9"/></g></g><g transform="translate(1882.04 579.4399999999999) scale(1.08)"><g opacity="0.75"><path d="M3 4 Q6 1 11 3 V12 Q6 14 3 11 Q1 8 3 4Z M13 3 Q18 1 21 4 Q23 8 21 11 Q18 14 13 12Z" fill="#d6d6d0" stroke="#b8b8b2" stroke-width="0.8"/><circle cx="9" cy="19" r="2.5" fill="none" stroke="#b08a8a" stroke-width="1"/><circle cx="15" cy="19" r="2.5" fill="none" stroke="#b08a8a" stroke-width="1"/><path d="M9.5 16.5 L13 8 M14.5 16.5 L11 8" stroke="#aaa" stroke-width="0.9"/></g></g><g transform="translate(1882.04 607.3399999999999) scale(1.08)"><g opacity="0.75"><path d="M3 5 Q8 1 12 4 Q16 1 21 5 Q23 10 19 12 Q14 14 12 12 Q8 14 4 12 Q1 9 3 5Z" fill="#d6d6d0" stroke="#b8b8b2" stroke-width="0.8"/><path d="M10 7 H15 M10 10 H15" stroke="#999" stroke-width="0.8"/><path d="M6 13 Q7 19 13 22" fill="none" stroke="#888" stroke-width="0.9"/></g></g><g transform="translate(1882.04 641.14) scale(1.08)"><g opacity="0.75"><path d="M3 5 H21 M3 12 H21 M3 19 H21 M9 3 V21 M15 3 V21" stroke="#bbb" stroke-width="0.9"/><path d="M8 5 Q11 8 14 5 M8 12 Q11 15 14 12" fill="none" stroke="#999" stroke-width="0.8"/></g></g><g transform="translate(1879.04 676.4399999999999) scale(1.08)"><g opacity="0.75"><path d="M12 3 V14 L21 8Z" fill="#ddd" stroke="#bbb" stroke-width="0.8"/><path d="M7 22 L12 14 L17 22Z" fill="#fff" stroke="#bbb" stroke-width="0.8"/><path d="M9 6 Q3 10 5 17" fill="none" stroke="#aaa" stroke-width="1"/></g></g><path d="M1906.7 174 H1914.7 L1910.7 178.5Z" fill="#d0d0d0"/><path d="M1906.5 687.4 H1914.5 L1910.5 691.9Z" fill="#d0d0d0"/><rect x="1880" y="122" width="1" height="1" fill="#c5c5c5"/><rect x="1881.5" y="125" width="1" height="1" fill="#c5c5c5"/><rect x="1883" y="122" width="1" height="1" fill="#c5c5c5"/><rect x="1884.5" y="125" width="1" height="1" fill="#c5c5c5"/><rect x="1886" y="122" width="1" height="1" fill="#c5c5c5"/><rect x="1887.5" y="125" width="1" height="1" fill="#c5c5c5"/><rect x="1889" y="122" width="1" height="1" fill="#c5c5c5"/><rect x="1890.5" y="125" width="1" height="1" fill="#c5c5c5"/><rect x="1892" y="122" width="1" height="1" fill="#c5c5c5"/><rect x="1893.5" y="125" width="1" height="1" fill="#c5c5c5"/><rect x="1895" y="122" width="1" height="1" fill="#c5c5c5"/><rect x="1896.5" y="125" width="1" height="1" fill="#c5c5c5"/><rect x="1898" y="122" width="1" height="1" fill="#c5c5c5"/><rect x="1899.5" y="125" width="1" height="1" fill="#c5c5c5"/><rect x="1901" y="122" width="1" height="1" fill="#c5c5c5"/><rect x="1902.5" y="125" width="1" height="1" fill="#c5c5c5"/><rect x="1904" y="122" width="1" height="1" fill="#c5c5c5"/><rect x="1905.5" y="125" width="1" height="1" fill="#c5c5c5"/><g transform="translate(1397.6 171.6) scale(0.95)"><path d="M3 10 L13 5 L16 9 L6 16Z" fill="#f0e23a"/><path d="M2 13 L12 8 L14 12 L4 18Z" fill="#6aa4e0"/><path d="M2 16 L11 11 L13 15 L5 20Z" fill="#e03a3a"/><path d="M16 14 L22 5" stroke="#c9922a" stroke-width="2.2"/><path d="M9 13 L16 12 L17 16 L11 20Z" fill="#d8ae6a" stroke="#a07a3a" stroke-width="0.6"/></g><g transform="translate(1395.2 206.2) scale(0.9)"><path d="M5 6 H22 V17 H5 L1 11.5Z" fill="#fbde57" stroke="#c9a21f" stroke-width="1"/><text x="6" y="14.8" font-family="Liberation Sans" font-weight="bold" font-size="8.5" fill="#333">abc</text></g><g transform="translate(1395.2 237.2) scale(0.9)"><rect x="2" y="6" width="20" height="12" rx="6" fill="#fff"/><text x="4" y="15.5" font-family="Liberation Sans" font-weight="bold" font-size="10" fill="#333">abc</text></g><g transform="translate(1395.2 270.2) scale(0.9)"><path d="M12 3 L20 7.5 L12 12 L4 7.5Z" fill="#f28a8a" stroke="#a01a1a" stroke-width="0.8"/><path d="M4 7.5 L12 12 V21 L4 16.5Z" fill="#7ad83a" stroke="#3a8a1a" stroke-width="0.6"/><path d="M20 7.5 L12 12 V21 L20 16.5Z" fill="#f8e04a" stroke="#b8a01a" stroke-width="0.6"/></g><g transform="translate(1395.2 302.2) scale(0.9)"><rect x="8" y="2" width="8" height="6" fill="#e84a4a"/><path d="M12 8 V14 M5 14 H19 M5 14 V17 M19 14 V17 M12 14 V17" stroke="#d8a03a" stroke-width="1.6" fill="none"/><rect x="1" y="17" width="9" height="6" fill="#f8e04a"/><rect x="14" y="17" width="9" height="6" fill="#7ab0e8"/></g><g transform="translate(1395.2 334.2) scale(0.9)"><path d="M4 12 Q4 4 12 5 L12 2 L17 7 L12 12 V9 Q7 9 7 13Z" fill="#5ab85a"/><path d="M20 13 Q20 21 12 20 L12 23 L7 18 L12 13 V16 Q17 16 17 12Z" fill="#f08a3a"/></g><path d="M1438 965 L1443 960 V963 Q1451 963 1450 970 Q1449 974 1445 975 Q1447 972 1446 969 Q1445 966 1443 967 V970Z" fill="#f08a3a"/><path d="M1480 965 L1475 960 V963 Q1467 963 1468 970 Q1469 974 1473 975 Q1471 972 1472 969 Q1473 966 1475 967 V970Z" fill="#5ab85a"/><path d="M1799 966 L1803 973 L1813 959" fill="none" stroke="#4a8a3a" stroke-width="2.4"/><g transform="translate(18.6 991.6) scale(0.95)"><path d="M4.5 9 L11 2.5 L13.5 5 L7.5 11 Q5.5 14 8.5 16.5 Q11 18.5 13.5 16.5 L19.5 10.5 L22 13 L15.5 19.5 Q10.5 24 5.5 19.5 Q1 15 4.5 9Z" fill="#d81818" stroke="#8a1010" stroke-width="0.5"/><path d="M9 4.5 L11 2.5 L13.5 5 L11.5 7Z M17.5 12.5 L19.5 10.5 L22 13 L20 15Z" fill="#fff"/></g><g transform="translate(51.6 991.6) scale(0.95)"><path d="M4 4 L9 19 L13 6 M4 11 L9 19 L14 11 L20 11 M14 6 L20 6" fill="none" stroke="#6ab86a" stroke-width="1"/><rect x="2.5" y="2.5" width="3" height="3" fill="#eee" stroke="#777" stroke-width="0.7"/><rect x="2.5" y="9.5" width="3" height="3" fill="#eee" stroke="#777" stroke-width="0.7"/><rect x="7.5" y="17.5" width="3" height="3" fill="#eee" stroke="#777" stroke-width="0.7"/><rect x="7.5" y="11.5" width="3" height="3" fill="#eee" stroke="#777" stroke-width="0.7"/><rect x="12.5" y="4.5" width="3" height="3" fill="#eee" stroke="#777" stroke-width="0.7"/><rect x="18.5" y="4.5" width="3" height="3" fill="#eee" stroke="#777" stroke-width="0.7"/><rect x="12.5" y="9.5" width="3" height="3" fill="#eee" stroke="#777" stroke-width="0.7"/><rect x="18.5" y="9.5" width="3" height="3" fill="#eee" stroke="#777" stroke-width="0.7"/></g><g transform="translate(84.6 991.6) scale(0.95)"><rect x="4.5" y="4.5" width="3" height="3" fill="none" stroke="#777" stroke-width="0.8"/><rect x="16.5" y="6.5" width="3" height="3" fill="none" stroke="#777" stroke-width="0.8"/><rect x="10.5" y="15.5" width="3" height="3" fill="none" stroke="#777" stroke-width="0.8"/></g><g transform="translate(332.0 991.6) scale(0.95)"><path d="M4 20 V8 L21 3 M4 8 L12 12" fill="none" stroke="#6ab86a" stroke-width="1.1"/><rect x="2.5" y="6.5" width="3" height="3" fill="#ddd" stroke="#777" stroke-width="0.6"/></g><g transform="translate(364.40000000000003 991.6) scale(0.95)"><path d="M3 6 Q8 1 15 3 Q20 5 20 10 Q20 14 15 13 Q12 12 10 15 Q7 19 5 16 Q1 11 3 6Z" fill="#aaa" stroke="#666" stroke-width="0.6"/><path d="M4 8 Q7 4 11 6 Q15 8 12 13 Q10 19 6 18 Q2 14 4 8Z" fill="#8ac48a" stroke="#4a8a4a" stroke-width="0.8"/></g><g transform="translate(397.40000000000003 991.6) scale(0.95)"><path d="M3 3 L21 21 M21 3 L3 21" stroke="#6ab86a" stroke-width="1.5"/><rect x="10.5" y="10.5" width="3" height="3" fill="#ddd" stroke="#777" stroke-width="0.6"/></g><g transform="translate(430.20000000000005 991.6) scale(0.95)"><path d="M3 21 L21 3" stroke="#6ab86a" stroke-width="1.5"/><path d="M6 8 L13 10 L10 13 L19 16 L12 14 L14 11Z" fill="#f6d21a" stroke="#c9a21a" stroke-width="0.5"/></g><g transform="translate(473.6 991.6) scale(0.95)"><path d="M4 19 L10 8 L19 16" fill="none" stroke="#6ab86a" stroke-width="1.2"/><circle cx="4" cy="19" r="1.8" fill="#ccc" stroke="#777" stroke-width="0.6"/><circle cx="10" cy="8" r="1.8" fill="#ccc" stroke="#777" stroke-width="0.6"/><path d="M14 11 L21 3 L23 5 L16 13Z" fill="#f6d21a" stroke="#776" stroke-width="0.5"/></g><g transform="translate(524.8000000000001 991.6) scale(0.95)"><path d="M5 5 V19 Q12 23 19 19 V5" fill="#f2c43a" stroke="#c99a1a" stroke-width="0.7"/><ellipse cx="12" cy="5" rx="7" ry="3" fill="#f8dc7a" stroke="#c99a1a" stroke-width="0.7"/></g><g transform="translate(558.3000000000001 991.6) scale(0.95)"><path d="M5 2 V22 H23" fill="none" stroke="#8a4a1a" stroke-width="2.2"/><path d="M7 18 L16 5 L21 18Z" fill="none" stroke="#d89a3a" stroke-width="1.5"/><path d="M7 18 A8 8 0 0 1 11 11" fill="none" stroke="#8a4a1a" stroke-width="1"/></g><g transform="translate(591.1 991.6) scale(0.95)"><path d="M6 5 Q2 11 6 17 M18 5 Q22 11 18 17 M8.5 7.5 Q6 11 8.5 14.5 M15.5 7.5 Q18 11 15.5 14.5" fill="none" stroke="#e8b81a" stroke-width="1.4"/><circle cx="12" cy="11" r="2.8" fill="#3ab83a" stroke="#111" stroke-width="0.8"/><path d="M12 14 V21" stroke="#111" stroke-width="1.3"/></g><g transform="translate(624.6 991.6) scale(0.95)"><path d="M2 17 L12 12 L22 17 L12 22Z" fill="#a8d84a" stroke="#6a9a2a" stroke-width="0.7"/><path d="M12 17 Q8 11 8 7 Q8 3 12 3 Q16 3 16 7 Q16 11 12 17Z" fill="#e83a2a" stroke="#a01a1a" stroke-width="0.6"/><circle cx="12" cy="7" r="1.5" fill="#fff"/></g><g transform="translate(673.6 991.6) scale(0.95)"><rect x="0.5" y="0.5" width="23" height="23" fill="#3aa83a"/><circle cx="13" cy="10" r="6" fill="none" stroke="#fff" stroke-width="2"/><path d="M9 14 L4 20" stroke="#fff" stroke-width="2.6"/></g><g transform="translate(706.6 991.6) scale(0.95)"><rect x="2" y="2" width="18" height="20" fill="#f2d25a"/><path d="M2 8 Q8 10 12 6 Q15 3 20 5 M2 15 Q7 12 11 16 Q14 20 20 17" fill="none" stroke="#4a9ad8" stroke-width="1.6"/><path d="M5 3 L9 20" stroke="#6ab84a" stroke-width="2"/><path d="M10 18 L22 3 L24 5 L12 20Z" fill="#6a4a2a"/></g><path d="M69.7 1011.7 H77.7 L73.7 1016.2Z" fill="#444"/><path d="M102.5 1011.7 H110.5 L106.5 1016.2Z" fill="#444"/><path d="M383 1001 H391 L387 1005.5Z" fill="#444"/><path d="M459.8 1001 H467.8 L463.8 1005.5Z" fill="#444"/><rect x="6" y="994" width="1" height="1" fill="#c5c5c5"/><rect x="9" y="995.5" width="1" height="1" fill="#c5c5c5"/><rect x="6" y="997" width="1" height="1" fill="#c5c5c5"/><rect x="9" y="998.5" width="1" height="1" fill="#c5c5c5"/><rect x="6" y="1000" width="1" height="1" fill="#c5c5c5"/><rect x="9" y="1001.5" width="1" height="1" fill="#c5c5c5"/><rect x="6" y="1003" width="1" height="1" fill="#c5c5c5"/><rect x="9" y="1004.5" width="1" height="1" fill="#c5c5c5"/><rect x="6" y="1006" width="1" height="1" fill="#c5c5c5"/><rect x="9" y="1007.5" width="1" height="1" fill="#c5c5c5"/><rect x="6" y="1009" width="1" height="1" fill="#c5c5c5"/><rect x="9" y="1010.5" width="1" height="1" fill="#c5c5c5"/><rect x="6" y="1012" width="1" height="1" fill="#c5c5c5"/><rect x="9" y="1013.5" width="1" height="1" fill="#c5c5c5"/><rect x="514" y="994" width="1" height="1" fill="#c5c5c5"/><rect x="517" y="995.5" width="1" height="1" fill="#c5c5c5"/><rect x="514" y="997" width="1" height="1" fill="#c5c5c5"/><rect x="517" y="998.5" width="1" height="1" fill="#c5c5c5"/><rect x="514" y="1000" width="1" height="1" fill="#c5c5c5"/><rect x="517" y="1001.5" width="1" height="1" fill="#c5c5c5"/><rect x="514" y="1003" width="1" height="1" fill="#c5c5c5"/><rect x="517" y="1004.5" width="1" height="1" fill="#c5c5c5"/><rect x="514" y="1006" width="1" height="1" fill="#c5c5c5"/><rect x="517" y="1007.5" width="1" height="1" fill="#c5c5c5"/><rect x="514" y="1009" width="1" height="1" fill="#c5c5c5"/><rect x="517" y="1010.5" width="1" height="1" fill="#c5c5c5"/><rect x="514" y="1012" width="1" height="1" fill="#c5c5c5"/><rect x="517" y="1013.5" width="1" height="1" fill="#c5c5c5"/><rect x="662" y="994" width="1" height="1" fill="#c5c5c5"/><rect x="665" y="995.5" width="1" height="1" fill="#c5c5c5"/><rect x="662" y="997" width="1" height="1" fill="#c5c5c5"/><rect x="665" y="998.5" width="1" height="1" fill="#c5c5c5"/><rect x="662" y="1000" width="1" height="1" fill="#c5c5c5"/><rect x="665" y="1001.5" width="1" height="1" fill="#c5c5c5"/><rect x="662" y="1003" width="1" height="1" fill="#c5c5c5"/><rect x="665" y="1004.5" width="1" height="1" fill="#c5c5c5"/><rect x="662" y="1006" width="1" height="1" fill="#c5c5c5"/><rect x="665" y="1007.5" width="1" height="1" fill="#c5c5c5"/><rect x="662" y="1009" width="1" height="1" fill="#c5c5c5"/><rect x="665" y="1010.5" width="1" height="1" fill="#c5c5c5"/><rect x="662" y="1012" width="1" height="1" fill="#c5c5c5"/><rect x="665" y="1013.5" width="1" height="1" fill="#c5c5c5"/><rect x="744" y="994" width="1" height="1" fill="#c5c5c5"/><rect x="747" y="995.5" width="1" height="1" fill="#c5c5c5"/><rect x="744" y="997" width="1" height="1" fill="#c5c5c5"/><rect x="747" y="998.5" width="1" height="1" fill="#c5c5c5"/><rect x="744" y="1000" width="1" height="1" fill="#c5c5c5"/><rect x="747" y="1001.5" width="1" height="1" fill="#c5c5c5"/><rect x="744" y="1003" width="1" height="1" fill="#c5c5c5"/><rect x="747" y="1004.5" width="1" height="1" fill="#c5c5c5"/><rect x="744" y="1006" width="1" height="1" fill="#c5c5c5"/><rect x="747" y="1007.5" width="1" height="1" fill="#c5c5c5"/><rect x="744" y="1009" width="1" height="1" fill="#c5c5c5"/><rect x="747" y="1010.5" width="1" height="1" fill="#c5c5c5"/><rect x="744" y="1012" width="1" height="1" fill="#c5c5c5"/><rect x="747" y="1013.5" width="1" height="1" fill="#c5c5c5"/><rect x="1160" y="994" width="1" height="1" fill="#c5c5c5"/><rect x="1163" y="995.5" width="1" height="1" fill="#c5c5c5"/><rect x="1160" y="997" width="1" height="1" fill="#c5c5c5"/><rect x="1163" y="998.5" width="1" height="1" fill="#c5c5c5"/><rect x="1160" y="1000" width="1" height="1" fill="#c5c5c5"/><rect x="1163" y="1001.5" width="1" height="1" fill="#c5c5c5"/><rect x="1160" y="1003" width="1" height="1" fill="#c5c5c5"/><rect x="1163" y="1004.5" width="1" height="1" fill="#c5c5c5"/><rect x="1160" y="1006" width="1" height="1" fill="#c5c5c5"/><rect x="1163" y="1007.5" width="1" height="1" fill="#c5c5c5"/><rect x="1160" y="1009" width="1" height="1" fill="#c5c5c5"/><rect x="1163" y="1010.5" width="1" height="1" fill="#c5c5c5"/><rect x="1160" y="1012" width="1" height="1" fill="#c5c5c5"/><rect x="1163" y="1013.5" width="1" height="1" fill="#c5c5c5"/><path d="M1128 1002 L1135 995 V999 Q1144 999 1144 1006 Q1144 1011 1140 1012 Q1141 1009 1140 1006 Q1139 1004 1135 1004.5 V1009Z" fill="#b3b3b3"/><g transform="translate(1171.0 991.0) scale(1.0)"><g opacity="0.75"><path transform="translate(1 1) scale(1.0)" d="M3 3 Q7 0 11 2 Q15 1 18 3 Q20 7 16 9 Q13 10 11 13 Q7 16 4 13 Q1 9 3 3Z" fill="#d3d3ce" stroke="#b8b8b2" stroke-width="0.8"/></g></g><g transform="translate(1216.2 991.0) scale(1.0)"><g opacity="0.75"><path transform="translate(1 1) scale(1.0)" d="M3 3 Q7 0 11 2 Q15 1 18 3 Q20 7 16 9 Q13 10 11 13 Q7 16 4 13 Q1 9 3 3Z" fill="#d3d3ce" stroke="#b8b8b2" stroke-width="0.8"/><rect x="14" y="14" width="9" height="9" rx="1.5" fill="#c9c7bd"/><circle cx="18.5" cy="18.5" r="2" fill="none" stroke="#fff" stroke-width="1"/></g></g><g transform="translate(1250.3 991.0) scale(1.0)"><g opacity="0.75"><path d="M3 4 Q6 1 11 3 V12 Q6 14 3 11 Q1 8 3 4Z M13 3 Q18 1 21 4 Q23 8 21 11 Q18 14 13 12Z" fill="#d6d6d0" stroke="#b8b8b2" stroke-width="0.8"/><circle cx="9" cy="19" r="2.5" fill="none" stroke="#b08a8a" stroke-width="1"/><circle cx="15" cy="19" r="2.5" fill="none" stroke="#b08a8a" stroke-width="1"/><path d="M9.5 16.5 L13 8 M14.5 16.5 L11 8" stroke="#aaa" stroke-width="0.9"/></g></g><g transform="translate(1282.8 991.0) scale(1.0)"><g opacity="0.75"><path d="M3 5 Q8 1 12 4 Q16 1 21 5 Q23 10 19 12 Q14 14 12 12 Q8 14 4 12 Q1 9 3 5Z" fill="#d6d6d0" stroke="#b8b8b2" stroke-width="0.8"/><path d="M10 7 H15 M10 10 H15" stroke="#999" stroke-width="0.8"/><path d="M6 13 Q7 19 13 22" fill="none" stroke="#888" stroke-width="0.9"/></g></g><g transform="translate(1316.5 991.0) scale(1.0)"><g opacity="0.75"><path transform="translate(1 1) scale(1.0)" d="M3 3 Q7 0 11 2 Q15 1 18 3 Q20 7 16 9 Q13 10 11 13 Q7 16 4 13 Q1 9 3 3Z" fill="#d3d3ce" stroke="#b8b8b2" stroke-width="0.8"/><rect x="14" y="14" width="9" height="9" rx="1.5" fill="#c9c7bd"/><circle cx="18.5" cy="18.5" r="2.2" fill="none" stroke="#fff" stroke-width="1.1"/></g></g><g transform="translate(1349.4 991.0) scale(1.0)"><g opacity="0.75"><path transform="translate(1 1) scale(1.0)" d="M3 3 Q7 0 11 2 Q15 1 18 3 Q20 7 16 9 Q13 10 11 13 Q7 16 4 13 Q1 9 3 3Z" fill="#d3d3ce" stroke="#b8b8b2" stroke-width="0.8"/><ellipse cx="9" cy="7" rx="4" ry="2.5" fill="#eee" stroke="#bbb" stroke-width="0.7"/><rect x="14" y="14" width="9" height="9" rx="1.5" fill="#c9c7bd"/><circle cx="18.5" cy="18.5" r="2" fill="none" stroke="#fff" stroke-width="1"/></g></g><g transform="translate(1394.6 991.0) scale(1.0)"><g opacity="0.75"><path d="M4 17 Q1 12 7 8 Q12 3 18 4 Q23 6 20 12 Q16 17 10 20 Q6 21 4 17Z" fill="#d8ddd2" stroke="#b3b8ad" stroke-width="0.9"/><path d="M7 16 Q5 13 9 10 Q13 6 17 7 Q19 8 17 12 Q14 15 10 17Z" fill="none" stroke="#b3b8ad" stroke-width="0.8"/></g></g><g transform="translate(1439.4 991.0) scale(1.0)"><g opacity="0.75"><path transform="translate(1 1) scale(1.0)" d="M3 3 Q7 0 11 2 Q15 1 18 3 Q20 7 16 9 Q13 10 11 13 Q7 16 4 13 Q1 9 3 3Z" fill="#d3d3ce" stroke="#b8b8b2" stroke-width="0.8"/><rect x="14" y="14" width="9" height="9" rx="1.5" fill="#c9c7bd"/><circle cx="18.5" cy="18.5" r="2" fill="none" stroke="#fff" stroke-width="1"/></g></g><g transform="translate(1485.0 991.0) scale(1.0)"><g opacity="0.75"><path transform="translate(2 0) scale(0.95)" d="M3 3 Q7 0 11 2 Q15 1 18 3 Q20 7 16 9 Q13 10 11 13 Q7 16 4 13 Q1 9 3 3Z" fill="#d3d3ce" stroke="#b8b8b2" stroke-width="0.8"/><path d="M2 20 Q3 14 7 13 Q10 15 8 20 Q5 23 2 20Z" fill="#d3d3ce" stroke="#b8b8b2" stroke-width="0.8"/><rect x="14" y="14" width="9" height="9" rx="1.5" fill="#c9c7bd"/><circle cx="18.5" cy="18.5" r="2" fill="none" stroke="#fff" stroke-width="1"/></g></g><g transform="translate(1529.4 991.0) scale(1.0)"><g opacity="0.75"><path transform="translate(1 1) scale(1.0)" d="M3 3 Q7 0 11 2 Q15 1 18 3 Q20 7 16 9 Q13 10 11 13 Q7 16 4 13 Q1 9 3 3Z" fill="#d3d3ce" stroke="#b8b8b2" stroke-width="0.8"/><ellipse cx="9" cy="7" rx="4" ry="2.5" fill="#eee" stroke="#bbb" stroke-width="0.7"/><rect x="14" y="14" width="9" height="9" rx="1.5" fill="#c9c7bd"/><circle cx="18.5" cy="18.5" r="2" fill="none" stroke="#fff" stroke-width="1"/></g></g><g transform="translate(1566.3 991.0) scale(1.0)"><g opacity="0.75"><path d="M3 3 L9 14 L13 7 H20" fill="none" stroke="#aaa" stroke-width="1"/><rect x="2" y="2" width="3" height="3" fill="#fff" stroke="#aaa" stroke-width="0.7"/><rect x="8" y="13" width="3" height="3" fill="#fff" stroke="#aaa" stroke-width="0.7"/><rect x="12" y="6" width="3" height="3" fill="#fff" stroke="#aaa" stroke-width="0.7"/><rect x="19" y="6" width="3" height="3" fill="#fff" stroke="#aaa" stroke-width="0.7"/><rect x="13" y="13" width="10" height="10" rx="1.5" fill="#c9c7bd"/><circle cx="18.0" cy="18.0" r="2.3" fill="none" stroke="#fff" stroke-width="1.2"/></g></g><g transform="translate(1608.0 991.0) scale(1.0)"><g opacity="0.75"><path d="M3 4 Q10 1 19 3 Q23 8 17 12 Q12 14 10 21 Q5 21 4 14 Q2 9 3 4Z" fill="#d6dcd0" stroke="#b8bdb2" stroke-width="0.8"/></g></g><g transform="translate(1640.9 991.0) scale(1.0)"><g opacity="0.75"><path d="M3 4 Q10 1 19 3 Q23 8 17 12 Q12 14 10 21 Q5 21 4 14 Q2 9 3 4Z" fill="#d6dcd0" stroke="#b8bdb2" stroke-width="0.8"/></g></g><g transform="translate(1673.4 991.0) scale(1.0)"><g opacity="0.75"><path d="M3 4 Q10 1 19 3 Q23 8 17 12 Q12 14 10 21 Q5 21 4 14 Q2 9 3 4Z" fill="#d6dcd0" stroke="#b8bdb2" stroke-width="0.8"/></g></g><g transform="translate(1706.3 991.0) scale(1.0)"><g opacity="0.75"><path d="M3 5 H21 M3 12 H21 M3 19 H21 M9 3 V21 M15 3 V21" stroke="#bbb" stroke-width="0.9"/><path d="M8 5 Q11 8 14 5 M8 12 Q11 15 14 12" fill="none" stroke="#999" stroke-width="0.8"/></g></g><path d="M1201.6 1001 H1209.6 L1205.6 1005.5Z" fill="#ccc"/><path d="M1378.8 1001 H1386.8 L1382.8 1005.5Z" fill="#ccc"/><path d="M1423.6 1001 H1431.6 L1427.6 1005.5Z" fill="#ccc"/><path d="M1469.2 1001 H1477.2 L1473.2 1005.5Z" fill="#ccc"/><path d="M1514 1001 H1522 L1518 1005.5Z" fill="#ccc"/><path d="M1592 1001 H1600 L1596 1005.5Z" fill="#ccc"/><g transform="translate(1201 1031)"><path d="M3 2 Q9 0 12 6 Q14 12 9 16 Q3 18 1 12 Q0 5 3 2Z" fill="none" stroke="#333" stroke-width="1.5"/><path d="M7 4 V9" stroke="#333" stroke-width="1.3"/><path d="M11 1 L17 -3" stroke="#333" stroke-width="1"/></g><g transform="translate(1372 1032)"><path d="M3 7 V4 Q3 0 7 0 Q11 0 11 4 V7" fill="none" stroke="#444" stroke-width="1.5"/><rect x="1" y="7" width="12" height="9" rx="1" fill="#444"/></g><g transform="translate(1786 1031)"><circle cx="8" cy="8" r="6.5" fill="none" stroke="#555" stroke-width="1"/><path d="M1.5 8 H14.5 M8 1.5 V14.5" stroke="#555" stroke-width="0.8"/><ellipse cx="8" cy="8" rx="3" ry="6.5" fill="none" stroke="#555" stroke-width="0.8"/></g><g transform="translate(1897 1030)"><path d="M2 9 Q2 2 9 2 Q16 2 16 9 Q16 12 14 14 L15 18 L10 15.5 Q2 16 2 9Z" fill="#555"/><circle cx="6" cy="9" r="1.2" fill="#fff"/><circle cx="9" cy="9" r="1.2" fill="#fff"/><circle cx="12" cy="9" r="1.2" fill="#fff"/></g></svg></body></html>
